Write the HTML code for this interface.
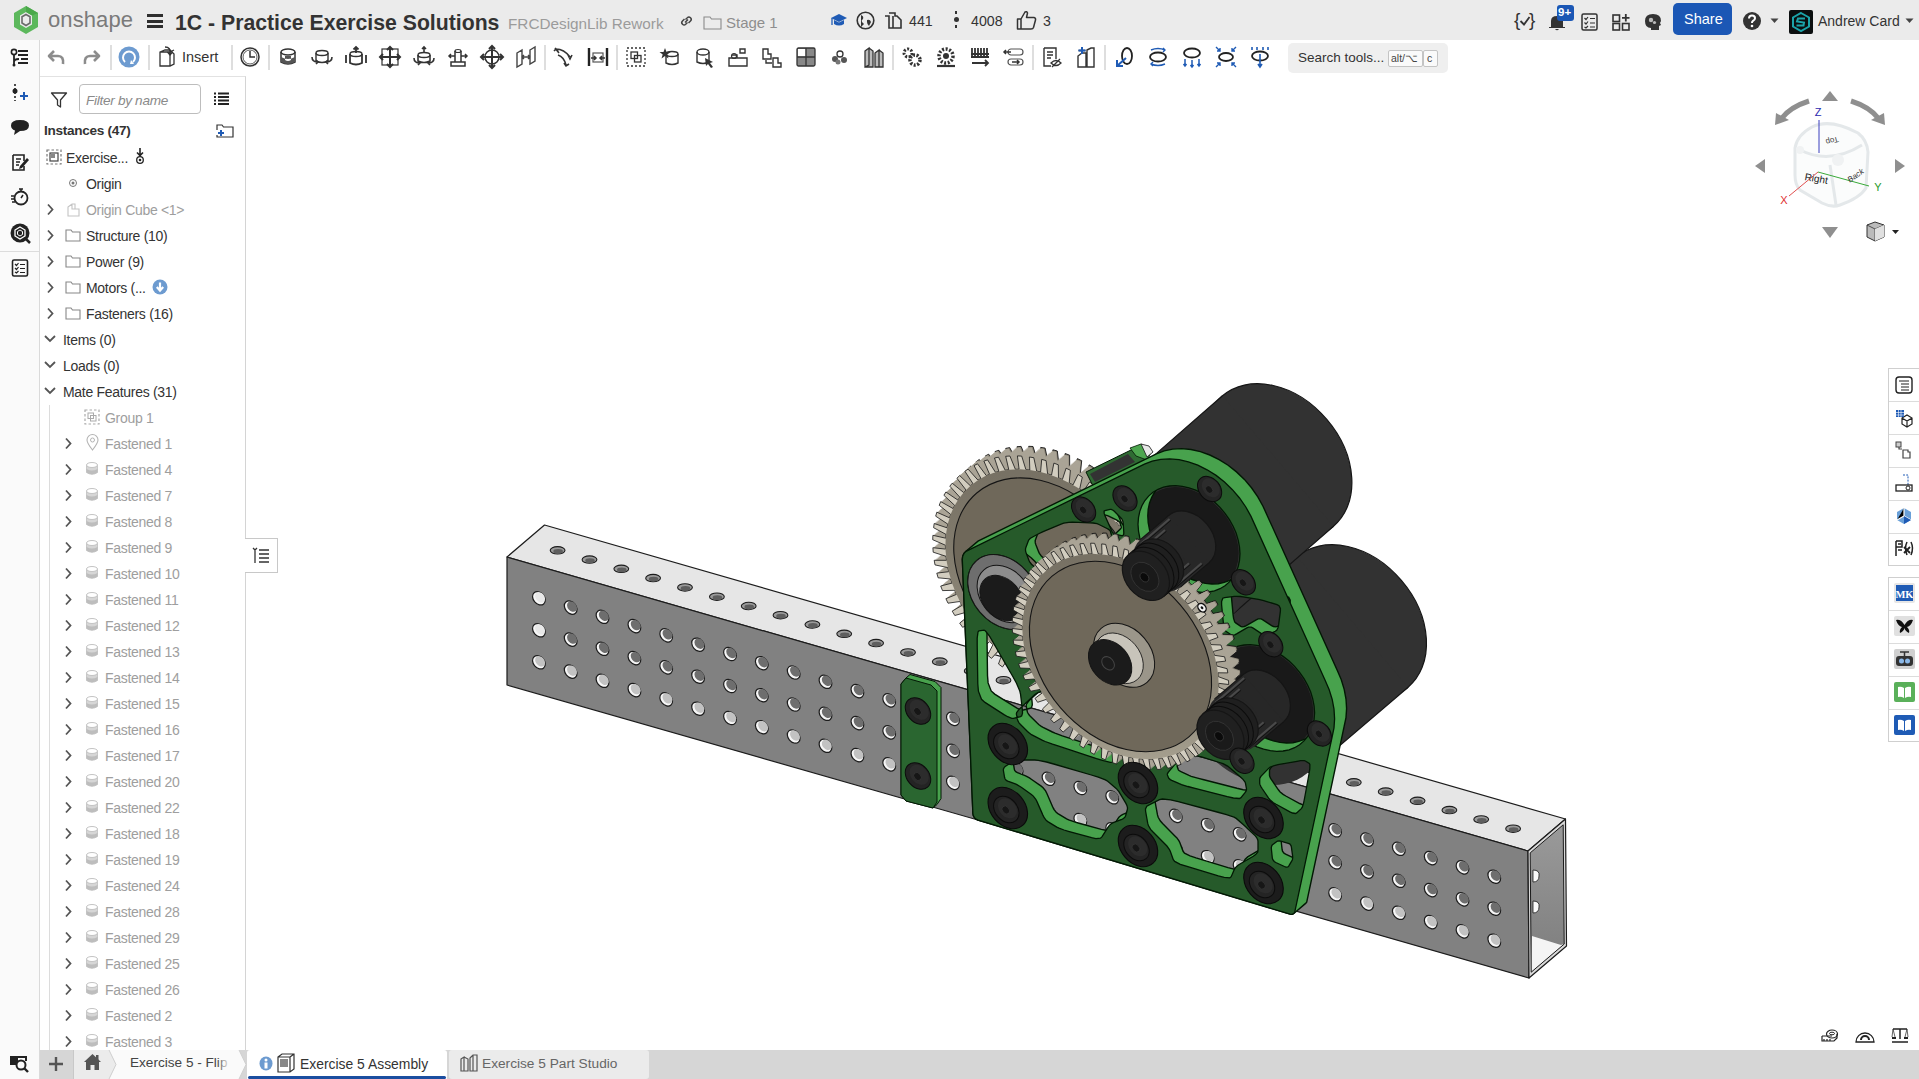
<!DOCTYPE html>
<html><head><meta charset="utf-8">
<style>
*{box-sizing:border-box;margin:0;padding:0}
html,body{width:1919px;height:1079px;overflow:hidden;background:#fff;font-family:"Liberation Sans",sans-serif;color:#333}
.a{position:absolute}
#top{left:0;top:0;width:1919px;height:40px;background:#ebebeb}
#tb{left:0;top:40px;width:1919px;height:37px;background:#fff}
#lc{left:0;top:40px;width:40px;height:1039px;background:#fafafa;border-right:1px solid #dadada}
#panel{left:40px;top:76px;width:206px;height:974px;background:#fff;border-right:1px solid #d4d4d4;border-top:1px solid #e2e2e2}
.t{position:absolute;white-space:nowrap;font-size:13.5px;line-height:16px}
.g{color:#9a9a9a}
.sep{position:absolute;top:45px;width:2px;height:25px;background:#dedede}
#bot{left:40px;top:1050px;width:1879px;height:29px;background:#d6d6d6}
svg{position:absolute;overflow:visible}
</style></head><body>
<div id="top" class="a"></div>
<div id="tb" class="a"></div>
<div id="lc" class="a"></div>
<div id="panel" class="a"></div>
<div id="bot" class="a"></div>

<!-- TOP BAR -->
<svg class="a" style="left:13px;top:5px" width="26" height="30" viewBox="0 0 26 30">
<path d="M13 1 L25 8 L25 22 L13 29 L1 22 L1 8 Z" fill="#5cb85c"/>
<path d="M13 7 L19 10.5 L19 19.5 L13 23 L7 19.5 L7 10.5 Z" fill="#ebebeb"/>
<path d="M13 9.5 L17 11.8 L17 18 L13 20.5 L9 18 L9 11.8 Z" fill="none" stroke="#6b6b6b" stroke-width="1.6"/>
<path d="M13 1 L25 8 L19 10.5 L13 7Z" fill="#4aa84a"/>
</svg>
<div class="t" style="left:48px;top:7px;font-size:22px;line-height:26px;color:#7a7a7a;letter-spacing:0.1px">onshape</div>
<div class="a" style="left:147px;top:14px;width:16px;height:3px;background:#2e2e2e"></div>
<div class="a" style="left:147px;top:19.5px;width:16px;height:3px;background:#2e2e2e"></div>
<div class="a" style="left:147px;top:25px;width:16px;height:3px;background:#2e2e2e"></div>
<div class="t" style="left:175px;top:10.5px;font-size:22.4px;line-height:24px;font-weight:bold;color:#333;transform:scaleX(0.948);transform-origin:0 0">1C - Practice Exercise Solutions</div>
<div class="t" style="left:508px;top:14.5px;font-size:15.3px;line-height:18px;color:#9b9b9b">FRCDesignLib Rework</div>
<svg class="a" style="left:679px;top:14px" width="15" height="14" viewBox="0 0 15 14"><path d="M6 8.5 L9 5.5 M5.5 5 L3.5 7 a2.2 2.2 0 0 0 3.2 3.2 L8.5 8.5 M9.5 9 L11.5 7 a2.2 2.2 0 0 0 -3.2 -3.2 L6.5 5.5" fill="none" stroke="#444" stroke-width="1.5"/></svg>
<svg class="a" style="left:703px;top:15px" width="19" height="15" viewBox="0 0 19 15"><path d="M1 2 H7 L8.5 4 H18 V14 H1 Z" fill="none" stroke="#8a8a8a" stroke-width="1.1"/></svg>
<div class="t" style="left:726px;top:14px;font-size:15px;line-height:18px;color:#8e8e8e">Stage 1</div>
<svg class="a" style="left:830px;top:12px" width="18" height="17" viewBox="0 0 18 17"><path d="M9 2 L17 6 L9 10 L1 6Z" fill="#1f5bb5"/><path d="M4 8 V12 Q9 15 14 12 V8 L9 10.5Z" fill="#1f5bb5"/><path d="M2 6 V13" stroke="#1f5bb5" stroke-width="1.3"/></svg>
<svg class="a" style="left:856px;top:11px" width="19" height="19" viewBox="0 0 19 19"><circle cx="9.5" cy="9.5" r="8.3" fill="none" stroke="#333" stroke-width="1.6"/><path d="M5 4 Q8 5 7 8 Q5 9 6 11 L8 13 Q6 15 5 16 M11 9 Q14 8 15 11 L13 15 Q11 13 11 11Z" fill="#333"/></svg>
<svg class="a" style="left:884px;top:12px" width="19" height="17" viewBox="0 0 19 17"><path d="M1 4 H5 V16 H12 M5 1 H11 V4 H13 L17 8 V16 H9 V4" fill="none" stroke="#333" stroke-width="1.6"/></svg>
<div class="t" style="left:909px;top:12px;font-size:14.2px;line-height:18px;color:#333">441</div>
<div class="a" style="left:955px;top:11px;width:2px;height:3px;background:#333"></div>
<div class="a" style="left:953.5px;top:17px;width:5px;height:5px;border-radius:3px;background:#333"></div>
<div class="a" style="left:955px;top:25px;width:2px;height:3px;background:#333"></div>
<div class="t" style="left:971px;top:12px;font-size:14.2px;line-height:18px;color:#333">4008</div>
<svg class="a" style="left:1016px;top:10px" width="21" height="20" viewBox="0 0 21 20"><path d="M1.5 9 H5 V19 H1.5Z M5 9 L9 2 Q11 1 11.5 3 L10.5 7.5 H18 Q20 8 19.5 10 L17.5 17.5 Q17 19 15 19 H5" fill="none" stroke="#333" stroke-width="1.5" stroke-linejoin="round"/></svg>
<div class="t" style="left:1043px;top:12px;font-size:14.2px;line-height:18px;color:#333">3</div>

<div class="t" style="left:1514px;top:9px;font-size:19px;line-height:22px;color:#333">{</div>
<svg class="a" style="left:1519px;top:15px" width="12" height="12" viewBox="0 0 12 12"><path d="M1.5 6 L5 9.5 L10.5 2" fill="none" stroke="#333" stroke-width="1.8"/></svg>
<div class="t" style="left:1529px;top:9px;font-size:19px;line-height:22px;color:#333">}</div>
<svg class="a" style="left:1548px;top:12px" width="18" height="19" viewBox="0 0 18 19"><path d="M3 15 V9 Q3 4 9 4 Q15 4 15 9 V15 H17 V16 H1 V15Z M7 17 Q9 19.5 11 17Z" fill="#333"/></svg>
<div class="a" style="left:1557px;top:5px;width:17px;height:16px;background:#1b57b5;border-radius:3px"></div>
<div class="t" style="left:1558px;top:5px;font-size:11.5px;line-height:14px;color:#fff;font-weight:bold">9+</div>
<svg class="a" style="left:1581px;top:13px" width="17" height="18" viewBox="0 0 17 18"><rect x="1" y="1" width="15" height="16" rx="1.5" fill="none" stroke="#333" stroke-width="1.5"/><path d="M3.5 5 L5 6.5 L7 4 M3.5 9.5 L5 11 L7 8.5 M3.5 14 L5 15 L7 13 M9 5.5H14 M9 10H14 M9 14H14" fill="none" stroke="#333" stroke-width="1.2"/></svg>
<svg class="a" style="left:1612px;top:13px" width="19" height="18" viewBox="0 0 19 18"><rect x="1" y="2" width="6.5" height="6.5" fill="none" stroke="#333" stroke-width="1.6"/><rect x="1" y="10.5" width="6.5" height="6.5" fill="none" stroke="#333" stroke-width="1.6"/><rect x="10.5" y="10.5" width="6.5" height="6.5" fill="none" stroke="#333" stroke-width="1.6"/><path d="M13.8 1 V8.5 M10 4.8 H17.5" stroke="#333" stroke-width="1.8"/></svg>
<svg class="a" style="left:1644px;top:13px" width="18" height="18" viewBox="0 0 18 18"><path d="M9 1 Q17 1 17 8 L16 10 L17 12 L15 13 V17 H7 V15 Q1 15 1 8 Q1 1 9 1Z" fill="#333"/><circle cx="7" cy="7" r="2.2" fill="#bbb"/><circle cx="10.5" cy="9.5" r="1.6" fill="#bbb"/></svg>
<div class="a" style="left:1673px;top:3px;width:59px;height:32px;background:#1b57b5;border-radius:5px"></div>
<div class="t" style="left:1684px;top:11px;font-size:14.5px;line-height:17px;color:#fff">Share</div>
<svg class="a" style="left:1742px;top:11px" width="20" height="20" viewBox="0 0 20 20"><circle cx="10" cy="10" r="9" fill="#333"/><path d="M7 7.5 Q7 4.5 10 4.5 Q13 4.5 13 7.2 Q13 9 10.8 10 Q10 10.5 10 12" fill="none" stroke="#fff" stroke-width="2"/><circle cx="10" cy="15" r="1.3" fill="#fff"/></svg>
<svg class="a" style="left:1770px;top:18px" width="9" height="6" viewBox="0 0 9 6"><path d="M0.5 0.5 H8.5 L4.5 5Z" fill="#444"/></svg>
<svg class="a" style="left:1789px;top:10px" width="24" height="24" viewBox="0 0 24 24"><rect width="24" height="24" rx="2" fill="#0b0e0f"/><path d="M12 3 L20 7.5 V16.5 L12 21 L4 16.5 V7.5Z" fill="none" stroke="#1ba3a9" stroke-width="2"/><path d="M16 8.5 L9 8.5 L8 11.5 L15 12.5 L14.5 15.5 L7.5 15.5" fill="none" stroke="#1ba3a9" stroke-width="2"/></svg>
<div class="t" style="left:1818px;top:12px;font-size:14px;line-height:18px;color:#333">Andrew Card</div>
<svg class="a" style="left:1905px;top:18px" width="9" height="6" viewBox="0 0 9 6"><path d="M0.5 0.5 H8.5 L4.5 5Z" fill="#444"/></svg>

<!-- MODEL -->
<svg class="a" style="left:0;top:0" width="1919" height="1079" viewBox="0 0 1919 1079">
<polygon points="507.0,557.0 544.5,525.0 1565.5,819.0 1528.0,851.0" fill="#e6e6e6" stroke="#1c1c1c" stroke-width="1.2" stroke-linejoin="round"/>
<polygon points="507.0,557.0 1528.0,851.0 1529.0,978.0 507.0,685.0" fill="#818181" stroke="#1c1c1c" stroke-width="1.2" stroke-linejoin="round"/>
<polygon points="1528.0,851.0 1565.5,819.0 1566.5,946.0 1529.0,978.0" fill="#d9d9d9" stroke="#1c1c1c" stroke-width="1.2" stroke-linejoin="round"/>
<defs><linearGradient id="tin" x1="0" y1="0" x2="0" y2="1"><stop offset="0" stop-color="#9a9a9a"/><stop offset="1" stop-color="#7c7c7c"/></linearGradient></defs>
<polygon points="1530.2,852.9 1563.2,824.8 1564.2,944.1 1531.2,972.2" fill="url(#tin)"/>
<polygon points="1532.0,936.0 1561.0,945.0 1564.2,944.1 1531.2,972.2" fill="#f4f4f4"/>
<polygon points="1530.2,852.9 1563.2,824.8 1564.2,944.1 1531.2,972.2" fill="none" stroke="#1c1c1c" stroke-width="1"/>
<path d="M1533,870 Q1540,870 1539,876 Q1539,882 1533,882Z" fill="#fafafa" stroke="#1c1c1c" stroke-width="0.8"/>
<path d="M1533,901 Q1540,901 1539,907 Q1539,913 1533,913Z" fill="#fafafa" stroke="#1c1c1c" stroke-width="0.8"/>
<ellipse cx="557.6" cy="550.3" rx="7.39" ry="3.70" transform="rotate(179.75 557.6 550.3)" fill="#9a9a9a" stroke="#1c1c1c" stroke-width="1.1"/>
<ellipse cx="558.1" cy="551.3" rx="4.80" ry="2.40" transform="rotate(179.75 558.1 551.3)" fill="#5e5e5e"/>
<ellipse cx="589.5" cy="559.6" rx="7.39" ry="3.70" transform="rotate(179.75 589.5 559.6)" fill="#9a9a9a" stroke="#1c1c1c" stroke-width="1.1"/>
<ellipse cx="590.0" cy="560.6" rx="4.80" ry="2.40" transform="rotate(179.75 590.0 560.6)" fill="#5e5e5e"/>
<ellipse cx="621.3" cy="568.8" rx="7.39" ry="3.70" transform="rotate(179.75 621.3 568.8)" fill="#9a9a9a" stroke="#1c1c1c" stroke-width="1.1"/>
<ellipse cx="621.8" cy="569.8" rx="4.80" ry="2.40" transform="rotate(179.75 621.8 569.8)" fill="#5e5e5e"/>
<ellipse cx="653.1" cy="578.1" rx="7.39" ry="3.70" transform="rotate(179.75 653.1 578.1)" fill="#9a9a9a" stroke="#1c1c1c" stroke-width="1.1"/>
<ellipse cx="653.6" cy="579.1" rx="4.80" ry="2.40" transform="rotate(179.75 653.6 579.1)" fill="#5e5e5e"/>
<ellipse cx="685.0" cy="587.4" rx="7.39" ry="3.70" transform="rotate(179.75 685.0 587.4)" fill="#9a9a9a" stroke="#1c1c1c" stroke-width="1.1"/>
<ellipse cx="685.5" cy="588.4" rx="4.80" ry="2.40" transform="rotate(179.75 685.5 588.4)" fill="#5e5e5e"/>
<ellipse cx="716.9" cy="596.7" rx="7.39" ry="3.70" transform="rotate(179.75 716.9 596.7)" fill="#9a9a9a" stroke="#1c1c1c" stroke-width="1.1"/>
<ellipse cx="717.4" cy="597.7" rx="4.80" ry="2.40" transform="rotate(179.75 717.4 597.7)" fill="#5e5e5e"/>
<ellipse cx="748.7" cy="606.0" rx="7.39" ry="3.70" transform="rotate(179.75 748.7 606.0)" fill="#9a9a9a" stroke="#1c1c1c" stroke-width="1.1"/>
<ellipse cx="749.2" cy="607.0" rx="4.80" ry="2.40" transform="rotate(179.75 749.2 607.0)" fill="#5e5e5e"/>
<ellipse cx="780.5" cy="615.2" rx="7.39" ry="3.70" transform="rotate(179.75 780.5 615.2)" fill="#9a9a9a" stroke="#1c1c1c" stroke-width="1.1"/>
<ellipse cx="781.0" cy="616.2" rx="4.80" ry="2.40" transform="rotate(179.75 781.0 616.2)" fill="#5e5e5e"/>
<ellipse cx="812.4" cy="624.5" rx="7.39" ry="3.70" transform="rotate(179.75 812.4 624.5)" fill="#9a9a9a" stroke="#1c1c1c" stroke-width="1.1"/>
<ellipse cx="812.9" cy="625.5" rx="4.80" ry="2.40" transform="rotate(179.75 812.9 625.5)" fill="#5e5e5e"/>
<ellipse cx="844.2" cy="633.8" rx="7.39" ry="3.70" transform="rotate(179.75 844.2 633.8)" fill="#9a9a9a" stroke="#1c1c1c" stroke-width="1.1"/>
<ellipse cx="844.8" cy="634.8" rx="4.80" ry="2.40" transform="rotate(179.75 844.8 634.8)" fill="#5e5e5e"/>
<ellipse cx="876.1" cy="643.1" rx="7.39" ry="3.70" transform="rotate(179.75 876.1 643.1)" fill="#9a9a9a" stroke="#1c1c1c" stroke-width="1.1"/>
<ellipse cx="876.6" cy="644.1" rx="4.80" ry="2.40" transform="rotate(179.75 876.6 644.1)" fill="#5e5e5e"/>
<ellipse cx="908.0" cy="652.4" rx="7.39" ry="3.70" transform="rotate(179.75 908.0 652.4)" fill="#9a9a9a" stroke="#1c1c1c" stroke-width="1.1"/>
<ellipse cx="908.5" cy="653.4" rx="4.80" ry="2.40" transform="rotate(179.75 908.5 653.4)" fill="#5e5e5e"/>
<ellipse cx="939.8" cy="661.6" rx="7.39" ry="3.70" transform="rotate(179.75 939.8 661.6)" fill="#9a9a9a" stroke="#1c1c1c" stroke-width="1.1"/>
<ellipse cx="940.3" cy="662.6" rx="4.80" ry="2.40" transform="rotate(179.75 940.3 662.6)" fill="#5e5e5e"/>
<ellipse cx="971.7" cy="670.9" rx="7.39" ry="3.70" transform="rotate(179.75 971.7 670.9)" fill="#9a9a9a" stroke="#1c1c1c" stroke-width="1.1"/>
<ellipse cx="972.2" cy="671.9" rx="4.80" ry="2.40" transform="rotate(179.75 972.2 671.9)" fill="#5e5e5e"/>
<ellipse cx="1003.5" cy="680.2" rx="7.39" ry="3.70" transform="rotate(179.75 1003.5 680.2)" fill="#9a9a9a" stroke="#1c1c1c" stroke-width="1.1"/>
<ellipse cx="1004.0" cy="681.2" rx="4.80" ry="2.40" transform="rotate(179.75 1004.0 681.2)" fill="#5e5e5e"/>
<ellipse cx="1035.3" cy="689.5" rx="7.39" ry="3.70" transform="rotate(179.75 1035.3 689.5)" fill="#9a9a9a" stroke="#1c1c1c" stroke-width="1.1"/>
<ellipse cx="1035.8" cy="690.5" rx="4.80" ry="2.40" transform="rotate(179.75 1035.8 690.5)" fill="#5e5e5e"/>
<ellipse cx="1067.2" cy="698.8" rx="7.39" ry="3.70" transform="rotate(179.75 1067.2 698.8)" fill="#9a9a9a" stroke="#1c1c1c" stroke-width="1.1"/>
<ellipse cx="1067.7" cy="699.8" rx="4.80" ry="2.40" transform="rotate(179.75 1067.7 699.8)" fill="#5e5e5e"/>
<ellipse cx="1099.1" cy="708.0" rx="7.39" ry="3.70" transform="rotate(179.75 1099.1 708.0)" fill="#9a9a9a" stroke="#1c1c1c" stroke-width="1.1"/>
<ellipse cx="1099.6" cy="709.0" rx="4.80" ry="2.40" transform="rotate(179.75 1099.6 709.0)" fill="#5e5e5e"/>
<ellipse cx="1130.9" cy="717.3" rx="7.39" ry="3.70" transform="rotate(179.75 1130.9 717.3)" fill="#9a9a9a" stroke="#1c1c1c" stroke-width="1.1"/>
<ellipse cx="1131.4" cy="718.3" rx="4.80" ry="2.40" transform="rotate(179.75 1131.4 718.3)" fill="#5e5e5e"/>
<ellipse cx="1162.8" cy="726.6" rx="7.39" ry="3.70" transform="rotate(179.75 1162.8 726.6)" fill="#9a9a9a" stroke="#1c1c1c" stroke-width="1.1"/>
<ellipse cx="1163.2" cy="727.6" rx="4.80" ry="2.40" transform="rotate(179.75 1163.2 727.6)" fill="#5e5e5e"/>
<ellipse cx="1194.6" cy="735.9" rx="7.39" ry="3.70" transform="rotate(179.75 1194.6 735.9)" fill="#9a9a9a" stroke="#1c1c1c" stroke-width="1.1"/>
<ellipse cx="1195.1" cy="736.9" rx="4.80" ry="2.40" transform="rotate(179.75 1195.1 736.9)" fill="#5e5e5e"/>
<ellipse cx="1226.5" cy="745.2" rx="7.39" ry="3.70" transform="rotate(179.75 1226.5 745.2)" fill="#9a9a9a" stroke="#1c1c1c" stroke-width="1.1"/>
<ellipse cx="1227.0" cy="746.2" rx="4.80" ry="2.40" transform="rotate(179.75 1227.0 746.2)" fill="#5e5e5e"/>
<ellipse cx="1258.3" cy="754.4" rx="7.39" ry="3.70" transform="rotate(179.75 1258.3 754.4)" fill="#9a9a9a" stroke="#1c1c1c" stroke-width="1.1"/>
<ellipse cx="1258.8" cy="755.4" rx="4.80" ry="2.40" transform="rotate(179.75 1258.8 755.4)" fill="#5e5e5e"/>
<ellipse cx="1290.2" cy="763.7" rx="7.39" ry="3.70" transform="rotate(179.75 1290.2 763.7)" fill="#9a9a9a" stroke="#1c1c1c" stroke-width="1.1"/>
<ellipse cx="1290.7" cy="764.7" rx="4.80" ry="2.40" transform="rotate(179.75 1290.7 764.7)" fill="#5e5e5e"/>
<ellipse cx="1322.0" cy="773.0" rx="7.39" ry="3.70" transform="rotate(179.75 1322.0 773.0)" fill="#9a9a9a" stroke="#1c1c1c" stroke-width="1.1"/>
<ellipse cx="1322.5" cy="774.0" rx="4.80" ry="2.40" transform="rotate(179.75 1322.5 774.0)" fill="#5e5e5e"/>
<ellipse cx="1353.8" cy="782.3" rx="7.39" ry="3.70" transform="rotate(179.75 1353.8 782.3)" fill="#9a9a9a" stroke="#1c1c1c" stroke-width="1.1"/>
<ellipse cx="1354.3" cy="783.3" rx="4.80" ry="2.40" transform="rotate(179.75 1354.3 783.3)" fill="#5e5e5e"/>
<ellipse cx="1385.7" cy="791.6" rx="7.39" ry="3.70" transform="rotate(179.75 1385.7 791.6)" fill="#9a9a9a" stroke="#1c1c1c" stroke-width="1.1"/>
<ellipse cx="1386.2" cy="792.6" rx="4.80" ry="2.40" transform="rotate(179.75 1386.2 792.6)" fill="#5e5e5e"/>
<ellipse cx="1417.6" cy="800.8" rx="7.39" ry="3.70" transform="rotate(179.75 1417.6 800.8)" fill="#9a9a9a" stroke="#1c1c1c" stroke-width="1.1"/>
<ellipse cx="1418.1" cy="801.8" rx="4.80" ry="2.40" transform="rotate(179.75 1418.1 801.8)" fill="#5e5e5e"/>
<ellipse cx="1449.4" cy="810.1" rx="7.39" ry="3.70" transform="rotate(179.75 1449.4 810.1)" fill="#9a9a9a" stroke="#1c1c1c" stroke-width="1.1"/>
<ellipse cx="1449.9" cy="811.1" rx="4.80" ry="2.40" transform="rotate(179.75 1449.9 811.1)" fill="#5e5e5e"/>
<ellipse cx="1481.2" cy="819.4" rx="7.39" ry="3.70" transform="rotate(179.75 1481.2 819.4)" fill="#9a9a9a" stroke="#1c1c1c" stroke-width="1.1"/>
<ellipse cx="1481.8" cy="820.4" rx="4.80" ry="2.40" transform="rotate(179.75 1481.8 820.4)" fill="#5e5e5e"/>
<ellipse cx="1513.1" cy="828.7" rx="7.39" ry="3.70" transform="rotate(179.75 1513.1 828.7)" fill="#9a9a9a" stroke="#1c1c1c" stroke-width="1.1"/>
<ellipse cx="1513.6" cy="829.7" rx="4.80" ry="2.40" transform="rotate(179.75 1513.6 829.7)" fill="#5e5e5e"/>
<ellipse cx="538.9" cy="598.3" rx="7.38" ry="5.52" transform="rotate(-130.40 538.9 598.3)" fill="#f6f6f6" stroke="#1c1c1c" stroke-width="1.2"/>
<ellipse cx="540.1" cy="597.3" rx="5.76" ry="4.31" transform="rotate(-130.40 540.1 597.3)" fill="#e8e8e8"/>
<ellipse cx="538.9" cy="630.3" rx="7.38" ry="5.52" transform="rotate(-130.40 538.9 630.3)" fill="#f6f6f6" stroke="#1c1c1c" stroke-width="1.2"/>
<ellipse cx="540.1" cy="629.3" rx="5.76" ry="4.31" transform="rotate(-130.40 540.1 629.3)" fill="#e8e8e8"/>
<ellipse cx="538.9" cy="662.3" rx="7.38" ry="5.52" transform="rotate(-130.40 538.9 662.3)" fill="#f6f6f6" stroke="#1c1c1c" stroke-width="1.2"/>
<ellipse cx="540.1" cy="661.3" rx="5.76" ry="4.31" transform="rotate(-130.40 540.1 661.3)" fill="#c2c2c2"/>
<ellipse cx="570.7" cy="607.6" rx="7.38" ry="5.52" transform="rotate(-130.40 570.7 607.6)" fill="#f6f6f6" stroke="#1c1c1c" stroke-width="1.2"/>
<ellipse cx="572.0" cy="606.6" rx="5.76" ry="4.31" transform="rotate(-130.40 572.0 606.6)" fill="#6e6e6e"/>
<ellipse cx="570.7" cy="639.6" rx="7.38" ry="5.52" transform="rotate(-130.40 570.7 639.6)" fill="#f6f6f6" stroke="#1c1c1c" stroke-width="1.2"/>
<ellipse cx="572.0" cy="638.6" rx="5.76" ry="4.31" transform="rotate(-130.40 572.0 638.6)" fill="#6e6e6e"/>
<ellipse cx="570.7" cy="671.6" rx="7.38" ry="5.52" transform="rotate(-130.40 570.7 671.6)" fill="#f6f6f6" stroke="#1c1c1c" stroke-width="1.2"/>
<ellipse cx="572.0" cy="670.6" rx="5.76" ry="4.31" transform="rotate(-130.40 572.0 670.6)" fill="#c2c2c2"/>
<ellipse cx="602.5" cy="616.8" rx="7.38" ry="5.52" transform="rotate(-130.40 602.5 616.8)" fill="#f6f6f6" stroke="#1c1c1c" stroke-width="1.2"/>
<ellipse cx="603.8" cy="615.8" rx="5.76" ry="4.31" transform="rotate(-130.40 603.8 615.8)" fill="#6e6e6e"/>
<ellipse cx="602.5" cy="648.8" rx="7.38" ry="5.52" transform="rotate(-130.40 602.5 648.8)" fill="#f6f6f6" stroke="#1c1c1c" stroke-width="1.2"/>
<ellipse cx="603.8" cy="647.8" rx="5.76" ry="4.31" transform="rotate(-130.40 603.8 647.8)" fill="#6e6e6e"/>
<ellipse cx="602.5" cy="680.8" rx="7.38" ry="5.52" transform="rotate(-130.40 602.5 680.8)" fill="#f6f6f6" stroke="#1c1c1c" stroke-width="1.2"/>
<ellipse cx="603.8" cy="679.8" rx="5.76" ry="4.31" transform="rotate(-130.40 603.8 679.8)" fill="#c2c2c2"/>
<ellipse cx="634.4" cy="626.1" rx="7.38" ry="5.52" transform="rotate(-130.40 634.4 626.1)" fill="#f6f6f6" stroke="#1c1c1c" stroke-width="1.2"/>
<ellipse cx="635.7" cy="625.1" rx="5.76" ry="4.31" transform="rotate(-130.40 635.7 625.1)" fill="#6e6e6e"/>
<ellipse cx="634.4" cy="658.1" rx="7.38" ry="5.52" transform="rotate(-130.40 634.4 658.1)" fill="#f6f6f6" stroke="#1c1c1c" stroke-width="1.2"/>
<ellipse cx="635.7" cy="657.1" rx="5.76" ry="4.31" transform="rotate(-130.40 635.7 657.1)" fill="#6e6e6e"/>
<ellipse cx="634.4" cy="690.1" rx="7.38" ry="5.52" transform="rotate(-130.40 634.4 690.1)" fill="#f6f6f6" stroke="#1c1c1c" stroke-width="1.2"/>
<ellipse cx="635.7" cy="689.1" rx="5.76" ry="4.31" transform="rotate(-130.40 635.7 689.1)" fill="#c2c2c2"/>
<ellipse cx="666.2" cy="635.4" rx="7.38" ry="5.52" transform="rotate(-130.40 666.2 635.4)" fill="#f6f6f6" stroke="#1c1c1c" stroke-width="1.2"/>
<ellipse cx="667.5" cy="634.4" rx="5.76" ry="4.31" transform="rotate(-130.40 667.5 634.4)" fill="#6e6e6e"/>
<ellipse cx="666.2" cy="667.4" rx="7.38" ry="5.52" transform="rotate(-130.40 666.2 667.4)" fill="#f6f6f6" stroke="#1c1c1c" stroke-width="1.2"/>
<ellipse cx="667.5" cy="666.4" rx="5.76" ry="4.31" transform="rotate(-130.40 667.5 666.4)" fill="#6e6e6e"/>
<ellipse cx="666.2" cy="699.4" rx="7.38" ry="5.52" transform="rotate(-130.40 666.2 699.4)" fill="#f6f6f6" stroke="#1c1c1c" stroke-width="1.2"/>
<ellipse cx="667.5" cy="698.4" rx="5.76" ry="4.31" transform="rotate(-130.40 667.5 698.4)" fill="#c2c2c2"/>
<ellipse cx="698.1" cy="644.7" rx="7.38" ry="5.52" transform="rotate(-130.40 698.1 644.7)" fill="#f6f6f6" stroke="#1c1c1c" stroke-width="1.2"/>
<ellipse cx="699.4" cy="643.7" rx="5.76" ry="4.31" transform="rotate(-130.40 699.4 643.7)" fill="#6e6e6e"/>
<ellipse cx="698.1" cy="676.7" rx="7.38" ry="5.52" transform="rotate(-130.40 698.1 676.7)" fill="#f6f6f6" stroke="#1c1c1c" stroke-width="1.2"/>
<ellipse cx="699.4" cy="675.7" rx="5.76" ry="4.31" transform="rotate(-130.40 699.4 675.7)" fill="#6e6e6e"/>
<ellipse cx="698.1" cy="708.7" rx="7.38" ry="5.52" transform="rotate(-130.40 698.1 708.7)" fill="#f6f6f6" stroke="#1c1c1c" stroke-width="1.2"/>
<ellipse cx="699.4" cy="707.7" rx="5.76" ry="4.31" transform="rotate(-130.40 699.4 707.7)" fill="#c2c2c2"/>
<ellipse cx="730.0" cy="654.0" rx="7.38" ry="5.52" transform="rotate(-130.40 730.0 654.0)" fill="#f6f6f6" stroke="#1c1c1c" stroke-width="1.2"/>
<ellipse cx="731.2" cy="653.0" rx="5.76" ry="4.31" transform="rotate(-130.40 731.2 653.0)" fill="#6e6e6e"/>
<ellipse cx="730.0" cy="686.0" rx="7.38" ry="5.52" transform="rotate(-130.40 730.0 686.0)" fill="#f6f6f6" stroke="#1c1c1c" stroke-width="1.2"/>
<ellipse cx="731.2" cy="685.0" rx="5.76" ry="4.31" transform="rotate(-130.40 731.2 685.0)" fill="#6e6e6e"/>
<ellipse cx="730.0" cy="718.0" rx="7.38" ry="5.52" transform="rotate(-130.40 730.0 718.0)" fill="#f6f6f6" stroke="#1c1c1c" stroke-width="1.2"/>
<ellipse cx="731.2" cy="717.0" rx="5.76" ry="4.31" transform="rotate(-130.40 731.2 717.0)" fill="#c2c2c2"/>
<ellipse cx="761.8" cy="663.2" rx="7.38" ry="5.52" transform="rotate(-130.40 761.8 663.2)" fill="#f6f6f6" stroke="#1c1c1c" stroke-width="1.2"/>
<ellipse cx="763.1" cy="662.2" rx="5.76" ry="4.31" transform="rotate(-130.40 763.1 662.2)" fill="#6e6e6e"/>
<ellipse cx="761.8" cy="695.2" rx="7.38" ry="5.52" transform="rotate(-130.40 761.8 695.2)" fill="#f6f6f6" stroke="#1c1c1c" stroke-width="1.2"/>
<ellipse cx="763.1" cy="694.2" rx="5.76" ry="4.31" transform="rotate(-130.40 763.1 694.2)" fill="#6e6e6e"/>
<ellipse cx="761.8" cy="727.2" rx="7.38" ry="5.52" transform="rotate(-130.40 761.8 727.2)" fill="#f6f6f6" stroke="#1c1c1c" stroke-width="1.2"/>
<ellipse cx="763.1" cy="726.2" rx="5.76" ry="4.31" transform="rotate(-130.40 763.1 726.2)" fill="#c2c2c2"/>
<ellipse cx="793.7" cy="672.5" rx="7.38" ry="5.52" transform="rotate(-130.40 793.7 672.5)" fill="#f6f6f6" stroke="#1c1c1c" stroke-width="1.2"/>
<ellipse cx="795.0" cy="671.5" rx="5.76" ry="4.31" transform="rotate(-130.40 795.0 671.5)" fill="#6e6e6e"/>
<ellipse cx="793.7" cy="704.5" rx="7.38" ry="5.52" transform="rotate(-130.40 793.7 704.5)" fill="#f6f6f6" stroke="#1c1c1c" stroke-width="1.2"/>
<ellipse cx="795.0" cy="703.5" rx="5.76" ry="4.31" transform="rotate(-130.40 795.0 703.5)" fill="#6e6e6e"/>
<ellipse cx="793.7" cy="736.5" rx="7.38" ry="5.52" transform="rotate(-130.40 793.7 736.5)" fill="#f6f6f6" stroke="#1c1c1c" stroke-width="1.2"/>
<ellipse cx="795.0" cy="735.5" rx="5.76" ry="4.31" transform="rotate(-130.40 795.0 735.5)" fill="#c2c2c2"/>
<ellipse cx="825.5" cy="681.8" rx="7.38" ry="5.52" transform="rotate(-130.40 825.5 681.8)" fill="#f6f6f6" stroke="#1c1c1c" stroke-width="1.2"/>
<ellipse cx="826.8" cy="680.8" rx="5.76" ry="4.31" transform="rotate(-130.40 826.8 680.8)" fill="#6e6e6e"/>
<ellipse cx="825.5" cy="713.8" rx="7.38" ry="5.52" transform="rotate(-130.40 825.5 713.8)" fill="#f6f6f6" stroke="#1c1c1c" stroke-width="1.2"/>
<ellipse cx="826.8" cy="712.8" rx="5.76" ry="4.31" transform="rotate(-130.40 826.8 712.8)" fill="#6e6e6e"/>
<ellipse cx="825.5" cy="745.8" rx="7.38" ry="5.52" transform="rotate(-130.40 825.5 745.8)" fill="#f6f6f6" stroke="#1c1c1c" stroke-width="1.2"/>
<ellipse cx="826.8" cy="744.8" rx="5.76" ry="4.31" transform="rotate(-130.40 826.8 744.8)" fill="#c2c2c2"/>
<ellipse cx="857.4" cy="691.1" rx="7.38" ry="5.52" transform="rotate(-130.40 857.4 691.1)" fill="#f6f6f6" stroke="#1c1c1c" stroke-width="1.2"/>
<ellipse cx="858.6" cy="690.1" rx="5.76" ry="4.31" transform="rotate(-130.40 858.6 690.1)" fill="#6e6e6e"/>
<ellipse cx="857.4" cy="723.1" rx="7.38" ry="5.52" transform="rotate(-130.40 857.4 723.1)" fill="#f6f6f6" stroke="#1c1c1c" stroke-width="1.2"/>
<ellipse cx="858.6" cy="722.1" rx="5.76" ry="4.31" transform="rotate(-130.40 858.6 722.1)" fill="#6e6e6e"/>
<ellipse cx="857.4" cy="755.1" rx="7.38" ry="5.52" transform="rotate(-130.40 857.4 755.1)" fill="#f6f6f6" stroke="#1c1c1c" stroke-width="1.2"/>
<ellipse cx="858.6" cy="754.1" rx="5.76" ry="4.31" transform="rotate(-130.40 858.6 754.1)" fill="#c2c2c2"/>
<ellipse cx="889.2" cy="700.4" rx="7.38" ry="5.52" transform="rotate(-130.40 889.2 700.4)" fill="#f6f6f6" stroke="#1c1c1c" stroke-width="1.2"/>
<ellipse cx="890.5" cy="699.4" rx="5.76" ry="4.31" transform="rotate(-130.40 890.5 699.4)" fill="#6e6e6e"/>
<ellipse cx="889.2" cy="732.4" rx="7.38" ry="5.52" transform="rotate(-130.40 889.2 732.4)" fill="#f6f6f6" stroke="#1c1c1c" stroke-width="1.2"/>
<ellipse cx="890.5" cy="731.4" rx="5.76" ry="4.31" transform="rotate(-130.40 890.5 731.4)" fill="#6e6e6e"/>
<ellipse cx="889.2" cy="764.4" rx="7.38" ry="5.52" transform="rotate(-130.40 889.2 764.4)" fill="#f6f6f6" stroke="#1c1c1c" stroke-width="1.2"/>
<ellipse cx="890.5" cy="763.4" rx="5.76" ry="4.31" transform="rotate(-130.40 890.5 763.4)" fill="#c2c2c2"/>
<ellipse cx="921.0" cy="709.6" rx="7.38" ry="5.52" transform="rotate(-130.40 921.0 709.6)" fill="#f6f6f6" stroke="#1c1c1c" stroke-width="1.2"/>
<ellipse cx="922.3" cy="708.6" rx="5.76" ry="4.31" transform="rotate(-130.40 922.3 708.6)" fill="#6e6e6e"/>
<ellipse cx="921.0" cy="741.6" rx="7.38" ry="5.52" transform="rotate(-130.40 921.0 741.6)" fill="#f6f6f6" stroke="#1c1c1c" stroke-width="1.2"/>
<ellipse cx="922.3" cy="740.6" rx="5.76" ry="4.31" transform="rotate(-130.40 922.3 740.6)" fill="#6e6e6e"/>
<ellipse cx="921.0" cy="773.6" rx="7.38" ry="5.52" transform="rotate(-130.40 921.0 773.6)" fill="#f6f6f6" stroke="#1c1c1c" stroke-width="1.2"/>
<ellipse cx="922.3" cy="772.6" rx="5.76" ry="4.31" transform="rotate(-130.40 922.3 772.6)" fill="#c2c2c2"/>
<ellipse cx="952.9" cy="718.9" rx="7.38" ry="5.52" transform="rotate(-130.40 952.9 718.9)" fill="#f6f6f6" stroke="#1c1c1c" stroke-width="1.2"/>
<ellipse cx="954.2" cy="717.9" rx="5.76" ry="4.31" transform="rotate(-130.40 954.2 717.9)" fill="#6e6e6e"/>
<ellipse cx="952.9" cy="750.9" rx="7.38" ry="5.52" transform="rotate(-130.40 952.9 750.9)" fill="#f6f6f6" stroke="#1c1c1c" stroke-width="1.2"/>
<ellipse cx="954.2" cy="749.9" rx="5.76" ry="4.31" transform="rotate(-130.40 954.2 749.9)" fill="#6e6e6e"/>
<ellipse cx="952.9" cy="782.9" rx="7.38" ry="5.52" transform="rotate(-130.40 952.9 782.9)" fill="#f6f6f6" stroke="#1c1c1c" stroke-width="1.2"/>
<ellipse cx="954.2" cy="781.9" rx="5.76" ry="4.31" transform="rotate(-130.40 954.2 781.9)" fill="#c2c2c2"/>
<ellipse cx="984.8" cy="728.2" rx="7.38" ry="5.52" transform="rotate(-130.40 984.8 728.2)" fill="#f6f6f6" stroke="#1c1c1c" stroke-width="1.2"/>
<ellipse cx="986.0" cy="727.2" rx="5.76" ry="4.31" transform="rotate(-130.40 986.0 727.2)" fill="#6e6e6e"/>
<ellipse cx="984.8" cy="760.2" rx="7.38" ry="5.52" transform="rotate(-130.40 984.8 760.2)" fill="#f6f6f6" stroke="#1c1c1c" stroke-width="1.2"/>
<ellipse cx="986.0" cy="759.2" rx="5.76" ry="4.31" transform="rotate(-130.40 986.0 759.2)" fill="#6e6e6e"/>
<ellipse cx="984.8" cy="792.2" rx="7.38" ry="5.52" transform="rotate(-130.40 984.8 792.2)" fill="#f6f6f6" stroke="#1c1c1c" stroke-width="1.2"/>
<ellipse cx="986.0" cy="791.2" rx="5.76" ry="4.31" transform="rotate(-130.40 986.0 791.2)" fill="#c2c2c2"/>
<ellipse cx="1016.6" cy="737.5" rx="7.38" ry="5.52" transform="rotate(-130.40 1016.6 737.5)" fill="#f6f6f6" stroke="#1c1c1c" stroke-width="1.2"/>
<ellipse cx="1017.9" cy="736.5" rx="5.76" ry="4.31" transform="rotate(-130.40 1017.9 736.5)" fill="#6e6e6e"/>
<ellipse cx="1016.6" cy="769.5" rx="7.38" ry="5.52" transform="rotate(-130.40 1016.6 769.5)" fill="#f6f6f6" stroke="#1c1c1c" stroke-width="1.2"/>
<ellipse cx="1017.9" cy="768.5" rx="5.76" ry="4.31" transform="rotate(-130.40 1017.9 768.5)" fill="#6e6e6e"/>
<ellipse cx="1016.6" cy="801.5" rx="7.38" ry="5.52" transform="rotate(-130.40 1016.6 801.5)" fill="#f6f6f6" stroke="#1c1c1c" stroke-width="1.2"/>
<ellipse cx="1017.9" cy="800.5" rx="5.76" ry="4.31" transform="rotate(-130.40 1017.9 800.5)" fill="#c2c2c2"/>
<ellipse cx="1048.5" cy="746.8" rx="7.38" ry="5.52" transform="rotate(-130.40 1048.5 746.8)" fill="#f6f6f6" stroke="#1c1c1c" stroke-width="1.2"/>
<ellipse cx="1049.8" cy="745.8" rx="5.76" ry="4.31" transform="rotate(-130.40 1049.8 745.8)" fill="#6e6e6e"/>
<ellipse cx="1048.5" cy="778.8" rx="7.38" ry="5.52" transform="rotate(-130.40 1048.5 778.8)" fill="#f6f6f6" stroke="#1c1c1c" stroke-width="1.2"/>
<ellipse cx="1049.8" cy="777.8" rx="5.76" ry="4.31" transform="rotate(-130.40 1049.8 777.8)" fill="#6e6e6e"/>
<ellipse cx="1048.5" cy="810.8" rx="7.38" ry="5.52" transform="rotate(-130.40 1048.5 810.8)" fill="#f6f6f6" stroke="#1c1c1c" stroke-width="1.2"/>
<ellipse cx="1049.8" cy="809.8" rx="5.76" ry="4.31" transform="rotate(-130.40 1049.8 809.8)" fill="#c2c2c2"/>
<ellipse cx="1080.3" cy="756.0" rx="7.38" ry="5.52" transform="rotate(-130.40 1080.3 756.0)" fill="#f6f6f6" stroke="#1c1c1c" stroke-width="1.2"/>
<ellipse cx="1081.6" cy="755.0" rx="5.76" ry="4.31" transform="rotate(-130.40 1081.6 755.0)" fill="#6e6e6e"/>
<ellipse cx="1080.3" cy="788.0" rx="7.38" ry="5.52" transform="rotate(-130.40 1080.3 788.0)" fill="#f6f6f6" stroke="#1c1c1c" stroke-width="1.2"/>
<ellipse cx="1081.6" cy="787.0" rx="5.76" ry="4.31" transform="rotate(-130.40 1081.6 787.0)" fill="#6e6e6e"/>
<ellipse cx="1080.3" cy="820.0" rx="7.38" ry="5.52" transform="rotate(-130.40 1080.3 820.0)" fill="#f6f6f6" stroke="#1c1c1c" stroke-width="1.2"/>
<ellipse cx="1081.6" cy="819.0" rx="5.76" ry="4.31" transform="rotate(-130.40 1081.6 819.0)" fill="#c2c2c2"/>
<ellipse cx="1112.2" cy="765.3" rx="7.38" ry="5.52" transform="rotate(-130.40 1112.2 765.3)" fill="#f6f6f6" stroke="#1c1c1c" stroke-width="1.2"/>
<ellipse cx="1113.5" cy="764.3" rx="5.76" ry="4.31" transform="rotate(-130.40 1113.5 764.3)" fill="#6e6e6e"/>
<ellipse cx="1112.2" cy="797.3" rx="7.38" ry="5.52" transform="rotate(-130.40 1112.2 797.3)" fill="#f6f6f6" stroke="#1c1c1c" stroke-width="1.2"/>
<ellipse cx="1113.5" cy="796.3" rx="5.76" ry="4.31" transform="rotate(-130.40 1113.5 796.3)" fill="#6e6e6e"/>
<ellipse cx="1112.2" cy="829.3" rx="7.38" ry="5.52" transform="rotate(-130.40 1112.2 829.3)" fill="#f6f6f6" stroke="#1c1c1c" stroke-width="1.2"/>
<ellipse cx="1113.5" cy="828.3" rx="5.76" ry="4.31" transform="rotate(-130.40 1113.5 828.3)" fill="#c2c2c2"/>
<ellipse cx="1144.0" cy="774.6" rx="7.38" ry="5.52" transform="rotate(-130.40 1144.0 774.6)" fill="#f6f6f6" stroke="#1c1c1c" stroke-width="1.2"/>
<ellipse cx="1145.3" cy="773.6" rx="5.76" ry="4.31" transform="rotate(-130.40 1145.3 773.6)" fill="#6e6e6e"/>
<ellipse cx="1144.0" cy="806.6" rx="7.38" ry="5.52" transform="rotate(-130.40 1144.0 806.6)" fill="#f6f6f6" stroke="#1c1c1c" stroke-width="1.2"/>
<ellipse cx="1145.3" cy="805.6" rx="5.76" ry="4.31" transform="rotate(-130.40 1145.3 805.6)" fill="#6e6e6e"/>
<ellipse cx="1144.0" cy="838.6" rx="7.38" ry="5.52" transform="rotate(-130.40 1144.0 838.6)" fill="#f6f6f6" stroke="#1c1c1c" stroke-width="1.2"/>
<ellipse cx="1145.3" cy="837.6" rx="5.76" ry="4.31" transform="rotate(-130.40 1145.3 837.6)" fill="#c2c2c2"/>
<ellipse cx="1175.8" cy="783.9" rx="7.38" ry="5.52" transform="rotate(-130.40 1175.8 783.9)" fill="#f6f6f6" stroke="#1c1c1c" stroke-width="1.2"/>
<ellipse cx="1177.1" cy="782.9" rx="5.76" ry="4.31" transform="rotate(-130.40 1177.1 782.9)" fill="#6e6e6e"/>
<ellipse cx="1175.8" cy="815.9" rx="7.38" ry="5.52" transform="rotate(-130.40 1175.8 815.9)" fill="#f6f6f6" stroke="#1c1c1c" stroke-width="1.2"/>
<ellipse cx="1177.1" cy="814.9" rx="5.76" ry="4.31" transform="rotate(-130.40 1177.1 814.9)" fill="#6e6e6e"/>
<ellipse cx="1175.8" cy="847.9" rx="7.38" ry="5.52" transform="rotate(-130.40 1175.8 847.9)" fill="#f6f6f6" stroke="#1c1c1c" stroke-width="1.2"/>
<ellipse cx="1177.1" cy="846.9" rx="5.76" ry="4.31" transform="rotate(-130.40 1177.1 846.9)" fill="#c2c2c2"/>
<ellipse cx="1207.7" cy="793.2" rx="7.38" ry="5.52" transform="rotate(-130.40 1207.7 793.2)" fill="#f6f6f6" stroke="#1c1c1c" stroke-width="1.2"/>
<ellipse cx="1209.0" cy="792.2" rx="5.76" ry="4.31" transform="rotate(-130.40 1209.0 792.2)" fill="#6e6e6e"/>
<ellipse cx="1207.7" cy="825.2" rx="7.38" ry="5.52" transform="rotate(-130.40 1207.7 825.2)" fill="#f6f6f6" stroke="#1c1c1c" stroke-width="1.2"/>
<ellipse cx="1209.0" cy="824.2" rx="5.76" ry="4.31" transform="rotate(-130.40 1209.0 824.2)" fill="#6e6e6e"/>
<ellipse cx="1207.7" cy="857.2" rx="7.38" ry="5.52" transform="rotate(-130.40 1207.7 857.2)" fill="#f6f6f6" stroke="#1c1c1c" stroke-width="1.2"/>
<ellipse cx="1209.0" cy="856.2" rx="5.76" ry="4.31" transform="rotate(-130.40 1209.0 856.2)" fill="#c2c2c2"/>
<ellipse cx="1239.6" cy="802.4" rx="7.38" ry="5.52" transform="rotate(-130.40 1239.6 802.4)" fill="#f6f6f6" stroke="#1c1c1c" stroke-width="1.2"/>
<ellipse cx="1240.9" cy="801.4" rx="5.76" ry="4.31" transform="rotate(-130.40 1240.9 801.4)" fill="#6e6e6e"/>
<ellipse cx="1239.6" cy="834.4" rx="7.38" ry="5.52" transform="rotate(-130.40 1239.6 834.4)" fill="#f6f6f6" stroke="#1c1c1c" stroke-width="1.2"/>
<ellipse cx="1240.9" cy="833.4" rx="5.76" ry="4.31" transform="rotate(-130.40 1240.9 833.4)" fill="#6e6e6e"/>
<ellipse cx="1239.6" cy="866.4" rx="7.38" ry="5.52" transform="rotate(-130.40 1239.6 866.4)" fill="#f6f6f6" stroke="#1c1c1c" stroke-width="1.2"/>
<ellipse cx="1240.9" cy="865.4" rx="5.76" ry="4.31" transform="rotate(-130.40 1240.9 865.4)" fill="#c2c2c2"/>
<ellipse cx="1271.4" cy="811.7" rx="7.38" ry="5.52" transform="rotate(-130.40 1271.4 811.7)" fill="#f6f6f6" stroke="#1c1c1c" stroke-width="1.2"/>
<ellipse cx="1272.7" cy="810.7" rx="5.76" ry="4.31" transform="rotate(-130.40 1272.7 810.7)" fill="#6e6e6e"/>
<ellipse cx="1271.4" cy="843.7" rx="7.38" ry="5.52" transform="rotate(-130.40 1271.4 843.7)" fill="#f6f6f6" stroke="#1c1c1c" stroke-width="1.2"/>
<ellipse cx="1272.7" cy="842.7" rx="5.76" ry="4.31" transform="rotate(-130.40 1272.7 842.7)" fill="#6e6e6e"/>
<ellipse cx="1271.4" cy="875.7" rx="7.38" ry="5.52" transform="rotate(-130.40 1271.4 875.7)" fill="#f6f6f6" stroke="#1c1c1c" stroke-width="1.2"/>
<ellipse cx="1272.7" cy="874.7" rx="5.76" ry="4.31" transform="rotate(-130.40 1272.7 874.7)" fill="#c2c2c2"/>
<ellipse cx="1303.2" cy="821.0" rx="7.38" ry="5.52" transform="rotate(-130.40 1303.2 821.0)" fill="#f6f6f6" stroke="#1c1c1c" stroke-width="1.2"/>
<ellipse cx="1304.5" cy="820.0" rx="5.76" ry="4.31" transform="rotate(-130.40 1304.5 820.0)" fill="#6e6e6e"/>
<ellipse cx="1303.2" cy="853.0" rx="7.38" ry="5.52" transform="rotate(-130.40 1303.2 853.0)" fill="#f6f6f6" stroke="#1c1c1c" stroke-width="1.2"/>
<ellipse cx="1304.5" cy="852.0" rx="5.76" ry="4.31" transform="rotate(-130.40 1304.5 852.0)" fill="#6e6e6e"/>
<ellipse cx="1303.2" cy="885.0" rx="7.38" ry="5.52" transform="rotate(-130.40 1303.2 885.0)" fill="#f6f6f6" stroke="#1c1c1c" stroke-width="1.2"/>
<ellipse cx="1304.5" cy="884.0" rx="5.76" ry="4.31" transform="rotate(-130.40 1304.5 884.0)" fill="#c2c2c2"/>
<ellipse cx="1335.1" cy="830.3" rx="7.38" ry="5.52" transform="rotate(-130.40 1335.1 830.3)" fill="#f6f6f6" stroke="#1c1c1c" stroke-width="1.2"/>
<ellipse cx="1336.4" cy="829.3" rx="5.76" ry="4.31" transform="rotate(-130.40 1336.4 829.3)" fill="#6e6e6e"/>
<ellipse cx="1335.1" cy="862.3" rx="7.38" ry="5.52" transform="rotate(-130.40 1335.1 862.3)" fill="#f6f6f6" stroke="#1c1c1c" stroke-width="1.2"/>
<ellipse cx="1336.4" cy="861.3" rx="5.76" ry="4.31" transform="rotate(-130.40 1336.4 861.3)" fill="#6e6e6e"/>
<ellipse cx="1335.1" cy="894.3" rx="7.38" ry="5.52" transform="rotate(-130.40 1335.1 894.3)" fill="#f6f6f6" stroke="#1c1c1c" stroke-width="1.2"/>
<ellipse cx="1336.4" cy="893.3" rx="5.76" ry="4.31" transform="rotate(-130.40 1336.4 893.3)" fill="#c2c2c2"/>
<ellipse cx="1367.0" cy="839.6" rx="7.38" ry="5.52" transform="rotate(-130.40 1367.0 839.6)" fill="#f6f6f6" stroke="#1c1c1c" stroke-width="1.2"/>
<ellipse cx="1368.2" cy="838.6" rx="5.76" ry="4.31" transform="rotate(-130.40 1368.2 838.6)" fill="#6e6e6e"/>
<ellipse cx="1367.0" cy="871.6" rx="7.38" ry="5.52" transform="rotate(-130.40 1367.0 871.6)" fill="#f6f6f6" stroke="#1c1c1c" stroke-width="1.2"/>
<ellipse cx="1368.2" cy="870.6" rx="5.76" ry="4.31" transform="rotate(-130.40 1368.2 870.6)" fill="#6e6e6e"/>
<ellipse cx="1367.0" cy="903.6" rx="7.38" ry="5.52" transform="rotate(-130.40 1367.0 903.6)" fill="#f6f6f6" stroke="#1c1c1c" stroke-width="1.2"/>
<ellipse cx="1368.2" cy="902.6" rx="5.76" ry="4.31" transform="rotate(-130.40 1368.2 902.6)" fill="#c2c2c2"/>
<ellipse cx="1398.8" cy="848.8" rx="7.38" ry="5.52" transform="rotate(-130.40 1398.8 848.8)" fill="#f6f6f6" stroke="#1c1c1c" stroke-width="1.2"/>
<ellipse cx="1400.1" cy="847.8" rx="5.76" ry="4.31" transform="rotate(-130.40 1400.1 847.8)" fill="#6e6e6e"/>
<ellipse cx="1398.8" cy="880.8" rx="7.38" ry="5.52" transform="rotate(-130.40 1398.8 880.8)" fill="#f6f6f6" stroke="#1c1c1c" stroke-width="1.2"/>
<ellipse cx="1400.1" cy="879.8" rx="5.76" ry="4.31" transform="rotate(-130.40 1400.1 879.8)" fill="#6e6e6e"/>
<ellipse cx="1398.8" cy="912.8" rx="7.38" ry="5.52" transform="rotate(-130.40 1398.8 912.8)" fill="#f6f6f6" stroke="#1c1c1c" stroke-width="1.2"/>
<ellipse cx="1400.1" cy="911.8" rx="5.76" ry="4.31" transform="rotate(-130.40 1400.1 911.8)" fill="#c2c2c2"/>
<ellipse cx="1430.7" cy="858.1" rx="7.38" ry="5.52" transform="rotate(-130.40 1430.7 858.1)" fill="#f6f6f6" stroke="#1c1c1c" stroke-width="1.2"/>
<ellipse cx="1432.0" cy="857.1" rx="5.76" ry="4.31" transform="rotate(-130.40 1432.0 857.1)" fill="#6e6e6e"/>
<ellipse cx="1430.7" cy="890.1" rx="7.38" ry="5.52" transform="rotate(-130.40 1430.7 890.1)" fill="#f6f6f6" stroke="#1c1c1c" stroke-width="1.2"/>
<ellipse cx="1432.0" cy="889.1" rx="5.76" ry="4.31" transform="rotate(-130.40 1432.0 889.1)" fill="#6e6e6e"/>
<ellipse cx="1430.7" cy="922.1" rx="7.38" ry="5.52" transform="rotate(-130.40 1430.7 922.1)" fill="#f6f6f6" stroke="#1c1c1c" stroke-width="1.2"/>
<ellipse cx="1432.0" cy="921.1" rx="5.76" ry="4.31" transform="rotate(-130.40 1432.0 921.1)" fill="#c2c2c2"/>
<ellipse cx="1462.5" cy="867.4" rx="7.38" ry="5.52" transform="rotate(-130.40 1462.5 867.4)" fill="#f6f6f6" stroke="#1c1c1c" stroke-width="1.2"/>
<ellipse cx="1463.8" cy="866.4" rx="5.76" ry="4.31" transform="rotate(-130.40 1463.8 866.4)" fill="#6e6e6e"/>
<ellipse cx="1462.5" cy="899.4" rx="7.38" ry="5.52" transform="rotate(-130.40 1462.5 899.4)" fill="#f6f6f6" stroke="#1c1c1c" stroke-width="1.2"/>
<ellipse cx="1463.8" cy="898.4" rx="5.76" ry="4.31" transform="rotate(-130.40 1463.8 898.4)" fill="#6e6e6e"/>
<ellipse cx="1462.5" cy="931.4" rx="7.38" ry="5.52" transform="rotate(-130.40 1462.5 931.4)" fill="#f6f6f6" stroke="#1c1c1c" stroke-width="1.2"/>
<ellipse cx="1463.8" cy="930.4" rx="5.76" ry="4.31" transform="rotate(-130.40 1463.8 930.4)" fill="#c2c2c2"/>
<ellipse cx="1494.3" cy="876.7" rx="7.38" ry="5.52" transform="rotate(-130.40 1494.3 876.7)" fill="#f6f6f6" stroke="#1c1c1c" stroke-width="1.2"/>
<ellipse cx="1495.6" cy="875.7" rx="5.76" ry="4.31" transform="rotate(-130.40 1495.6 875.7)" fill="#6e6e6e"/>
<ellipse cx="1494.3" cy="908.7" rx="7.38" ry="5.52" transform="rotate(-130.40 1494.3 908.7)" fill="#f6f6f6" stroke="#1c1c1c" stroke-width="1.2"/>
<ellipse cx="1495.6" cy="907.7" rx="5.76" ry="4.31" transform="rotate(-130.40 1495.6 907.7)" fill="#6e6e6e"/>
<ellipse cx="1494.3" cy="940.7" rx="7.38" ry="5.52" transform="rotate(-130.40 1494.3 940.7)" fill="#f6f6f6" stroke="#1c1c1c" stroke-width="1.2"/>
<ellipse cx="1495.6" cy="939.7" rx="5.76" ry="4.31" transform="rotate(-130.40 1495.6 939.7)" fill="#c2c2c2"/>
<defs><linearGradient id="gring" x1="0" y1="0" x2="1" y2="0.6"><stop offset="0" stop-color="#b3ad9c"/><stop offset="0.45" stop-color="#8a8475"/><stop offset="1" stop-color="#777164"/></linearGradient></defs>
<ellipse cx="1352.6" cy="622.0" rx="85.61" ry="64.08" transform="rotate(-130.40 1352.6 622.0)" fill="#323232" stroke="#151515" stroke-width="1.2"/>
<polygon points="1307.9,772.8 1408.1,687.2 1297.1,556.8 1196.8,642.4" fill="#323232"/>
<path d="M1307.9,772.8 L1408.1,687.2 M1196.8,642.4 L1297.1,556.8" stroke="#151515" stroke-width="1.2"/>
<ellipse cx="1252.3" cy="707.6" rx="85.61" ry="64.08" transform="rotate(-130.40 1252.3 707.6)" fill="#323232"/>
<ellipse cx="1278.0" cy="461.0" rx="85.61" ry="64.08" transform="rotate(-130.40 1278.0 461.0)" fill="#323232" stroke="#151515" stroke-width="1.2"/>
<polygon points="1233.3,613.8 1333.5,526.2 1222.5,395.8 1122.2,483.4" fill="#323232"/>
<path d="M1233.3,613.8 L1333.5,526.2 M1122.2,483.4 L1222.5,395.8" stroke="#151515" stroke-width="1.2"/>
<ellipse cx="1177.8" cy="548.6" rx="85.61" ry="64.08" transform="rotate(-130.40 1177.8 548.6)" fill="#323232"/>
<path d="M1158.0,594.2 L1170.7,599.7 L1170.5,604.1 L1157.7,601.2 L1157.4,605.0 L1169.8,611.7 L1169.2,615.9 L1156.4,611.6 L1155.6,615.3 L1167.7,623.2 L1166.6,627.2 L1153.9,621.6 L1152.7,625.0 L1164.2,634.1 L1162.7,637.8 L1150.2,630.8 L1148.7,634.0 L1159.5,644.1 L1157.5,647.4 L1145.5,639.3 L1143.6,642.2 L1153.6,653.2 L1151.2,656.2 L1139.8,646.9 L1137.4,649.4 L1146.5,661.2 L1143.7,663.8 L1133.0,653.6 L1130.4,655.7 L1138.5,668.1 L1135.3,670.3 L1125.4,659.2 L1122.5,661.0 L1129.4,673.8 L1125.9,675.6 L1117.0,663.7 L1113.8,665.1 L1119.5,678.3 L1115.8,679.5 L1107.9,667.1 L1104.5,668.0 L1108.9,681.4 L1104.9,682.2 L1098.2,669.2 L1094.6,669.7 L1097.7,683.1 L1093.5,683.4 L1088.0,670.1 L1084.3,670.2 L1086.0,683.5 L1081.7,683.3 L1077.5,669.8 L1073.6,669.4 L1074.0,682.4 L1069.6,681.7 L1066.7,668.3 L1062.8,667.5 L1061.7,680.0 L1057.3,678.8 L1055.8,665.6 L1051.9,664.3 L1049.5,676.3 L1045.1,674.6 L1044.9,661.6 L1041.0,659.9 L1037.3,671.2 L1033.0,669.1 L1034.2,656.6 L1030.4,654.5 L1025.3,664.9 L1021.1,662.3 L1023.7,650.4 L1020.1,648.0 L1013.8,657.4 L1009.7,654.4 L1013.7,643.3 L1010.2,640.5 L1002.7,648.8 L998.9,645.5 L1004.1,635.2 L1000.8,632.1 L992.3,639.3 L988.7,635.6 L995.2,626.4 L992.2,623.0 L982.6,628.8 L979.3,624.9 L987.0,616.8 L984.3,613.2 L973.8,617.7 L970.9,613.5 L979.6,606.6 L977.2,602.7 L966.0,605.9 L963.5,601.5 L973.2,595.9 L971.1,591.9 L959.3,593.6 L957.1,589.1 L967.7,584.8 L966.0,580.7 L953.7,581.0 L952.0,576.4 L963.3,573.5 L961.9,569.4 L949.3,568.2 L948.1,563.5 L960.0,562.1 L959.0,558.0 L946.2,555.3 L945.4,550.7 L957.8,550.7 L957.3,546.7 L944.4,542.6 L944.1,538.1 L956.8,539.5 L956.7,535.6 L944.0,530.1 L944.1,525.7 L956.9,528.6 L957.3,524.8 L944.8,518.1 L945.4,513.9 L958.3,518.2 L959.0,514.5 L947.0,506.6 L948.1,502.6 L960.8,508.2 L961.9,504.8 L950.4,495.7 L952.0,492.0 L964.4,499.0 L966.0,495.8 L955.2,485.7 L957.1,482.4 L969.1,490.5 L971.1,487.6 L961.1,476.6 L963.5,473.6 L974.9,482.9 L977.2,480.4 L968.1,468.6 L970.9,466.0 L981.6,476.2 L984.3,474.1 L976.2,461.7 L979.3,459.5 L989.2,470.6 L992.2,468.8 L985.2,456.0 L988.7,454.2 L997.6,466.1 L1000.8,464.7 L995.1,451.5 L998.9,450.3 L1006.8,462.7 L1010.2,461.8 L1005.7,448.4 L1009.7,447.6 L1016.5,460.6 L1020.1,460.1 L1017.0,446.7 L1021.1,446.4 L1026.6,459.7 L1030.4,459.6 L1028.7,446.3 L1033.0,446.5 L1037.2,460.0 L1041.0,460.4 L1040.7,447.4 L1045.1,448.1 L1048.0,461.5 L1051.9,462.3 L1052.9,449.8 L1057.3,451.0 L1058.9,464.2 L1062.8,465.5 L1065.2,453.5 L1069.6,455.2 L1069.7,468.2 L1073.6,469.9 L1077.4,458.6 L1081.7,460.7 L1080.4,473.2 L1084.3,475.3 L1089.3,464.9 L1093.5,467.5 L1090.9,479.4 L1094.6,481.8 L1100.9,472.4 L1104.9,475.4 L1101.0,486.5 L1104.5,489.3 L1111.9,481.0 L1115.8,484.3 L1110.5,494.6 L1113.8,497.7 L1122.4,490.5 L1125.9,494.2 L1119.4,503.4 L1122.5,506.8 L1132.0,501.0 L1135.3,504.9 L1127.6,513.0 L1130.4,516.6 L1140.8,512.1 L1143.7,516.3 L1135.0,523.2 L1137.4,527.1 L1148.6,523.9 L1151.2,528.3 L1141.5,533.9 L1143.6,537.9 L1155.4,536.2 L1157.5,540.7 L1147.0,545.0 L1148.7,549.1 L1160.9,548.8 L1162.7,553.4 L1151.4,556.3 L1152.7,560.4 L1165.3,561.6 L1166.6,566.3 L1154.7,567.7 L1155.6,571.8 L1168.4,574.5 L1169.2,579.1 L1156.9,579.1 L1157.4,583.1 L1170.2,587.2 L1170.5,591.7 L1157.9,590.3Z" fill="#8a8476" stroke="#151515" stroke-width="0.9"/>
<path d="M1156.8,595.2 L1169.6,600.6 L1169.4,605.0 L1156.6,602.1 L1156.3,605.9 L1168.7,612.7 L1168.1,616.9 L1155.3,612.6 L1154.5,616.2 L1166.6,624.2 L1165.5,628.2 L1152.8,622.5 L1151.6,625.9 L1163.1,635.0 L1161.5,638.7 L1149.1,631.8 L1147.5,634.9 L1158.4,645.0 L1156.4,648.4 L1144.4,640.3 L1142.4,643.1 L1152.5,654.1 L1150.0,657.1 L1138.6,647.9 L1136.3,650.4 L1145.4,662.2 L1142.6,664.8 L1131.9,654.5 L1129.3,656.7 L1137.3,669.1 L1134.2,671.3 L1124.3,660.2 L1121.4,661.9 L1128.3,674.8 L1124.8,676.5 L1115.9,664.7 L1112.7,666.0 L1118.4,679.2 L1114.7,680.5 L1106.8,668.0 L1103.3,668.9 L1107.8,682.3 L1103.8,683.1 L1097.1,670.2 L1093.5,670.7 L1096.6,684.1 L1092.4,684.4 L1086.9,671.1 L1083.1,671.1 L1084.9,684.4 L1080.6,684.2 L1076.3,670.8 L1072.5,670.4 L1072.8,683.4 L1068.5,682.7 L1065.6,669.3 L1061.6,668.4 L1060.6,681.0 L1056.2,679.8 L1054.7,666.5 L1050.8,665.2 L1048.3,677.2 L1043.9,675.5 L1043.8,662.6 L1039.9,660.9 L1036.2,672.1 L1031.8,670.0 L1033.1,657.5 L1029.3,655.4 L1024.2,665.8 L1020.0,663.3 L1022.6,651.4 L1018.9,648.9 L1012.6,658.3 L1008.6,655.4 L1012.6,644.3 L1009.1,641.5 L1001.6,649.8 L997.7,646.4 L1003.0,636.2 L999.7,633.1 L991.2,640.2 L987.6,636.6 L994.1,627.3 L991.0,623.9 L981.5,629.8 L978.2,625.8 L985.9,617.7 L983.1,614.1 L972.7,618.6 L969.8,614.4 L978.5,607.5 L976.1,603.7 L964.9,606.8 L962.4,602.4 L972.0,596.8 L970.0,592.9 L958.2,594.5 L956.0,590.0 L966.6,585.8 L964.9,581.7 L952.6,581.9 L950.9,577.3 L962.1,574.5 L960.8,570.4 L948.2,569.1 L946.9,564.5 L958.8,563.1 L957.9,559.0 L945.1,556.3 L944.3,551.7 L956.6,551.7 L956.1,547.6 L943.3,543.6 L943.0,539.0 L955.6,540.5 L955.6,536.5 L942.8,531.1 L943.0,526.7 L955.8,529.6 L956.1,525.8 L943.7,519.0 L944.3,514.8 L957.1,519.1 L957.9,515.5 L945.8,507.5 L946.9,503.6 L959.6,509.2 L960.8,505.8 L949.3,496.7 L950.9,493.0 L963.3,499.9 L964.9,496.8 L954.0,486.7 L956.0,483.3 L968.0,491.4 L970.0,488.6 L959.9,477.6 L962.4,474.6 L973.8,483.8 L976.1,481.3 L967.0,469.6 L969.8,466.9 L980.5,477.2 L983.1,475.0 L975.1,462.6 L978.2,460.4 L988.1,471.6 L991.0,469.8 L984.1,456.9 L987.6,455.2 L996.5,467.0 L999.7,465.7 L994.0,452.5 L997.7,451.2 L1005.6,463.7 L1009.1,462.8 L1004.6,449.4 L1008.6,448.6 L1015.3,461.5 L1018.9,461.1 L1015.8,447.6 L1020.0,447.4 L1025.5,460.6 L1029.3,460.6 L1027.5,447.3 L1031.8,447.5 L1036.1,460.9 L1039.9,461.3 L1039.6,448.3 L1043.9,449.0 L1046.8,462.5 L1050.8,463.3 L1051.8,450.7 L1056.2,451.9 L1057.7,465.2 L1061.6,466.5 L1064.1,454.5 L1068.5,456.2 L1068.6,469.1 L1072.5,470.8 L1076.2,459.6 L1080.6,461.7 L1079.3,474.2 L1083.1,476.3 L1088.2,465.9 L1092.4,468.5 L1089.8,480.3 L1093.5,482.8 L1099.8,473.4 L1103.8,476.3 L1099.8,487.5 L1103.3,490.3 L1110.8,481.9 L1114.7,485.3 L1109.4,495.5 L1112.7,498.6 L1121.2,491.5 L1124.8,495.2 L1118.3,504.4 L1121.4,507.8 L1130.9,501.9 L1134.2,505.9 L1126.5,514.0 L1129.3,517.6 L1139.7,513.1 L1142.6,517.3 L1133.9,524.2 L1136.3,528.0 L1147.5,524.9 L1150.0,529.3 L1140.4,534.9 L1142.4,538.9 L1154.2,537.2 L1156.4,541.7 L1145.8,546.0 L1147.5,550.0 L1159.8,549.8 L1161.5,554.4 L1150.3,557.3 L1151.6,561.4 L1164.2,562.6 L1165.5,567.2 L1153.6,568.7 L1154.5,572.8 L1167.3,575.4 L1168.1,580.0 L1155.8,580.0 L1156.3,584.1 L1169.1,588.2 L1169.4,592.7 L1156.8,591.2Z" fill="#aaa496"/>
<path d="M1155.7,596.1 L1168.4,601.6 L1168.3,606.0 L1155.5,603.1 L1155.1,606.9 L1167.6,613.6 L1167.0,617.9 L1154.1,613.6 L1153.4,617.2 L1165.4,625.1 L1164.3,629.1 L1151.6,623.5 L1150.5,626.9 L1162.0,636.0 L1160.4,639.7 L1148.0,632.7 L1146.4,635.9 L1157.2,646.0 L1155.3,649.4 L1143.3,641.2 L1141.3,644.1 L1151.3,655.1 L1148.9,658.1 L1137.5,648.8 L1135.2,651.4 L1144.3,663.1 L1141.5,665.7 L1130.8,655.5 L1128.1,657.6 L1136.2,670.0 L1133.1,672.2 L1123.2,661.1 L1120.2,662.9 L1127.2,675.8 L1123.7,677.5 L1114.8,665.6 L1111.6,667.0 L1117.3,680.2 L1113.5,681.5 L1105.6,669.0 L1102.2,669.9 L1106.7,683.3 L1102.7,684.1 L1095.9,671.1 L1092.3,671.6 L1095.4,685.0 L1091.3,685.3 L1085.8,672.1 L1082.0,672.1 L1083.7,685.4 L1079.4,685.2 L1075.2,671.8 L1071.4,671.4 L1071.7,684.4 L1067.3,683.6 L1064.4,670.2 L1060.5,669.4 L1059.5,681.9 L1055.1,680.7 L1053.5,667.5 L1049.6,666.2 L1047.2,678.2 L1042.8,676.5 L1042.7,663.6 L1038.8,661.9 L1035.0,673.1 L1030.7,671.0 L1032.0,658.5 L1028.1,656.4 L1023.1,666.8 L1018.9,664.2 L1021.5,652.4 L1017.8,649.9 L1011.5,659.3 L1007.5,656.3 L1011.4,645.2 L1007.9,642.4 L1000.5,650.7 L996.6,647.4 L1001.9,637.2 L998.6,634.1 L990.0,641.2 L986.5,637.5 L993.0,628.3 L989.9,624.9 L980.4,630.8 L977.1,626.8 L984.8,618.7 L982.0,615.1 L971.6,619.6 L968.7,615.4 L977.4,608.5 L975.0,604.7 L963.8,607.8 L961.2,603.4 L970.9,597.8 L968.8,593.8 L957.0,595.5 L954.9,591.0 L965.4,586.7 L963.7,582.7 L951.5,582.9 L949.7,578.3 L961.0,575.4 L959.7,571.3 L947.1,570.1 L945.8,565.5 L957.7,564.0 L956.8,559.9 L944.0,557.3 L943.2,552.6 L955.5,552.7 L955.0,548.6 L942.2,544.5 L941.9,540.0 L954.5,541.5 L954.4,537.5 L941.7,532.1 L941.9,527.7 L954.7,530.6 L955.0,526.7 L942.6,520.0 L943.2,515.8 L956.0,520.1 L956.8,516.4 L944.7,508.5 L945.8,504.5 L958.5,510.2 L959.7,506.7 L948.2,497.7 L949.7,494.0 L962.2,500.9 L963.7,497.7 L952.9,487.7 L954.9,484.3 L966.9,492.4 L968.8,489.6 L958.8,478.6 L961.2,475.5 L972.6,484.8 L975.0,482.3 L965.9,470.5 L968.7,467.9 L979.4,478.1 L982.0,476.0 L973.9,463.6 L977.1,461.4 L987.0,472.5 L989.9,470.8 L983.0,457.9 L986.5,456.1 L995.4,468.0 L998.6,466.7 L992.9,453.4 L996.6,452.2 L1004.5,464.7 L1007.9,463.7 L1003.5,450.3 L1007.5,449.6 L1014.2,462.5 L1017.8,462.0 L1014.7,448.6 L1018.9,448.3 L1024.4,461.6 L1028.1,461.5 L1026.4,448.2 L1030.7,448.5 L1034.9,461.9 L1038.8,462.3 L1038.4,449.3 L1042.8,450.0 L1045.7,463.4 L1049.6,464.3 L1050.7,451.7 L1055.1,452.9 L1056.6,466.2 L1060.5,467.4 L1062.9,455.5 L1067.3,457.1 L1067.5,470.1 L1071.4,471.8 L1075.1,460.5 L1079.4,462.7 L1078.2,475.1 L1082.0,477.2 L1087.1,466.8 L1091.3,469.4 L1088.7,481.3 L1092.3,483.7 L1098.6,474.3 L1102.7,477.3 L1098.7,488.4 L1102.2,491.2 L1109.7,482.9 L1113.5,486.2 L1108.3,496.5 L1111.6,499.6 L1120.1,492.5 L1123.7,496.1 L1117.2,505.4 L1120.2,508.7 L1129.8,502.9 L1133.1,506.8 L1125.4,515.0 L1128.1,518.6 L1138.6,514.1 L1141.5,518.2 L1132.8,525.2 L1135.2,529.0 L1146.4,525.9 L1148.9,530.2 L1139.2,535.9 L1141.3,539.8 L1153.1,538.1 L1155.3,542.6 L1144.7,546.9 L1146.4,551.0 L1158.7,550.8 L1160.4,555.3 L1149.1,558.2 L1150.5,562.3 L1163.1,563.6 L1164.3,568.2 L1152.4,569.6 L1153.4,573.7 L1166.2,576.4 L1167.0,581.0 L1154.6,581.0 L1155.1,585.0 L1168.0,589.1 L1168.3,593.6 L1155.6,592.2Z" fill="#aaa496"/>
<path d="M1154.6,597.1 L1167.3,602.5 L1167.2,606.9 L1154.4,604.0 L1154.0,607.9 L1166.5,614.6 L1165.8,618.8 L1153.0,614.5 L1152.2,618.2 L1164.3,626.1 L1163.2,630.1 L1150.5,624.4 L1149.3,627.9 L1160.8,636.9 L1159.3,640.6 L1146.9,633.7 L1145.3,636.9 L1156.1,646.9 L1154.1,650.3 L1142.1,642.2 L1140.2,645.0 L1150.2,656.0 L1147.8,659.1 L1136.4,649.8 L1134.1,652.3 L1143.2,664.1 L1140.4,666.7 L1129.7,656.5 L1127.0,658.6 L1135.1,671.0 L1131.9,673.2 L1122.0,662.1 L1119.1,663.8 L1126.0,676.7 L1122.6,678.5 L1113.6,666.6 L1110.4,667.9 L1116.2,681.2 L1112.4,682.4 L1104.5,669.9 L1101.1,670.9 L1105.5,684.3 L1101.6,685.0 L1094.8,672.1 L1091.2,672.6 L1094.3,686.0 L1090.2,686.3 L1084.6,673.0 L1080.9,673.1 L1082.6,686.4 L1078.3,686.1 L1074.1,672.7 L1070.2,672.3 L1070.6,685.3 L1066.2,684.6 L1063.3,671.2 L1059.4,670.3 L1058.4,682.9 L1054.0,681.7 L1052.4,668.4 L1048.5,667.2 L1046.1,679.1 L1041.7,677.5 L1041.6,664.5 L1037.7,662.8 L1033.9,674.1 L1029.6,671.9 L1030.8,659.5 L1027.0,657.4 L1022.0,667.8 L1017.7,665.2 L1020.4,653.3 L1016.7,650.9 L1010.4,660.3 L1006.3,657.3 L1010.3,646.2 L1006.8,643.4 L999.3,651.7 L995.5,648.4 L1000.8,638.1 L997.5,635.0 L988.9,642.1 L985.3,638.5 L991.8,629.2 L988.8,625.9 L979.2,631.7 L976.0,627.8 L983.6,619.6 L980.9,616.0 L970.5,620.5 L967.5,616.4 L976.3,609.4 L973.8,605.6 L962.7,608.7 L960.1,604.4 L969.8,598.7 L967.7,594.8 L955.9,596.5 L953.8,592.0 L964.3,587.7 L962.6,583.6 L950.3,583.8 L948.6,579.3 L959.9,576.4 L958.6,572.3 L946.0,571.0 L944.7,566.4 L956.6,565.0 L955.7,560.9 L942.9,558.2 L942.1,553.6 L954.4,553.6 L953.9,549.6 L941.1,545.5 L940.7,541.0 L953.4,542.4 L953.3,538.5 L940.6,533.0 L940.7,528.6 L953.5,531.5 L953.9,527.7 L941.4,521.0 L942.1,516.7 L954.9,521.0 L955.7,517.4 L943.6,509.5 L944.7,505.5 L957.4,511.1 L958.6,507.7 L947.1,498.6 L948.6,494.9 L961.0,501.9 L962.6,498.7 L951.8,488.6 L953.8,485.2 L965.8,493.4 L967.7,490.5 L957.7,479.5 L960.1,476.5 L971.5,485.8 L973.8,483.2 L964.7,471.5 L967.5,468.9 L978.2,479.1 L980.9,477.0 L972.8,464.6 L976.0,462.4 L985.9,473.5 L988.8,471.7 L981.9,458.8 L985.3,457.1 L994.3,469.0 L997.5,467.6 L991.7,454.4 L995.5,453.1 L1003.4,465.6 L1006.8,464.7 L1002.4,451.3 L1006.3,450.5 L1013.1,463.5 L1016.7,463.0 L1013.6,449.6 L1017.7,449.3 L1023.3,462.5 L1027.0,462.5 L1025.3,449.2 L1029.6,449.4 L1033.8,462.8 L1037.7,463.2 L1037.3,450.2 L1041.7,451.0 L1044.6,464.4 L1048.5,465.2 L1049.5,452.7 L1054.0,453.9 L1055.5,467.1 L1059.4,468.4 L1061.8,456.4 L1066.2,458.1 L1066.3,471.0 L1070.2,472.7 L1074.0,461.5 L1078.3,463.6 L1077.1,476.1 L1080.9,478.2 L1085.9,467.8 L1090.2,470.4 L1087.5,482.2 L1091.2,484.7 L1097.5,475.3 L1101.6,478.3 L1097.6,489.4 L1101.1,492.2 L1108.6,483.9 L1112.4,487.2 L1107.1,497.4 L1110.4,500.5 L1119.0,493.4 L1122.6,497.1 L1116.1,506.3 L1119.1,509.7 L1128.7,503.8 L1131.9,507.8 L1124.3,515.9 L1127.0,519.5 L1137.4,515.0 L1140.4,519.2 L1131.6,526.1 L1134.1,529.9 L1145.2,526.8 L1147.8,531.2 L1138.1,536.8 L1140.2,540.8 L1152.0,539.1 L1154.1,543.6 L1143.6,547.9 L1145.3,551.9 L1157.6,551.7 L1159.3,556.3 L1148.0,559.2 L1149.3,563.3 L1161.9,564.5 L1163.2,569.1 L1151.3,570.6 L1152.2,574.7 L1165.0,577.3 L1165.8,582.0 L1153.5,581.9 L1154.0,586.0 L1166.8,590.1 L1167.2,594.6 L1154.5,593.1Z" fill="#aaa496"/>
<path d="M1153.5,598.1 L1166.2,603.5 L1166.0,607.9 L1153.2,605.0 L1152.9,608.8 L1165.3,615.6 L1164.7,619.8 L1151.9,615.5 L1151.1,619.1 L1163.2,627.1 L1162.1,631.0 L1149.4,625.4 L1148.2,628.8 L1159.7,637.9 L1158.2,641.6 L1145.7,634.7 L1144.2,637.8 L1155.0,647.9 L1153.0,651.3 L1141.0,643.2 L1139.1,646.0 L1149.1,657.0 L1146.7,660.0 L1135.3,650.8 L1132.9,653.3 L1142.0,665.0 L1139.2,667.7 L1128.5,657.4 L1125.9,659.6 L1134.0,672.0 L1130.8,674.2 L1120.9,663.0 L1118.0,664.8 L1124.9,677.7 L1121.4,679.4 L1112.5,667.6 L1109.3,668.9 L1115.0,682.1 L1111.3,683.4 L1103.4,670.9 L1100.0,671.8 L1104.4,685.2 L1100.4,686.0 L1093.7,673.1 L1090.1,673.5 L1093.2,687.0 L1089.0,687.2 L1083.5,674.0 L1079.8,674.0 L1081.5,687.3 L1077.2,687.1 L1073.0,673.7 L1069.1,673.3 L1069.5,686.3 L1065.1,685.6 L1062.2,672.1 L1058.3,671.3 L1057.2,683.9 L1052.8,682.7 L1051.3,669.4 L1047.4,668.1 L1045.0,680.1 L1040.6,678.4 L1040.4,665.5 L1036.5,663.8 L1032.8,675.0 L1028.5,672.9 L1029.7,660.4 L1025.9,658.3 L1020.8,668.7 L1016.6,666.1 L1019.2,654.3 L1015.6,651.8 L1009.3,661.2 L1005.2,658.3 L1009.2,647.1 L1005.7,644.3 L998.2,652.7 L994.4,649.3 L999.6,639.1 L996.3,636.0 L987.8,643.1 L984.2,639.4 L990.7,630.2 L987.7,626.8 L978.1,632.7 L974.8,628.7 L982.5,620.6 L979.8,617.0 L969.3,621.5 L966.4,617.3 L975.1,610.4 L972.7,606.6 L961.5,609.7 L959.0,605.3 L968.7,599.7 L966.6,595.7 L954.8,597.4 L952.6,592.9 L963.2,588.6 L961.5,584.6 L949.2,584.8 L947.5,580.2 L958.8,577.3 L957.4,573.2 L944.8,572.0 L943.6,567.4 L955.5,565.9 L954.5,561.8 L941.7,559.2 L940.9,554.6 L953.3,554.6 L952.8,550.5 L939.9,546.4 L939.6,541.9 L952.3,543.4 L952.2,539.4 L939.5,534.0 L939.6,529.6 L952.4,532.5 L952.8,528.7 L940.3,521.9 L940.9,517.7 L953.8,522.0 L954.5,518.4 L942.5,510.4 L943.6,506.4 L956.3,512.1 L957.4,508.7 L945.9,499.6 L947.5,495.9 L959.9,502.8 L961.5,499.7 L950.7,489.6 L952.6,486.2 L964.6,494.3 L966.6,491.5 L956.6,480.5 L959.0,477.5 L970.4,486.7 L972.7,484.2 L963.6,472.4 L966.4,469.8 L977.1,480.1 L979.8,477.9 L971.7,465.5 L974.8,463.3 L984.7,474.4 L987.7,472.7 L980.7,459.8 L984.2,458.1 L993.1,469.9 L996.3,468.6 L990.6,455.4 L994.4,454.1 L1002.3,466.6 L1005.7,465.7 L1001.2,452.3 L1005.2,451.5 L1012.0,464.4 L1015.6,463.9 L1012.5,450.5 L1016.6,450.2 L1022.1,463.5 L1025.9,463.5 L1024.2,450.2 L1028.5,450.4 L1032.7,463.8 L1036.5,464.2 L1036.2,451.2 L1040.6,451.9 L1043.5,465.3 L1047.4,466.2 L1048.4,453.6 L1052.8,454.8 L1054.4,468.1 L1058.3,469.4 L1060.7,457.4 L1065.1,459.1 L1065.2,472.0 L1069.1,473.7 L1072.9,462.5 L1077.2,464.6 L1075.9,477.1 L1079.8,479.2 L1084.8,468.8 L1089.0,471.3 L1086.4,483.2 L1090.1,485.7 L1096.4,476.3 L1100.4,479.2 L1096.5,490.3 L1100.0,493.1 L1107.4,484.8 L1111.3,488.2 L1106.0,498.4 L1109.3,501.5 L1117.9,494.4 L1121.4,498.0 L1114.9,507.3 L1118.0,510.7 L1127.5,504.8 L1130.8,508.8 L1123.1,516.9 L1125.9,520.5 L1136.3,516.0 L1139.2,520.2 L1130.5,527.1 L1132.9,530.9 L1144.1,527.8 L1146.7,532.2 L1137.0,537.8 L1139.1,541.7 L1150.9,540.1 L1153.0,544.6 L1142.5,548.8 L1144.2,552.9 L1156.4,552.7 L1158.2,557.3 L1146.9,560.1 L1148.2,564.2 L1160.8,565.5 L1162.1,570.1 L1150.2,571.5 L1151.1,575.6 L1163.9,578.3 L1164.7,582.9 L1152.4,582.9 L1152.9,587.0 L1165.7,591.0 L1166.0,595.6 L1153.4,594.1Z" fill="#aaa496"/>
<path d="M1152.3,599.0 L1165.1,604.5 L1164.9,608.9 L1152.1,606.0 L1151.8,609.8 L1164.2,616.5 L1163.6,620.7 L1150.8,616.4 L1150.0,620.1 L1162.1,628.0 L1161.0,632.0 L1148.3,626.4 L1147.1,629.8 L1158.6,638.9 L1157.0,642.6 L1144.6,635.6 L1143.0,638.8 L1153.9,648.9 L1151.9,652.2 L1139.9,644.1 L1137.9,647.0 L1148.0,658.0 L1145.5,661.0 L1134.1,651.7 L1131.8,654.2 L1140.9,666.0 L1138.1,668.6 L1127.4,658.4 L1124.8,660.5 L1132.8,672.9 L1129.7,675.1 L1119.8,664.0 L1116.9,665.8 L1123.8,678.6 L1120.3,680.4 L1111.4,668.5 L1108.2,669.9 L1113.9,683.1 L1110.2,684.3 L1102.3,671.9 L1098.8,672.8 L1103.3,686.2 L1099.3,687.0 L1092.6,674.0 L1089.0,674.5 L1092.1,687.9 L1087.9,688.2 L1082.4,674.9 L1078.6,675.0 L1080.4,688.3 L1076.1,688.1 L1071.8,674.6 L1068.0,674.2 L1068.3,687.2 L1064.0,686.5 L1061.1,673.1 L1057.1,672.3 L1056.1,684.8 L1051.7,683.6 L1050.2,670.4 L1046.3,669.1 L1043.8,681.1 L1039.4,679.4 L1039.3,666.4 L1035.4,664.7 L1031.7,676.0 L1027.3,673.9 L1028.6,661.4 L1024.8,659.3 L1019.7,669.7 L1015.5,667.1 L1018.1,655.2 L1014.4,652.8 L1008.1,662.2 L1004.1,659.2 L1008.1,648.1 L1004.6,645.3 L997.1,653.6 L993.2,650.3 L998.5,640.0 L995.2,636.9 L986.7,644.1 L983.1,640.4 L989.6,631.2 L986.5,627.8 L977.0,633.6 L973.7,629.7 L981.4,621.6 L978.6,618.0 L968.2,622.5 L965.3,618.3 L974.0,611.4 L971.6,607.5 L960.4,610.7 L957.9,606.3 L967.5,600.7 L965.5,596.7 L953.7,598.4 L951.5,593.9 L962.1,589.6 L960.4,585.5 L948.1,585.8 L946.4,581.2 L957.6,578.3 L956.3,574.2 L943.7,573.0 L942.4,568.3 L954.3,566.9 L953.4,562.8 L940.6,560.1 L939.8,555.5 L952.1,555.5 L951.6,551.5 L938.8,547.4 L938.5,542.9 L951.1,544.3 L951.1,540.4 L938.3,534.9 L938.5,530.5 L951.3,533.4 L951.6,529.6 L939.2,522.9 L939.8,518.7 L952.6,523.0 L953.4,519.3 L941.3,511.4 L942.4,507.4 L955.1,513.0 L956.3,509.6 L944.8,500.5 L946.4,496.8 L958.8,503.8 L960.4,500.6 L949.5,490.5 L951.5,487.2 L963.5,495.3 L965.5,492.4 L955.4,481.4 L957.9,478.4 L969.3,487.7 L971.6,485.2 L962.5,473.4 L965.3,470.8 L976.0,481.0 L978.6,478.9 L970.6,466.5 L973.7,464.3 L983.6,475.4 L986.5,473.6 L979.6,460.8 L983.1,459.0 L992.0,470.9 L995.2,469.5 L989.5,456.3 L993.2,455.1 L1001.1,467.5 L1004.6,466.6 L1000.1,453.2 L1004.1,452.4 L1010.8,465.4 L1014.4,464.9 L1011.3,451.5 L1015.5,451.2 L1021.0,464.5 L1024.8,464.4 L1023.0,451.1 L1027.3,451.3 L1031.6,464.8 L1035.4,465.2 L1035.1,452.2 L1039.4,452.9 L1042.3,466.3 L1046.3,467.1 L1047.3,454.6 L1051.7,455.8 L1053.2,469.0 L1057.1,470.3 L1059.6,458.3 L1064.0,460.0 L1064.1,473.0 L1068.0,474.7 L1071.7,463.4 L1076.1,465.5 L1074.8,478.0 L1078.6,480.1 L1083.7,469.7 L1087.9,472.3 L1085.3,484.2 L1089.0,486.6 L1095.3,477.2 L1099.3,480.2 L1095.3,491.3 L1098.8,494.1 L1106.3,485.8 L1110.2,489.1 L1104.9,499.4 L1108.2,502.5 L1116.7,495.3 L1120.3,499.0 L1113.8,508.2 L1116.9,511.6 L1126.4,505.8 L1129.7,509.7 L1122.0,517.8 L1124.8,521.4 L1135.2,516.9 L1138.1,521.1 L1129.4,528.0 L1131.8,531.9 L1143.0,528.7 L1145.5,533.1 L1135.9,538.7 L1137.9,542.7 L1149.7,541.0 L1151.9,545.5 L1141.3,549.8 L1143.0,553.9 L1155.3,553.6 L1157.0,558.2 L1145.8,561.1 L1147.1,565.2 L1159.7,566.4 L1161.0,571.1 L1149.1,572.5 L1150.0,576.6 L1162.8,579.3 L1163.6,583.9 L1151.3,583.9 L1151.8,587.9 L1164.6,592.0 L1164.9,596.5 L1152.3,595.1Z" fill="#aaa496"/>
<path d="M1151.2,600.0 L1163.9,605.4 L1163.8,609.8 L1151.0,606.9 L1150.6,610.7 L1163.1,617.5 L1162.5,621.7 L1149.6,617.4 L1148.9,621.0 L1160.9,629.0 L1159.8,633.0 L1147.1,627.3 L1146.0,630.7 L1157.5,639.8 L1155.9,643.5 L1143.5,636.6 L1141.9,639.7 L1152.7,649.8 L1150.8,653.2 L1138.8,645.1 L1136.8,647.9 L1146.8,658.9 L1144.4,661.9 L1133.0,652.7 L1130.7,655.2 L1139.8,667.0 L1137.0,669.6 L1126.3,659.3 L1123.6,661.5 L1131.7,673.9 L1128.6,676.1 L1118.7,665.0 L1115.7,666.7 L1122.7,679.6 L1119.2,681.3 L1110.3,669.5 L1107.1,670.8 L1112.8,684.0 L1109.0,685.3 L1101.1,672.8 L1097.7,673.7 L1102.2,687.1 L1098.2,687.9 L1091.4,675.0 L1087.8,675.5 L1090.9,688.9 L1086.8,689.2 L1081.3,675.9 L1077.5,675.9 L1079.2,689.2 L1074.9,689.0 L1070.7,675.6 L1066.9,675.2 L1067.2,688.2 L1062.8,687.5 L1059.9,674.1 L1056.0,673.2 L1055.0,685.8 L1050.6,684.6 L1049.0,671.3 L1045.1,670.0 L1042.7,682.0 L1038.3,680.3 L1038.2,667.4 L1034.3,665.7 L1030.5,676.9 L1026.2,674.8 L1027.5,662.3 L1023.6,660.2 L1018.6,670.6 L1014.4,668.1 L1017.0,656.2 L1013.3,653.7 L1007.0,663.1 L1003.0,660.2 L1006.9,649.1 L1003.4,646.3 L996.0,654.6 L992.1,651.2 L997.4,641.0 L994.1,637.9 L985.5,645.0 L982.0,641.4 L988.5,632.1 L985.4,628.7 L975.9,634.6 L972.6,630.6 L980.3,622.5 L977.5,618.9 L967.1,623.4 L964.2,619.2 L972.9,612.3 L970.5,608.5 L959.3,611.6 L956.7,607.2 L966.4,601.6 L964.3,597.7 L952.5,599.3 L950.4,594.8 L960.9,590.6 L959.2,586.5 L947.0,586.7 L945.2,582.1 L956.5,579.3 L955.2,575.2 L942.6,573.9 L941.3,569.3 L953.2,567.9 L952.3,563.8 L939.5,561.1 L938.7,556.5 L951.0,556.5 L950.5,552.4 L937.7,548.4 L937.4,543.8 L950.0,545.3 L949.9,541.3 L937.2,535.9 L937.4,531.5 L950.2,534.4 L950.5,530.6 L938.1,523.8 L938.7,519.6 L951.5,523.9 L952.3,520.3 L940.2,512.3 L941.3,508.4 L954.0,514.0 L955.2,510.6 L943.7,501.5 L945.2,497.8 L957.7,504.7 L959.2,501.6 L948.4,491.5 L950.4,488.1 L962.4,496.2 L964.3,493.4 L954.3,482.4 L956.7,479.4 L968.1,488.6 L970.5,486.1 L961.4,474.4 L964.2,471.7 L974.9,482.0 L977.5,479.8 L969.4,467.4 L972.6,465.2 L982.5,476.4 L985.4,474.6 L978.5,461.7 L982.0,460.0 L990.9,471.8 L994.1,470.5 L988.4,457.3 L992.1,456.0 L1000.0,468.5 L1003.4,467.6 L999.0,454.2 L1003.0,453.4 L1009.7,466.3 L1013.3,465.9 L1010.2,452.4 L1014.4,452.2 L1019.9,465.4 L1023.6,465.4 L1021.9,452.1 L1026.2,452.3 L1030.4,465.7 L1034.3,466.1 L1033.9,453.1 L1038.3,453.8 L1041.2,467.3 L1045.1,468.1 L1046.2,455.5 L1050.6,456.7 L1052.1,470.0 L1056.0,471.3 L1058.4,459.3 L1062.8,461.0 L1063.0,473.9 L1066.9,475.6 L1070.6,464.4 L1074.9,466.5 L1073.7,479.0 L1077.5,481.1 L1082.6,470.7 L1086.8,473.3 L1084.2,485.1 L1087.8,487.6 L1094.1,478.2 L1098.2,481.1 L1094.2,492.3 L1097.7,495.1 L1105.2,486.7 L1109.0,490.1 L1103.8,500.3 L1107.1,503.4 L1115.6,496.3 L1119.2,500.0 L1112.7,509.2 L1115.7,512.6 L1125.3,506.7 L1128.6,510.7 L1120.9,518.8 L1123.6,522.4 L1134.1,517.9 L1137.0,522.1 L1128.3,529.0 L1130.7,532.8 L1141.9,529.7 L1144.4,534.1 L1134.7,539.7 L1136.8,543.7 L1148.6,542.0 L1150.8,546.5 L1140.2,550.8 L1141.9,554.8 L1154.2,554.6 L1155.9,559.2 L1144.6,562.1 L1146.0,566.2 L1158.6,567.4 L1159.8,572.0 L1147.9,573.5 L1148.9,577.6 L1161.7,580.2 L1162.5,584.8 L1150.1,584.8 L1150.6,588.9 L1163.5,593.0 L1163.8,597.5 L1151.1,596.0Z" fill="#aaa496"/>
<path d="M1150.1,600.9 L1162.8,606.4 L1162.7,610.8 L1149.9,607.9 L1149.5,611.7 L1162.0,618.4 L1161.3,622.7 L1148.5,618.4 L1147.7,622.0 L1159.8,629.9 L1158.7,633.9 L1146.0,628.3 L1144.8,631.7 L1156.3,640.8 L1154.8,644.5 L1142.4,637.5 L1140.8,640.7 L1151.6,650.8 L1149.6,654.2 L1137.6,646.0 L1135.7,648.9 L1145.7,659.9 L1143.3,662.9 L1131.9,653.6 L1129.6,656.2 L1138.7,667.9 L1135.9,670.5 L1125.2,660.3 L1122.5,662.4 L1130.6,674.8 L1127.4,677.0 L1117.5,665.9 L1114.6,667.7 L1121.5,680.6 L1118.1,682.3 L1109.1,670.4 L1105.9,671.8 L1111.7,685.0 L1107.9,686.3 L1100.0,673.8 L1096.6,674.7 L1101.0,688.1 L1097.1,688.9 L1090.3,675.9 L1086.7,676.4 L1089.8,689.8 L1085.7,690.1 L1080.1,676.9 L1076.4,676.9 L1078.1,690.2 L1073.8,690.0 L1069.6,676.6 L1065.7,676.2 L1066.1,689.2 L1061.7,688.4 L1058.8,675.0 L1054.9,674.2 L1053.9,686.7 L1049.5,685.5 L1047.9,672.3 L1044.0,671.0 L1041.6,683.0 L1037.2,681.3 L1037.1,668.4 L1033.2,666.7 L1029.4,677.9 L1025.1,675.8 L1026.3,663.3 L1022.5,661.2 L1017.5,671.6 L1013.2,669.0 L1015.9,657.2 L1012.2,654.7 L1005.9,664.1 L1001.8,661.1 L1005.8,650.0 L1002.3,647.2 L994.8,655.5 L991.0,652.2 L996.3,642.0 L993.0,638.9 L984.4,646.0 L980.8,642.3 L987.3,633.1 L984.3,629.7 L974.7,635.6 L971.5,631.6 L979.1,623.5 L976.4,619.9 L966.0,624.4 L963.0,620.2 L971.8,613.3 L969.3,609.5 L958.2,612.6 L955.6,608.2 L965.3,602.6 L963.2,598.6 L951.4,600.3 L949.3,595.8 L959.8,591.5 L958.1,587.5 L945.8,587.7 L944.1,583.1 L955.4,580.2 L954.1,576.1 L941.5,574.9 L940.2,570.3 L952.1,568.8 L951.2,564.7 L938.4,562.1 L937.6,557.4 L949.9,557.5 L949.4,553.4 L936.6,549.3 L936.2,544.8 L948.9,546.3 L948.8,542.3 L936.1,536.9 L936.2,532.5 L949.0,535.4 L949.4,531.5 L936.9,524.8 L937.6,520.6 L950.4,524.9 L951.2,521.2 L939.1,513.3 L940.2,509.3 L952.9,515.0 L954.1,511.5 L942.6,502.5 L944.1,498.8 L956.5,505.7 L958.1,502.5 L947.3,492.5 L949.3,489.1 L961.3,497.2 L963.2,494.4 L953.2,483.4 L955.6,480.3 L967.0,489.6 L969.3,487.1 L960.2,475.3 L963.0,472.7 L973.7,482.9 L976.4,480.8 L968.3,468.4 L971.5,466.2 L981.4,477.3 L984.3,475.6 L977.4,462.7 L980.8,460.9 L989.8,472.8 L993.0,471.5 L987.2,458.2 L991.0,457.0 L998.9,469.5 L1002.3,468.5 L997.9,455.1 L1001.8,454.4 L1008.6,467.3 L1012.2,466.8 L1009.1,453.4 L1013.2,453.1 L1018.8,466.4 L1022.5,466.3 L1020.8,453.0 L1025.1,453.3 L1029.3,466.7 L1033.2,467.1 L1032.8,454.1 L1037.2,454.8 L1040.1,468.2 L1044.0,469.1 L1045.0,456.5 L1049.5,457.7 L1051.0,471.0 L1054.9,472.2 L1057.3,460.3 L1061.7,461.9 L1061.8,474.9 L1065.7,476.6 L1069.5,465.3 L1073.8,467.5 L1072.6,479.9 L1076.4,482.0 L1081.4,471.6 L1085.7,474.2 L1083.0,486.1 L1086.7,488.5 L1093.0,479.1 L1097.1,482.1 L1093.1,493.2 L1096.6,496.0 L1104.1,487.7 L1107.9,491.0 L1102.6,501.3 L1105.9,504.4 L1114.5,497.3 L1118.1,500.9 L1111.6,510.2 L1114.6,513.5 L1124.2,507.7 L1127.4,511.6 L1119.8,519.8 L1122.5,523.4 L1132.9,518.9 L1135.9,523.0 L1127.1,530.0 L1129.6,533.8 L1140.7,530.7 L1143.3,535.0 L1133.6,540.7 L1135.7,544.6 L1147.5,542.9 L1149.6,547.4 L1139.1,551.7 L1140.8,555.8 L1153.1,555.6 L1154.8,560.1 L1143.5,563.0 L1144.8,567.1 L1157.4,568.4 L1158.7,573.0 L1146.8,574.4 L1147.7,578.5 L1160.5,581.2 L1161.3,585.8 L1149.0,585.8 L1149.5,589.8 L1162.3,593.9 L1162.7,598.4 L1150.0,597.0Z" fill="#aaa496"/>
<path d="M1149.0,601.9 L1161.7,607.3 L1161.5,611.7 L1148.7,608.8 L1148.4,612.7 L1160.8,619.4 L1160.2,623.6 L1147.4,619.3 L1146.6,623.0 L1158.7,630.9 L1157.6,634.9 L1144.9,629.2 L1143.7,632.7 L1155.2,641.7 L1153.7,645.4 L1141.2,638.5 L1139.7,641.7 L1150.5,651.7 L1148.5,655.1 L1136.5,647.0 L1134.6,649.8 L1144.6,660.8 L1142.2,663.9 L1130.8,654.6 L1128.4,657.1 L1137.5,668.9 L1134.7,671.5 L1124.0,661.3 L1121.4,663.4 L1129.5,675.8 L1126.3,678.0 L1116.4,666.9 L1113.5,668.6 L1120.4,681.5 L1116.9,683.3 L1108.0,671.4 L1104.8,672.7 L1110.5,686.0 L1106.8,687.2 L1098.9,674.7 L1095.5,675.7 L1099.9,689.1 L1095.9,689.8 L1089.2,676.9 L1085.6,677.4 L1088.7,690.8 L1084.5,691.1 L1079.0,677.8 L1075.3,677.9 L1077.0,691.2 L1072.7,690.9 L1068.5,677.5 L1064.6,677.1 L1065.0,690.1 L1060.6,689.4 L1057.7,676.0 L1053.8,675.1 L1052.7,687.7 L1048.3,686.5 L1046.8,673.2 L1042.9,672.0 L1040.5,683.9 L1036.1,682.3 L1035.9,669.3 L1032.0,667.6 L1028.3,678.9 L1024.0,676.7 L1025.2,664.3 L1021.4,662.2 L1016.3,672.6 L1012.1,670.0 L1014.7,658.1 L1011.1,655.7 L1004.8,665.1 L1000.7,662.1 L1004.7,651.0 L1001.2,648.2 L993.7,656.5 L989.9,653.2 L995.1,642.9 L991.8,639.8 L983.3,646.9 L979.7,643.3 L986.2,634.0 L983.2,630.7 L973.6,636.5 L970.3,632.6 L978.0,624.4 L975.3,620.8 L964.8,625.3 L961.9,621.2 L970.6,614.2 L968.2,610.4 L957.0,613.5 L954.5,609.2 L964.2,603.5 L962.1,599.6 L950.3,601.3 L948.1,596.8 L958.7,592.5 L957.0,588.4 L944.7,588.6 L943.0,584.1 L954.3,581.2 L952.9,577.1 L940.3,575.8 L939.1,571.2 L951.0,569.8 L950.0,565.7 L937.2,563.0 L936.4,558.4 L948.8,558.4 L948.3,554.4 L935.4,550.3 L935.1,545.8 L947.8,547.2 L947.7,543.3 L935.0,537.8 L935.1,533.4 L947.9,536.3 L948.3,532.5 L935.8,525.8 L936.4,521.5 L949.3,525.8 L950.0,522.2 L938.0,514.3 L939.1,510.3 L951.8,515.9 L952.9,512.5 L941.4,503.4 L943.0,499.7 L955.4,506.7 L957.0,503.5 L946.2,493.4 L948.1,490.0 L960.1,498.2 L962.1,495.3 L952.1,484.3 L954.5,481.3 L965.9,490.6 L968.2,488.0 L959.1,476.3 L961.9,473.7 L972.6,483.9 L975.3,481.8 L967.2,469.4 L970.3,467.2 L980.2,478.3 L983.2,476.5 L976.2,463.6 L979.7,461.9 L988.6,473.8 L991.8,472.4 L986.1,459.2 L989.9,457.9 L997.8,470.4 L1001.2,469.5 L996.7,456.1 L1000.7,455.3 L1007.5,468.3 L1011.1,467.8 L1008.0,454.4 L1012.1,454.1 L1017.6,467.3 L1021.4,467.3 L1019.7,454.0 L1024.0,454.2 L1028.2,467.6 L1032.0,468.0 L1031.7,455.0 L1036.1,455.8 L1039.0,469.2 L1042.9,470.0 L1043.9,457.5 L1048.3,458.7 L1049.9,471.9 L1053.8,473.2 L1056.2,461.2 L1060.6,462.9 L1060.7,475.8 L1064.6,477.5 L1068.4,466.3 L1072.7,468.4 L1071.4,480.9 L1075.3,483.0 L1080.3,472.6 L1084.5,475.2 L1081.9,487.0 L1085.6,489.5 L1091.9,480.1 L1095.9,483.1 L1092.0,494.2 L1095.5,497.0 L1102.9,488.7 L1106.8,492.0 L1101.5,502.2 L1104.8,505.3 L1113.4,498.2 L1116.9,501.9 L1110.4,511.1 L1113.5,514.5 L1123.0,508.6 L1126.3,512.6 L1118.6,520.7 L1121.4,524.3 L1131.8,519.8 L1134.7,524.0 L1126.0,530.9 L1128.4,534.7 L1139.6,531.6 L1142.2,536.0 L1132.5,541.6 L1134.6,545.6 L1146.4,543.9 L1148.5,548.4 L1138.0,552.7 L1139.7,556.7 L1151.9,556.5 L1153.7,561.1 L1142.4,564.0 L1143.7,568.1 L1156.3,569.3 L1157.6,573.9 L1145.7,575.4 L1146.6,579.5 L1159.4,582.1 L1160.2,586.8 L1147.9,586.7 L1148.4,590.8 L1161.2,594.9 L1161.5,599.4 L1148.9,597.9Z" fill="#aaa496"/>
<path d="M1147.8,602.9 L1160.6,608.3 L1160.4,612.7 L1147.6,609.8 L1147.3,613.6 L1159.7,620.4 L1159.1,624.6 L1146.3,620.3 L1145.5,623.9 L1157.6,631.9 L1156.5,635.8 L1143.8,630.2 L1142.6,633.6 L1154.1,642.7 L1152.5,646.4 L1140.1,639.5 L1138.5,642.6 L1149.4,652.7 L1147.4,656.1 L1135.4,648.0 L1133.4,650.8 L1143.5,661.8 L1141.0,664.8 L1129.6,655.6 L1127.3,658.1 L1136.4,669.8 L1133.6,672.5 L1122.9,662.2 L1120.3,664.4 L1128.3,676.8 L1125.2,679.0 L1115.3,667.8 L1112.4,669.6 L1119.3,682.5 L1115.8,684.2 L1106.9,672.4 L1103.7,673.7 L1109.4,686.9 L1105.7,688.2 L1097.8,675.7 L1094.3,676.6 L1098.8,690.0 L1094.8,690.8 L1088.1,677.9 L1084.5,678.3 L1087.6,691.8 L1083.4,692.0 L1077.9,678.8 L1074.1,678.8 L1075.9,692.1 L1071.6,691.9 L1067.3,678.5 L1063.5,678.1 L1063.8,691.1 L1059.5,690.4 L1056.6,676.9 L1052.6,676.1 L1051.6,688.7 L1047.2,687.5 L1045.7,674.2 L1041.8,672.9 L1039.3,684.9 L1034.9,683.2 L1034.8,670.3 L1030.9,668.6 L1027.2,679.8 L1022.8,677.7 L1024.1,665.2 L1020.3,663.1 L1015.2,673.5 L1011.0,670.9 L1013.6,659.1 L1009.9,656.6 L1003.6,666.0 L999.6,663.1 L1003.6,651.9 L1000.1,649.1 L992.6,657.5 L988.7,654.1 L994.0,643.9 L990.7,640.8 L982.2,647.9 L978.6,644.2 L985.1,635.0 L982.0,631.6 L972.5,637.5 L969.2,633.5 L976.9,625.4 L974.1,621.8 L963.7,626.3 L960.8,622.1 L969.5,615.2 L967.1,611.4 L955.9,614.5 L953.4,610.1 L963.0,604.5 L961.0,600.5 L949.2,602.2 L947.0,597.7 L957.6,593.4 L955.9,589.4 L943.6,589.6 L941.9,585.0 L953.1,582.1 L951.8,578.0 L939.2,576.8 L937.9,572.2 L949.8,570.7 L948.9,566.6 L936.1,564.0 L935.3,559.4 L947.6,559.4 L947.1,555.3 L934.3,551.2 L934.0,546.7 L946.6,548.2 L946.6,544.2 L933.8,538.8 L934.0,534.4 L946.8,537.3 L947.1,533.5 L934.7,526.7 L935.3,522.5 L948.1,526.8 L948.9,523.2 L936.8,515.2 L937.9,511.2 L950.6,516.9 L951.8,513.5 L940.3,504.4 L941.9,500.7 L954.3,507.6 L955.9,504.5 L945.0,494.4 L947.0,491.0 L959.0,499.1 L961.0,496.3 L950.9,485.3 L953.4,482.3 L964.8,491.5 L967.1,489.0 L958.0,477.2 L960.8,474.6 L971.5,484.9 L974.1,482.7 L966.1,470.3 L969.2,468.1 L979.1,479.2 L982.0,477.5 L975.1,464.6 L978.6,462.9 L987.5,474.7 L990.7,473.4 L985.0,460.2 L988.7,458.9 L996.6,471.4 L1000.1,470.5 L995.6,457.1 L999.6,456.3 L1006.3,469.2 L1009.9,468.7 L1006.8,455.3 L1011.0,455.0 L1016.5,468.3 L1020.3,468.3 L1018.5,455.0 L1022.8,455.2 L1027.1,468.6 L1030.9,469.0 L1030.6,456.0 L1034.9,456.7 L1037.8,470.1 L1041.8,471.0 L1042.8,458.4 L1047.2,459.6 L1048.7,472.9 L1052.6,474.2 L1055.1,462.2 L1059.5,463.9 L1059.6,476.8 L1063.5,478.5 L1067.2,467.3 L1071.6,469.4 L1070.3,481.9 L1074.1,484.0 L1079.2,473.6 L1083.4,476.1 L1080.8,488.0 L1084.5,490.5 L1090.8,481.1 L1094.8,484.0 L1090.8,495.1 L1094.3,497.9 L1101.8,489.6 L1105.7,493.0 L1100.4,503.2 L1103.7,506.3 L1112.2,499.2 L1115.8,502.8 L1109.3,512.1 L1112.4,515.5 L1121.9,509.6 L1125.2,513.6 L1117.5,521.7 L1120.3,525.3 L1130.7,520.8 L1133.6,525.0 L1124.9,531.9 L1127.3,535.7 L1138.5,532.6 L1141.0,537.0 L1131.4,542.6 L1133.4,546.5 L1145.2,544.9 L1147.4,549.4 L1136.8,553.6 L1138.5,557.7 L1150.8,557.5 L1152.5,562.1 L1141.3,564.9 L1142.6,569.0 L1155.2,570.3 L1156.5,574.9 L1144.6,576.3 L1145.5,580.4 L1158.3,583.1 L1159.1,587.7 L1146.8,587.7 L1147.3,591.8 L1160.1,595.8 L1160.4,600.4 L1147.8,598.9Z" fill="#aaa496"/>
<path d="M1146.7,603.8 L1159.4,609.3 L1159.3,613.7 L1146.5,610.8 L1146.1,614.6 L1158.6,621.3 L1158.0,625.5 L1145.1,621.2 L1144.4,624.9 L1156.4,632.8 L1155.3,636.8 L1142.6,631.2 L1141.5,634.6 L1153.0,643.7 L1151.4,647.4 L1139.0,640.4 L1137.4,643.6 L1148.2,653.7 L1146.3,657.0 L1134.3,648.9 L1132.3,651.8 L1142.3,662.8 L1139.9,665.8 L1128.5,656.5 L1126.2,659.0 L1135.3,670.8 L1132.5,673.4 L1121.8,663.2 L1119.1,665.3 L1127.2,677.7 L1124.1,679.9 L1114.2,668.8 L1111.2,670.6 L1118.2,683.4 L1114.7,685.2 L1105.8,673.3 L1102.6,674.7 L1108.3,687.9 L1104.5,689.1 L1096.6,676.7 L1093.2,677.6 L1097.7,691.0 L1093.7,691.8 L1086.9,678.8 L1083.3,679.3 L1086.4,692.7 L1082.3,693.0 L1076.8,679.7 L1073.0,679.8 L1074.7,693.1 L1070.4,692.9 L1066.2,679.4 L1062.4,679.0 L1062.7,692.0 L1058.3,691.3 L1055.4,677.9 L1051.5,677.1 L1050.5,689.6 L1046.1,688.4 L1044.5,675.2 L1040.6,673.9 L1038.2,685.9 L1033.8,684.2 L1033.7,671.2 L1029.8,669.5 L1026.0,680.8 L1021.7,678.7 L1023.0,666.2 L1019.1,664.1 L1014.1,674.5 L1009.9,671.9 L1012.5,660.0 L1008.8,657.6 L1002.5,667.0 L998.5,664.0 L1002.4,652.9 L998.9,650.1 L991.5,658.4 L987.6,655.1 L992.9,644.8 L989.6,641.7 L981.0,648.9 L977.5,645.2 L984.0,636.0 L980.9,632.6 L971.4,638.4 L968.1,634.5 L975.8,626.4 L973.0,622.8 L962.6,627.3 L959.7,623.1 L968.4,616.2 L966.0,612.3 L954.8,615.5 L952.2,611.1 L961.9,605.5 L959.8,601.5 L948.0,603.2 L945.9,598.7 L956.4,594.4 L954.7,590.3 L942.5,590.6 L940.7,586.0 L952.0,583.1 L950.7,579.0 L938.1,577.8 L936.8,573.1 L948.7,571.7 L947.8,567.6 L935.0,564.9 L934.2,560.3 L946.5,560.3 L946.0,556.3 L933.2,552.2 L932.9,547.7 L945.5,549.1 L945.4,545.2 L932.7,539.7 L932.9,535.3 L945.7,538.2 L946.0,534.4 L933.6,527.7 L934.2,523.5 L947.0,527.8 L947.8,524.1 L935.7,516.2 L936.8,512.2 L949.5,517.8 L950.7,514.4 L939.2,505.3 L940.7,501.6 L953.2,508.6 L954.7,505.4 L943.9,495.3 L945.9,492.0 L957.9,500.1 L959.8,497.2 L949.8,486.2 L952.2,483.2 L963.6,492.5 L966.0,490.0 L956.9,478.2 L959.7,475.6 L970.4,485.8 L973.0,483.7 L964.9,471.3 L968.1,469.1 L978.0,480.2 L980.9,478.4 L974.0,465.6 L977.5,463.8 L986.4,475.7 L989.6,474.3 L983.9,461.1 L987.6,459.9 L995.5,472.3 L998.9,471.4 L994.5,458.0 L998.5,457.2 L1005.2,470.2 L1008.8,469.7 L1005.7,456.3 L1009.9,456.0 L1015.4,469.3 L1019.1,469.2 L1017.4,455.9 L1021.7,456.1 L1025.9,469.6 L1029.8,470.0 L1029.4,457.0 L1033.8,457.7 L1036.7,471.1 L1040.6,471.9 L1041.7,459.4 L1046.1,460.6 L1047.6,473.8 L1051.5,475.1 L1053.9,463.1 L1058.3,464.8 L1058.5,477.8 L1062.4,479.5 L1066.1,468.2 L1070.4,470.3 L1069.2,482.8 L1073.0,484.9 L1078.1,474.5 L1082.3,477.1 L1079.7,489.0 L1083.3,491.4 L1089.6,482.0 L1093.7,485.0 L1089.7,496.1 L1093.2,498.9 L1100.7,490.6 L1104.5,493.9 L1099.3,504.2 L1102.6,507.3 L1111.1,500.1 L1114.7,503.8 L1108.2,513.0 L1111.2,516.4 L1120.8,510.6 L1124.1,514.5 L1116.4,522.6 L1119.1,526.2 L1129.6,521.7 L1132.5,525.9 L1123.8,532.8 L1126.2,536.7 L1137.4,533.5 L1139.9,537.9 L1130.2,543.5 L1132.3,547.5 L1144.1,545.8 L1146.3,550.3 L1135.7,554.6 L1137.4,558.7 L1149.7,558.4 L1151.4,563.0 L1140.1,565.9 L1141.5,570.0 L1154.1,571.2 L1155.3,575.9 L1143.4,577.3 L1144.4,581.4 L1157.2,584.1 L1158.0,588.7 L1145.6,588.7 L1146.1,592.7 L1159.0,596.8 L1159.3,601.3 L1146.6,599.9Z" fill="#d2cdbf" stroke="#151515" stroke-width="0.8" stroke-linejoin="round"/>
<ellipse cx="1046.1" cy="574.5" rx="116.61" ry="87.28" transform="rotate(-130.40 1046.1 574.5)" fill="url(#gring)"/>
<ellipse cx="1046.1" cy="574.5" rx="107.01" ry="80.10" transform="rotate(-130.40 1046.1 574.5)" fill="#6f685a" stroke="#151515" stroke-width="1.1"/>
<path d="M1086.0,472.0 L1131.0,450.0 L1141.0,447.0 L1150.0,452.0 L1143.0,463.0 L1093.0,486.0Z" fill="#2f6b33" stroke="#021804" stroke-width="1"/>
<path d="M1095,482 L1135,462 L1128,454 L1090,474Z" fill="#333"/>
<path d="M1130,448 L1141,444 L1152,451 L1147,460 L1136,456Z" fill="#4da64f" stroke="#021804" stroke-width="0.8"/>
<path d="M1141,444 L1149,446 L1153,452 L1147,457Z" fill="#e8e8e8" stroke="#151515" stroke-width="0.8"/>
<ellipse cx="1189.0" cy="539.0" rx="57.57" ry="43.09" transform="rotate(-130.40 1189.0 539.0)" fill="#191919"/>
<ellipse cx="1263.6" cy="698.0" rx="57.57" ry="43.09" transform="rotate(-130.40 1263.6 698.0)" fill="#191919"/>
<path d="M962.3,559.3 L962.7,556.1 L964.0,553.4 L966.0,551.3 L978.0,541.1 L1156.4,453.8 L1164.2,450.8 L1172.7,449.1 L1181.7,448.6 L1191.0,449.5 L1200.4,451.6 L1209.8,455.0 L1219.1,459.6 L1228.1,465.2 L1236.5,471.9 L1244.4,479.4 L1251.5,487.8 L1257.8,496.8 L1263.0,506.2 L1337.1,670.0 L1341.2,679.6 L1344.2,689.3 L1346.0,699.0 L1346.6,708.5 L1346.0,717.6 L1344.2,726.2 L1306.7,902.1 L1305.6,903.4 L1293.6,913.7 L1292.0,914.3 L1290.0,914.1 L978.0,820.1 L976.0,819.2 L974.4,817.6 L973.3,815.6 L972.9,813.5ZM988.7,622.5 L993.8,621.9 L995.3,622.6 L999.2,627.9 L1002.9,634.1 L1022.6,668.2 L1026.2,674.8 L1029.6,682.7 L1030.4,686.4 L1032.1,702.0 L1032.3,704.9 L1031.4,707.6 L1030.2,708.3 L1023.3,710.0 L1021.5,710.1 L1017.4,708.4 L1013.8,706.2 L994.7,694.1 L991.2,690.9 L988.1,682.9 L987.5,675.5 L987.0,636.8 L987.0,629.7 L987.7,623.5ZM1026.2,705.8 L1027.3,711.6 L1027.7,712.8 L1029.0,714.8 L1030.3,716.2 L1037.2,723.1 L1038.7,724.5 L1041.3,726.4 L1043.1,727.4 L1052.4,732.0 L1055.0,733.1 L1062.3,735.8 L1069.3,738.1 L1106.2,750.2 L1113.2,752.4 L1120.1,754.0 L1122.3,753.8 L1129.2,751.5 L1130.7,750.7 L1133.0,747.7 L1134.5,744.6 L1142.0,727.8 L1142.9,724.2 L1140.9,717.9 L1137.4,713.2 L1117.1,690.1 L1112.6,685.9 L1103.9,682.3 L1097.1,681.7 L1062.4,681.7 L1055.7,682.0 L1048.1,684.0 L1044.7,686.3 L1030.8,699.0 L1028.3,701.5 L1026.3,704.4ZM1015.3,758.0 L1022.2,753.4 L1023.8,752.5 L1027.2,751.8 L1030.0,751.7 L1044.5,751.7 L1048.0,752.0 L1056.3,753.7 L1063.5,755.7 L1101.0,766.7 L1108.1,768.8 L1115.2,771.6 L1117.5,773.0 L1125.0,779.4 L1126.5,780.8 L1128.6,783.3 L1129.9,785.3 L1135.6,795.1 L1136.7,797.0 L1137.3,799.6 L1137.1,801.0 L1135.4,807.4 L1134.9,808.6 L1133.2,810.2 L1131.6,810.9 L1122.9,814.4 L1121.2,815.3 L1118.9,817.3 L1117.6,819.1 L1111.9,828.3 L1110.2,829.8 L1105.7,830.3 L1101.3,829.4 L1078.2,823.0 L1073.8,821.7 L1068.7,819.9 L1066.6,818.8 L1057.9,813.6 L1056.2,812.3 L1053.9,809.4 L1052.6,806.8 L1046.9,793.5 L1045.6,790.9 L1043.1,787.7 L1041.2,786.1 L1031.3,779.2 L1029.4,777.9 L1026.6,776.3 L1025.0,775.6 L1017.5,772.7 L1016.1,772.0 L1014.7,770.5 L1014.3,769.1 L1013.2,762.2 L1013.1,760.8 L1014.0,759.0ZM1158.5,796.7 L1169.2,791.4 L1172.2,790.7 L1180.3,791.6 L1188.0,793.4 L1228.7,804.2 L1236.3,806.3 L1243.7,808.8 L1245.9,810.1 L1252.4,815.7 L1253.8,816.8 L1256.0,818.9 L1257.5,820.3 L1265.0,827.6 L1266.4,829.2 L1267.6,831.7 L1267.8,833.4 L1267.8,842.0 L1267.4,843.8 L1265.4,846.3 L1263.0,847.9 L1250.2,855.4 L1247.7,856.9 L1245.2,859.3 L1244.2,860.8 L1241.0,868.3 L1239.6,869.5 L1234.0,869.1 L1228.0,867.6 L1196.0,857.9 L1190.0,855.9 L1184.5,853.1 L1183.1,851.3 L1179.9,842.8 L1179.0,840.9 L1176.7,837.7 L1174.4,835.4 L1162.6,823.5 L1160.4,821.0 L1158.2,817.3 L1157.5,814.9 L1155.3,803.0 L1155.2,800.7 L1156.6,798.0ZM1178.7,763.1 L1184.1,756.6 L1185.3,755.4 L1187.9,753.6 L1190.0,752.7 L1200.8,748.3 L1203.2,747.6 L1207.8,747.8 L1211.3,748.7 L1229.2,754.2 L1232.8,755.4 L1237.3,757.8 L1239.8,759.7 L1250.7,769.2 L1252.8,771.1 L1254.7,773.4 L1255.1,774.7 L1256.2,780.1 L1256.3,781.2 L1255.7,782.9 L1255.0,784.0 L1250.7,789.4 L1249.1,790.2 L1243.2,789.7 L1237.0,788.3 L1203.9,779.8 L1197.6,778.1 L1191.2,776.3 L1189.0,775.4 L1181.5,771.9 L1180.1,771.2 L1178.7,770.2 L1178.3,769.6 L1177.2,766.6 L1177.1,765.9 L1177.8,764.4ZM1271.8,766.8 L1278.4,760.1 L1280.0,758.8 L1284.1,757.2 L1287.7,756.4 L1306.8,752.9 L1310.4,752.4 L1314.0,752.2 L1315.2,752.6 L1319.0,755.2 L1319.6,756.3 L1319.5,760.6 L1318.8,765.2 L1314.4,789.7 L1313.4,794.3 L1312.0,798.9 L1311.1,800.3 L1306.4,804.6 L1305.2,805.2 L1302.3,804.7 L1299.7,803.5 L1285.8,796.0 L1283.1,794.4 L1279.9,791.7 L1278.4,789.8 L1271.8,780.2 L1270.6,778.3 L1269.6,776.1 L1269.5,775.1 L1269.5,770.8 L1269.6,769.8 L1270.6,768.1ZM1282.2,836.5 L1286.3,833.3 L1287.2,832.8 L1289.0,832.6 L1290.5,832.9 L1298.0,834.9 L1299.4,835.5 L1300.8,837.2 L1301.2,838.8 L1302.3,847.5 L1302.5,849.2 L1302.1,851.4 L1301.6,852.6 L1298.4,857.8 L1297.6,858.6 L1295.8,858.8 L1294.1,858.2 L1285.6,854.2 L1284.0,853.2 L1282.5,851.2 L1282.1,849.5 L1281.1,840.8 L1281.0,839.2 L1281.5,837.3ZM1234.3,589.3 L1244.2,588.1 L1246.3,587.9 L1250.0,588.1 L1252.8,588.5 L1266.7,590.8 L1269.5,591.3 L1273.4,592.3 L1275.8,592.9 L1286.7,596.4 L1288.7,597.4 L1290.2,600.1 L1290.1,602.7 L1288.4,616.6 L1287.9,619.2 L1286.4,622.0 L1285.0,622.9 L1277.5,626.4 L1275.9,626.9 L1273.4,626.5 L1271.6,625.6 L1262.9,619.8 L1261.1,618.9 L1258.2,618.9 L1256.2,619.8 L1246.3,625.6 L1244.4,626.5 L1242.0,626.9 L1240.8,626.4 L1235.7,622.9 L1234.7,621.9 L1233.6,618.4 L1233.1,614.9 L1231.4,596.4 L1231.3,593.0 L1232.6,589.9ZM1035.6,539.4 L1037.9,533.0 L1038.5,531.8 L1039.9,530.2 L1041.1,529.4 L1047.4,525.9 L1049.0,525.2 L1052.3,523.6 L1055.2,522.4 L1070.3,516.0 L1073.4,514.9 L1078.5,513.9 L1082.1,513.9 L1099.4,514.5 L1102.8,514.7 L1106.8,515.4 L1108.7,516.2 L1116.8,520.2 L1118.3,521.0 L1119.8,522.3 L1120.2,523.2 L1121.3,527.2 L1120.8,528.6 L1116.2,533.1 L1110.8,537.8 L1080.7,562.6 L1075.0,567.1 L1068.9,570.6 L1066.6,570.8 L1057.9,568.5 L1056.1,567.9 L1053.4,566.4 L1051.6,564.9 L1042.9,557.4 L1041.3,555.9 L1039.4,553.5 L1038.7,551.9 L1035.8,544.4 L1035.3,542.9 L1035.2,540.7ZM1114.7,502.3 L1119.8,501.1 L1121.0,501.0 L1122.8,501.9 L1124.1,503.0 L1130.4,509.4 L1131.6,510.7 L1132.7,513.2 L1133.0,515.1 L1133.5,524.3 L1133.5,526.0 L1132.6,527.2 L1131.4,527.3 L1125.1,526.1 L1123.8,525.6 L1121.9,523.3 L1120.6,520.8 L1114.9,507.5 L1113.9,505.1 L1113.8,502.8ZM1249.7,545.5 L1249.3,552.1 L1248.0,558.3 L1245.8,564.0 L1242.9,569.1 L1239.2,573.6 L1234.8,577.4 L1229.8,580.3 L1224.2,582.4 L1218.3,583.7 L1211.9,584.0 L1205.4,583.4 L1198.8,581.9 L1192.1,579.5 L1185.6,576.3 L1179.2,572.3 L1173.3,567.6 L1167.7,562.3 L1162.7,556.4 L1158.3,550.1 L1154.6,543.4 L1151.7,536.6 L1149.5,529.6 L1148.2,522.6 L1147.8,515.8 L1148.2,509.3 L1149.5,503.1 L1151.7,497.4 L1154.6,492.2 L1158.3,487.7 L1162.7,484.0 L1167.7,481.0 L1173.3,478.9 L1179.2,477.7 L1185.6,477.4 L1192.1,478.0 L1198.8,479.5 L1205.4,481.9 L1211.9,485.1 L1218.3,489.1 L1224.2,493.8 L1229.8,499.1 L1234.8,505.0 L1239.2,511.3 L1242.9,517.9 L1245.8,524.8 L1248.0,531.8 L1249.3,538.7 L1249.7,545.5ZM1324.3,704.5 L1323.9,711.1 L1322.6,717.3 L1320.4,723.0 L1317.5,728.1 L1313.8,732.6 L1309.4,736.4 L1304.4,739.3 L1298.8,741.4 L1292.9,742.7 L1286.5,743.0 L1280.0,742.4 L1273.3,740.9 L1266.7,738.5 L1260.2,735.3 L1253.8,731.3 L1247.9,726.6 L1242.3,721.3 L1237.3,715.4 L1232.9,709.1 L1229.2,702.4 L1226.3,695.6 L1224.1,688.6 L1222.8,681.6 L1222.4,674.8 L1222.8,668.3 L1224.1,662.1 L1226.3,656.4 L1229.2,651.2 L1232.9,646.7 L1237.3,643.0 L1242.3,640.0 L1247.9,637.9 L1253.8,636.7 L1260.2,636.4 L1266.7,637.0 L1273.3,638.5 L1280.0,640.9 L1286.5,644.1 L1292.9,648.1 L1298.8,652.8 L1304.4,658.1 L1309.4,664.0 L1313.8,670.3 L1317.5,676.9 L1320.4,683.8 L1322.6,690.8 L1323.9,697.7 L1324.3,704.5ZM1048.9,594.1 L1048.6,598.7 L1047.7,603.0 L1046.2,607.0 L1044.1,610.6 L1041.6,613.7 L1038.5,616.4 L1035.0,618.4 L1031.1,619.9 L1026.9,620.8 L1022.5,621.0 L1017.9,620.6 L1013.2,619.5 L1008.6,617.9 L1004.0,615.6 L999.6,612.8 L995.4,609.5 L991.5,605.8 L988.0,601.7 L984.9,597.3 L982.4,592.6 L980.3,587.8 L978.8,582.9 L977.9,578.1 L977.6,573.3 L977.9,568.7 L978.8,564.4 L980.3,560.4 L982.4,556.8 L984.9,553.6 L988.0,551.0 L991.5,548.9 L995.4,547.4 L999.6,546.6 L1004.0,546.4 L1008.6,546.8 L1013.2,547.8 L1017.9,549.5 L1022.5,551.8 L1026.9,554.5 L1031.1,557.8 L1035.0,561.6 L1038.5,565.7 L1041.6,570.1 L1044.1,574.8 L1046.2,579.6 L1047.7,584.4 L1048.6,589.3 L1048.9,594.1Z" fill="#48a24d" fill-rule="evenodd" stroke="#021804" stroke-width="1.4"/>
<path d="M962.3,559.3 L962.7,556.1 L964.0,553.4 L966.0,551.3 L1144.4,464.1 L1152.2,461.1 L1160.7,459.3 L1169.7,458.9 L1179.0,459.7 L1188.4,461.9 L1197.8,465.2 L1207.1,469.8 L1216.1,475.4 L1224.5,482.1 L1232.4,489.7 L1239.5,498.0 L1245.8,507.0 L1251.0,516.4 L1325.1,680.2 L1329.2,689.8 L1332.2,699.5 L1334.0,709.2 L1334.6,718.7 L1334.0,727.8 L1332.2,736.5 L1294.7,912.3 L1293.6,913.7 L1292.0,914.3 L1290.0,914.1 L978.0,820.1 L976.0,819.2 L974.4,817.6 L973.3,815.6 L972.9,813.5ZM978.9,630.8 L984.1,630.2 L985.5,631.0 L989.5,636.2 L993.2,642.5 L1012.8,676.5 L1016.5,683.2 L1019.8,691.0 L1020.6,694.7 L1022.4,710.3 L1022.5,713.2 L1021.7,715.9 L1020.5,716.6 L1013.5,718.4 L1011.8,718.4 L1007.7,716.7 L1004.0,714.6 L985.0,702.4 L981.5,699.3 L978.4,691.2 L977.8,683.8 L977.2,645.2 L977.2,638.1 L978.0,631.9ZM1016.4,714.1 L1017.6,719.9 L1018.0,721.1 L1019.2,723.1 L1020.5,724.5 L1027.5,731.5 L1029.0,732.8 L1031.5,734.7 L1033.4,735.7 L1042.6,740.3 L1045.2,741.5 L1052.5,744.1 L1059.5,746.4 L1096.5,758.6 L1103.4,760.7 L1110.3,762.3 L1112.5,762.2 L1119.5,759.8 L1120.9,759.0 L1123.2,756.0 L1124.7,752.9 L1132.3,736.1 L1133.1,732.5 L1131.1,726.2 L1127.6,721.6 L1107.4,698.4 L1102.8,694.2 L1094.2,690.6 L1087.3,690.0 L1052.7,690.0 L1046.0,690.3 L1038.3,692.3 L1034.9,694.6 L1021.1,707.4 L1018.6,709.8 L1016.6,712.7ZM1005.5,766.3 L1012.5,761.7 L1014.1,760.8 L1017.5,760.1 L1020.3,760.0 L1034.7,760.0 L1038.3,760.3 L1046.5,762.0 L1053.7,764.0 L1091.3,775.0 L1098.3,777.2 L1105.4,779.9 L1107.7,781.3 L1115.3,787.7 L1116.8,789.1 L1118.9,791.6 L1120.1,793.6 L1125.9,803.4 L1126.9,805.4 L1127.5,807.9 L1127.4,809.3 L1125.6,815.7 L1125.1,816.9 L1123.5,818.5 L1121.8,819.3 L1113.2,822.7 L1111.4,823.6 L1109.2,825.6 L1107.9,827.4 L1102.1,836.6 L1100.5,838.2 L1095.9,838.6 L1091.6,837.7 L1068.4,831.3 L1064.0,830.0 L1059.0,828.2 L1056.8,827.1 L1048.2,821.9 L1046.4,820.6 L1044.2,817.7 L1042.9,815.1 L1037.1,801.9 L1035.8,799.3 L1033.3,796.1 L1031.4,794.5 L1021.6,787.5 L1019.6,786.2 L1016.9,784.6 L1015.3,783.9 L1007.7,781.1 L1006.3,780.4 L1005.0,778.8 L1004.6,777.5 L1003.4,770.5 L1003.4,769.2 L1004.3,767.3ZM1148.7,805.1 L1159.5,799.7 L1162.4,799.0 L1170.6,799.9 L1178.3,801.7 L1218.9,812.5 L1226.5,814.6 L1234.0,817.1 L1236.2,818.4 L1242.6,824.0 L1244.0,825.2 L1246.2,827.2 L1247.7,828.7 L1255.3,835.9 L1256.6,837.5 L1257.8,840.0 L1258.0,841.7 L1258.0,850.4 L1257.7,852.1 L1255.6,854.6 L1253.3,856.2 L1240.4,863.7 L1238.0,865.2 L1235.4,867.6 L1234.5,869.1 L1231.2,876.7 L1229.8,877.8 L1224.2,877.4 L1218.3,875.9 L1186.2,866.2 L1180.3,864.3 L1174.7,861.4 L1173.3,859.6 L1170.2,851.1 L1169.3,849.3 L1166.9,846.0 L1164.7,843.7 L1152.8,831.8 L1150.6,829.4 L1148.4,825.6 L1147.7,823.2 L1145.6,811.3 L1145.5,809.0 L1146.8,806.3ZM1169.0,771.4 L1174.3,765.0 L1175.6,763.7 L1178.1,762.0 L1180.2,761.0 L1191.1,756.6 L1193.5,755.9 L1198.0,756.1 L1201.5,757.0 L1219.5,762.5 L1223.0,763.7 L1227.6,766.1 L1230.0,768.0 L1241.0,777.5 L1243.0,779.4 L1244.9,781.8 L1245.4,783.0 L1246.4,788.4 L1246.5,789.5 L1246.0,791.2 L1245.2,792.4 L1241.0,797.7 L1239.4,798.5 L1233.4,798.0 L1227.3,796.6 L1194.1,788.1 L1187.9,786.5 L1181.5,784.6 L1179.3,783.7 L1171.7,780.3 L1170.3,779.6 L1169.0,778.5 L1168.6,777.9 L1167.4,774.9 L1167.3,774.2 L1168.0,772.7ZM1262.1,775.1 L1268.6,768.4 L1270.3,767.1 L1274.3,765.5 L1278.0,764.7 L1297.0,761.3 L1300.6,760.7 L1304.2,760.6 L1305.4,761.0 L1309.3,763.5 L1309.9,764.6 L1309.8,768.9 L1309.1,773.5 L1304.6,798.0 L1303.7,802.6 L1302.3,807.2 L1301.3,808.6 L1296.7,812.9 L1295.5,813.5 L1292.6,813.0 L1289.9,811.8 L1276.1,804.3 L1273.4,802.7 L1270.2,800.0 L1268.6,798.1 L1262.1,788.5 L1260.9,786.6 L1259.9,784.4 L1259.7,783.4 L1259.7,779.1 L1259.9,778.1 L1260.9,776.4ZM1272.5,844.8 L1276.5,841.7 L1277.4,841.1 L1279.3,840.9 L1280.7,841.2 L1288.3,843.3 L1289.7,843.8 L1291.0,845.5 L1291.4,847.2 L1292.6,855.8 L1292.7,857.5 L1292.4,859.7 L1291.8,860.9 L1288.7,866.1 L1287.9,866.9 L1286.0,867.1 L1284.4,866.5 L1275.8,862.5 L1274.2,861.5 L1272.7,859.5 L1272.3,857.8 L1271.4,849.2 L1271.3,847.5 L1271.8,845.6ZM1224.6,597.6 L1234.4,596.4 L1236.6,596.3 L1240.3,596.5 L1243.1,596.8 L1256.9,599.2 L1259.7,599.7 L1263.7,600.6 L1266.0,601.3 L1277.0,604.7 L1279.0,605.7 L1280.4,608.4 L1280.4,611.1 L1278.6,624.9 L1278.1,627.6 L1276.7,630.3 L1275.3,631.3 L1267.7,634.7 L1266.2,635.2 L1263.6,634.9 L1261.8,633.9 L1253.2,628.1 L1251.3,627.2 L1248.4,627.2 L1246.4,628.1 L1236.6,633.9 L1234.7,634.9 L1232.3,635.2 L1231.1,634.7 L1225.9,631.3 L1224.9,630.2 L1223.8,626.7 L1223.4,623.2 L1221.6,604.8 L1221.6,601.4 L1222.8,598.2ZM1025.8,547.7 L1028.2,541.3 L1028.7,540.1 L1030.1,538.5 L1031.3,537.7 L1037.7,534.3 L1039.2,533.5 L1042.6,531.9 L1045.5,530.7 L1060.5,524.3 L1063.7,523.2 L1068.8,522.3 L1072.3,522.2 L1089.7,522.8 L1093.0,523.0 L1097.0,523.7 L1099.0,524.5 L1107.0,528.5 L1108.6,529.4 L1110.0,530.6 L1110.4,531.5 L1111.6,535.5 L1111.0,536.9 L1106.5,541.4 L1101.0,546.1 L1071.0,570.9 L1065.3,575.4 L1059.2,579.0 L1056.8,579.2 L1048.2,576.8 L1046.4,576.2 L1043.6,574.7 L1041.8,573.3 L1033.2,565.7 L1031.5,564.2 L1029.7,561.8 L1028.9,560.3 L1026.1,552.7 L1025.6,551.2 L1025.5,549.0ZM1104.9,510.6 L1110.1,509.4 L1111.2,509.4 L1113.0,510.2 L1114.3,511.3 L1120.7,517.7 L1121.9,519.1 L1122.9,521.5 L1123.2,523.4 L1123.8,532.6 L1123.7,534.3 L1122.8,535.6 L1121.7,535.6 L1115.3,534.4 L1114.0,533.9 L1112.1,531.6 L1110.9,529.1 L1105.1,515.9 L1104.2,513.4 L1104.1,511.1ZM1240.0,553.8 L1239.5,560.4 L1238.2,566.6 L1236.1,572.3 L1233.1,577.5 L1229.4,581.9 L1225.0,585.7 L1220.0,588.7 L1214.5,590.8 L1208.5,592.0 L1202.2,592.3 L1195.7,591.7 L1189.0,590.2 L1182.3,587.8 L1175.8,584.6 L1169.5,580.6 L1163.5,575.9 L1158.0,570.6 L1153.0,564.7 L1148.6,558.4 L1144.9,551.7 L1141.9,544.9 L1139.8,537.9 L1138.5,531.0 L1138.0,524.2 L1138.5,517.6 L1139.8,511.4 L1141.9,505.7 L1144.9,500.5 L1148.6,496.1 L1153.0,492.3 L1158.0,489.3 L1163.5,487.2 L1169.5,486.0 L1175.8,485.7 L1182.3,486.3 L1189.0,487.8 L1195.7,490.2 L1202.2,493.4 L1208.5,497.4 L1214.5,502.1 L1220.0,507.4 L1225.0,513.3 L1229.4,519.6 L1233.1,526.3 L1236.1,533.1 L1238.2,540.1 L1239.5,547.0 L1240.0,553.8ZM1314.6,712.8 L1314.1,719.4 L1312.8,725.6 L1310.7,731.3 L1307.7,736.5 L1304.0,740.9 L1299.6,744.7 L1294.6,747.7 L1289.1,749.8 L1283.1,751.0 L1276.8,751.3 L1270.3,750.7 L1263.6,749.2 L1256.9,746.8 L1250.4,743.6 L1244.1,739.6 L1238.1,734.9 L1232.6,729.6 L1227.6,723.7 L1223.2,717.4 L1219.5,710.7 L1216.5,703.9 L1214.4,696.9 L1213.1,690.0 L1212.6,683.2 L1213.1,676.6 L1214.4,670.4 L1216.5,664.7 L1219.5,659.5 L1223.2,655.1 L1227.6,651.3 L1232.6,648.3 L1238.1,646.2 L1244.1,645.0 L1250.4,644.7 L1256.9,645.3 L1263.6,646.8 L1270.3,649.2 L1276.8,652.4 L1283.1,656.4 L1289.1,661.1 L1294.6,666.4 L1299.6,672.3 L1304.0,678.6 L1307.7,685.3 L1310.7,692.1 L1312.8,699.1 L1314.1,706.0 L1314.6,712.8ZM1039.2,602.4 L1038.9,607.0 L1038.0,611.3 L1036.5,615.3 L1034.4,618.9 L1031.8,622.1 L1028.7,624.7 L1025.2,626.8 L1021.3,628.2 L1017.2,629.1 L1012.7,629.3 L1008.2,628.9 L1003.5,627.8 L998.8,626.2 L994.3,623.9 L989.8,621.1 L985.7,617.8 L981.8,614.1 L978.3,610.0 L975.2,605.6 L972.6,600.9 L970.5,596.1 L969.0,591.2 L968.1,586.4 L967.8,581.6 L968.1,577.0 L969.0,572.7 L970.5,568.7 L972.6,565.1 L975.2,561.9 L978.3,559.3 L981.8,557.2 L985.7,555.8 L989.8,554.9 L994.3,554.7 L998.8,555.1 L1003.5,556.2 L1008.2,557.8 L1012.7,560.1 L1017.2,562.9 L1021.3,566.2 L1025.2,569.9 L1028.7,574.0 L1031.8,578.4 L1034.4,583.1 L1036.5,587.9 L1038.0,592.8 L1038.9,597.6 L1039.2,602.4Z" fill="#265a2a" fill-rule="evenodd" stroke="#021804" stroke-width="1.3"/>
<ellipse cx="1003.5" cy="592.0" rx="41.33" ry="30.93" transform="rotate(-130.40 1003.5 592.0)" fill="#6e6e6e" stroke="#151515" stroke-width="1"/>
<ellipse cx="1004.5" cy="594.0" rx="31.73" ry="23.75" transform="rotate(-130.40 1004.5 594.0)" fill="#8d8d8d" stroke="#151515" stroke-width="1"/>
<ellipse cx="1001.5" cy="598.0" rx="25.09" ry="18.78" transform="rotate(-130.40 1001.5 598.0)" fill="#1b1b1b" stroke="#151515" stroke-width="1"/>
<path d="M1230.6,676.8 L1240.7,681.6 L1240.5,685.6 L1230.2,683.3 L1229.8,686.9 L1239.7,692.6 L1239.1,696.5 L1228.8,693.1 L1228.0,696.5 L1237.6,703.2 L1236.5,706.8 L1226.3,702.4 L1225.2,705.6 L1234.3,713.1 L1232.8,716.5 L1222.8,711.1 L1221.3,714.0 L1229.8,722.3 L1228.0,725.4 L1218.3,719.0 L1216.5,721.7 L1224.3,730.7 L1222.1,733.4 L1212.9,726.2 L1210.7,728.6 L1217.9,738.1 L1215.3,740.5 L1206.6,732.5 L1204.1,734.5 L1210.4,744.5 L1207.5,746.6 L1199.4,737.8 L1196.7,739.5 L1202.1,749.9 L1199.0,751.5 L1191.6,742.2 L1188.6,743.5 L1193.1,754.1 L1189.7,755.3 L1183.0,745.5 L1179.8,746.4 L1183.4,757.1 L1179.7,757.9 L1174.0,747.7 L1170.6,748.2 L1173.1,759.0 L1169.3,759.3 L1164.5,748.8 L1160.9,748.9 L1162.4,759.5 L1158.4,759.4 L1154.6,748.7 L1151.0,748.4 L1151.3,758.9 L1147.3,758.4 L1144.5,747.6 L1140.8,746.9 L1140.1,757.0 L1136.0,756.0 L1134.2,745.3 L1130.5,744.2 L1128.7,753.9 L1124.7,752.5 L1124.0,742.0 L1120.3,740.5 L1117.5,749.6 L1113.4,747.8 L1113.8,737.6 L1110.2,735.7 L1106.3,744.2 L1102.4,742.0 L1103.8,732.2 L1100.3,730.0 L1095.5,737.7 L1091.7,735.1 L1094.2,725.8 L1090.8,723.3 L1085.1,730.2 L1081.4,727.3 L1085.0,718.6 L1081.8,715.8 L1075.1,721.8 L1071.7,718.6 L1076.3,710.6 L1073.3,707.6 L1065.9,712.6 L1062.7,709.1 L1068.2,701.9 L1065.4,698.6 L1057.3,702.6 L1054.4,698.9 L1060.8,692.6 L1058.3,689.1 L1049.6,692.1 L1047.0,688.1 L1054.2,682.8 L1052.0,679.1 L1042.7,681.0 L1040.5,676.9 L1048.4,672.5 L1046.6,668.8 L1036.9,669.5 L1035.0,665.3 L1043.6,662.0 L1042.1,658.2 L1032.1,657.8 L1030.6,653.5 L1039.8,651.3 L1038.6,647.5 L1028.4,645.9 L1027.4,641.7 L1036.9,640.6 L1036.2,636.7 L1025.9,634.1 L1025.2,629.9 L1035.1,629.9 L1034.8,626.1 L1024.5,622.4 L1024.3,618.2 L1034.4,619.4 L1034.4,615.7 L1024.3,611.0 L1024.5,606.9 L1034.8,609.2 L1035.2,605.6 L1025.3,599.9 L1025.9,596.0 L1036.2,599.4 L1037.0,596.0 L1027.4,589.3 L1028.5,585.7 L1038.7,590.1 L1039.8,586.9 L1030.7,579.4 L1032.2,576.0 L1042.2,581.5 L1043.7,578.5 L1035.2,570.2 L1037.0,567.1 L1046.7,573.5 L1048.5,570.8 L1040.7,561.9 L1042.9,559.1 L1052.1,566.3 L1054.3,564.0 L1047.1,554.4 L1049.7,552.0 L1058.4,560.0 L1060.9,558.0 L1054.6,548.0 L1057.5,545.9 L1065.6,554.7 L1068.3,553.0 L1062.9,542.6 L1066.0,541.0 L1073.4,550.4 L1076.4,549.0 L1071.9,538.4 L1075.3,537.2 L1082.0,547.1 L1085.2,546.1 L1081.6,535.4 L1085.3,534.6 L1091.0,544.9 L1094.4,544.3 L1091.9,533.6 L1095.7,533.2 L1100.5,543.8 L1104.1,543.6 L1102.6,533.0 L1106.6,533.1 L1110.4,543.8 L1114.0,544.1 L1113.7,533.6 L1117.7,534.2 L1120.5,544.9 L1124.2,545.6 L1124.9,535.5 L1129.0,536.5 L1130.8,547.2 L1134.5,548.3 L1136.3,538.6 L1140.3,540.0 L1141.0,550.6 L1144.7,552.0 L1147.5,542.9 L1151.6,544.7 L1151.2,555.0 L1154.8,556.8 L1158.7,548.3 L1162.6,550.5 L1161.2,560.3 L1164.7,562.5 L1169.5,554.8 L1173.3,557.4 L1170.8,566.7 L1174.2,569.2 L1179.9,562.3 L1183.6,565.2 L1180.0,573.9 L1183.2,576.7 L1189.9,570.7 L1193.3,573.9 L1188.7,581.9 L1191.7,585.0 L1199.1,579.9 L1202.3,583.4 L1196.8,590.6 L1199.6,593.9 L1207.7,589.9 L1210.6,593.6 L1204.2,599.9 L1206.7,603.4 L1215.4,600.5 L1218.0,604.4 L1210.8,609.7 L1213.0,613.4 L1222.3,611.6 L1224.5,615.6 L1216.6,620.0 L1218.4,623.7 L1228.1,623.0 L1230.0,627.2 L1221.4,630.5 L1222.9,634.3 L1232.9,634.7 L1234.4,639.0 L1225.2,641.2 L1226.4,645.0 L1236.6,646.6 L1237.6,650.8 L1228.1,651.9 L1228.8,655.8 L1239.1,658.4 L1239.8,662.6 L1229.9,662.6 L1230.2,666.4 L1240.5,670.1 L1240.7,674.3 L1230.6,673.1Z" fill="#8a8476" stroke="#151515" stroke-width="0.9"/>
<path d="M1229.4,677.8 L1239.5,682.6 L1239.3,686.6 L1229.0,684.3 L1228.6,687.9 L1238.5,693.6 L1237.9,697.5 L1227.6,694.1 L1226.8,697.5 L1236.4,704.2 L1235.3,707.8 L1225.1,703.4 L1224.0,706.6 L1233.1,714.1 L1231.6,717.5 L1221.6,712.1 L1220.1,715.0 L1228.6,723.3 L1226.8,726.4 L1217.1,720.0 L1215.3,722.7 L1223.1,731.7 L1220.9,734.5 L1211.7,727.2 L1209.5,729.6 L1216.7,739.1 L1214.1,741.5 L1205.4,733.5 L1202.9,735.5 L1209.2,745.5 L1206.3,747.6 L1198.2,738.8 L1195.5,740.5 L1200.9,750.9 L1197.8,752.6 L1190.4,743.2 L1187.4,744.5 L1191.9,755.1 L1188.5,756.3 L1181.8,746.5 L1178.6,747.4 L1182.2,758.2 L1178.5,759.0 L1172.8,748.7 L1169.4,749.2 L1171.9,760.0 L1168.1,760.3 L1163.3,749.8 L1159.7,749.9 L1161.2,760.6 L1157.2,760.5 L1153.4,749.7 L1149.8,749.5 L1150.1,759.9 L1146.1,759.4 L1143.3,748.6 L1139.6,747.9 L1138.9,758.0 L1134.8,757.0 L1133.0,746.3 L1129.3,745.3 L1127.5,754.9 L1123.5,753.5 L1122.8,743.0 L1119.1,741.5 L1116.3,750.6 L1112.2,748.8 L1112.6,738.6 L1109.0,736.8 L1105.1,745.2 L1101.2,743.0 L1102.6,733.2 L1099.1,731.0 L1094.3,738.7 L1090.5,736.2 L1093.0,726.9 L1089.6,724.4 L1083.9,731.3 L1080.2,728.3 L1083.8,719.6 L1080.6,716.9 L1073.9,722.9 L1070.5,719.6 L1075.1,711.6 L1072.1,708.6 L1064.7,713.6 L1061.5,710.1 L1067.0,702.9 L1064.2,699.6 L1056.1,703.7 L1053.2,699.9 L1059.6,693.6 L1057.1,690.1 L1048.4,693.1 L1045.8,689.1 L1053.0,683.8 L1050.8,680.2 L1041.5,682.0 L1039.3,677.9 L1047.2,673.6 L1045.4,669.8 L1035.7,670.5 L1033.8,666.3 L1042.4,663.1 L1040.9,659.2 L1030.9,658.8 L1029.4,654.6 L1038.6,652.4 L1037.4,648.5 L1027.2,647.0 L1026.2,642.7 L1035.7,641.6 L1035.0,637.8 L1024.7,635.1 L1024.0,630.9 L1033.9,631.0 L1033.6,627.1 L1023.3,623.4 L1023.1,619.3 L1033.2,620.5 L1033.2,616.7 L1023.1,612.0 L1023.3,607.9 L1033.6,610.2 L1034.0,606.7 L1024.1,600.9 L1024.7,597.1 L1035.0,600.4 L1035.8,597.0 L1026.2,590.4 L1027.3,586.7 L1037.5,591.2 L1038.6,588.0 L1029.5,580.4 L1031.0,577.0 L1041.0,582.5 L1042.5,579.5 L1034.0,571.3 L1035.8,568.1 L1045.5,574.5 L1047.3,571.8 L1039.5,562.9 L1041.7,560.1 L1050.9,567.4 L1053.1,565.0 L1045.9,555.5 L1048.5,553.0 L1057.2,561.1 L1059.7,559.0 L1053.4,549.0 L1056.3,547.0 L1064.4,555.7 L1067.1,554.0 L1061.7,543.7 L1064.8,542.0 L1072.2,551.4 L1075.2,550.1 L1070.7,539.4 L1074.1,538.2 L1080.8,548.1 L1084.0,547.2 L1080.4,536.4 L1084.1,535.6 L1089.8,545.9 L1093.2,545.4 L1090.7,534.6 L1094.5,534.2 L1099.3,544.8 L1102.9,544.7 L1101.4,534.0 L1105.4,534.1 L1109.2,544.8 L1112.8,545.1 L1112.5,534.7 L1116.5,535.2 L1119.3,546.0 L1123.0,546.7 L1123.7,536.5 L1127.8,537.5 L1129.6,548.2 L1133.3,549.3 L1135.1,539.6 L1139.1,541.0 L1139.8,551.6 L1143.5,553.0 L1146.3,543.9 L1150.4,545.7 L1150.0,556.0 L1153.6,557.8 L1157.5,549.3 L1161.4,551.5 L1160.0,561.4 L1163.5,563.6 L1168.3,555.8 L1172.1,558.4 L1169.6,567.7 L1173.0,570.2 L1178.7,563.3 L1182.4,566.2 L1178.8,574.9 L1182.0,577.7 L1188.7,571.7 L1192.1,575.0 L1187.5,582.9 L1190.5,586.0 L1197.9,581.0 L1201.1,584.5 L1195.6,591.6 L1198.4,594.9 L1206.5,590.9 L1209.4,594.7 L1203.0,600.9 L1205.5,604.4 L1214.2,601.5 L1216.8,605.4 L1209.6,610.8 L1211.8,614.4 L1221.1,612.6 L1223.3,616.7 L1215.4,621.0 L1217.2,624.8 L1226.9,624.0 L1228.8,628.2 L1220.2,631.5 L1221.7,635.3 L1231.7,635.8 L1233.2,640.0 L1224.0,642.2 L1225.2,646.1 L1235.4,647.6 L1236.4,651.9 L1226.9,652.9 L1227.6,656.8 L1237.9,659.4 L1238.6,663.7 L1228.7,663.6 L1229.0,667.4 L1239.3,671.1 L1239.5,675.3 L1229.4,674.1Z" fill="#aaa496"/>
<path d="M1228.2,678.9 L1238.3,683.6 L1238.1,687.6 L1227.8,685.3 L1227.4,688.9 L1237.3,694.7 L1236.7,698.5 L1226.4,695.1 L1225.6,698.6 L1235.2,705.2 L1234.1,708.9 L1223.9,704.4 L1222.8,707.6 L1231.9,715.1 L1230.4,718.5 L1220.4,713.1 L1218.9,716.1 L1227.4,724.3 L1225.6,727.5 L1215.9,721.1 L1214.1,723.7 L1221.9,732.7 L1219.7,735.5 L1210.5,728.2 L1208.3,730.6 L1215.5,740.1 L1212.9,742.6 L1204.2,734.5 L1201.7,736.6 L1208.0,746.6 L1205.1,748.6 L1197.0,739.9 L1194.3,741.6 L1199.7,751.9 L1196.6,753.6 L1189.2,744.2 L1186.2,745.5 L1190.7,756.1 L1187.3,757.4 L1180.6,747.5 L1177.4,748.4 L1181.0,759.2 L1177.3,760.0 L1171.6,749.7 L1168.2,750.2 L1170.7,761.0 L1166.9,761.4 L1162.1,750.8 L1158.5,750.9 L1160.0,761.6 L1156.0,761.5 L1152.2,750.8 L1148.6,750.5 L1148.9,760.9 L1144.9,760.4 L1142.1,749.6 L1138.4,748.9 L1137.7,759.0 L1133.6,758.1 L1131.8,747.4 L1128.1,746.3 L1126.3,755.9 L1122.3,754.5 L1121.6,744.0 L1117.9,742.5 L1115.1,751.7 L1111.0,749.8 L1111.4,739.6 L1107.8,737.8 L1103.9,746.3 L1100.0,744.0 L1101.4,734.2 L1097.9,732.0 L1093.1,739.8 L1089.3,737.2 L1091.8,727.9 L1088.4,725.4 L1082.7,732.3 L1079.0,729.4 L1082.6,720.7 L1079.4,717.9 L1072.7,723.9 L1069.3,720.6 L1073.9,712.7 L1070.9,709.6 L1063.5,714.6 L1060.3,711.1 L1065.8,704.0 L1063.0,700.7 L1054.9,704.7 L1052.0,700.9 L1058.4,694.6 L1055.9,691.2 L1047.2,694.1 L1044.6,690.2 L1051.8,684.8 L1049.6,681.2 L1040.3,683.0 L1038.1,678.9 L1046.0,674.6 L1044.2,670.8 L1034.5,671.6 L1032.6,667.4 L1041.2,664.1 L1039.7,660.2 L1029.7,659.8 L1028.2,655.6 L1037.4,653.4 L1036.2,649.5 L1026.0,648.0 L1025.0,643.7 L1034.5,642.7 L1033.8,638.8 L1023.5,636.2 L1022.8,631.9 L1032.7,632.0 L1032.4,628.2 L1022.1,624.4 L1021.9,620.3 L1032.0,621.5 L1032.0,617.8 L1021.9,613.0 L1022.1,609.0 L1032.4,611.3 L1032.8,607.7 L1022.9,601.9 L1023.5,598.1 L1033.8,601.5 L1034.6,598.1 L1025.0,591.4 L1026.1,587.7 L1036.3,592.2 L1037.4,589.0 L1028.3,581.5 L1029.8,578.1 L1039.8,583.5 L1041.3,580.6 L1032.8,572.3 L1034.6,569.2 L1044.3,575.5 L1046.1,572.9 L1038.3,563.9 L1040.5,561.1 L1049.7,568.4 L1051.9,566.0 L1044.7,556.5 L1047.3,554.0 L1056.0,562.1 L1058.5,560.1 L1052.2,550.0 L1055.1,548.0 L1063.2,556.7 L1065.9,555.1 L1060.5,544.7 L1063.6,543.0 L1071.0,552.4 L1074.0,551.1 L1069.5,540.5 L1072.9,539.2 L1079.6,549.1 L1082.8,548.2 L1079.2,537.4 L1082.9,536.6 L1088.6,546.9 L1092.0,546.4 L1089.5,535.6 L1093.3,535.3 L1098.1,545.8 L1101.7,545.7 L1100.2,535.0 L1104.2,535.1 L1108.0,545.8 L1111.6,546.1 L1111.3,535.7 L1115.3,536.2 L1118.1,547.0 L1121.8,547.7 L1122.5,537.6 L1126.6,538.5 L1128.4,549.3 L1132.1,550.3 L1133.9,540.7 L1137.9,542.1 L1138.6,552.6 L1142.3,554.1 L1145.1,544.9 L1149.2,546.8 L1148.8,557.0 L1152.4,558.8 L1156.3,550.4 L1160.2,552.6 L1158.8,562.4 L1162.3,564.6 L1167.1,556.8 L1170.9,559.4 L1168.4,568.7 L1171.8,571.2 L1177.5,564.3 L1181.2,567.3 L1177.6,575.9 L1180.8,578.7 L1187.5,572.7 L1190.9,576.0 L1186.3,583.9 L1189.3,587.0 L1196.7,582.0 L1199.9,585.5 L1194.4,592.7 L1197.2,595.9 L1205.3,591.9 L1208.2,595.7 L1201.8,602.0 L1204.3,605.5 L1213.0,602.5 L1215.6,606.5 L1208.4,611.8 L1210.6,615.4 L1219.9,613.6 L1222.1,617.7 L1214.2,622.0 L1216.0,625.8 L1225.7,625.1 L1227.6,629.3 L1219.0,632.5 L1220.5,636.4 L1230.5,636.8 L1232.0,641.0 L1222.8,643.2 L1224.0,647.1 L1234.2,648.6 L1235.2,652.9 L1225.7,654.0 L1226.4,657.8 L1236.7,660.5 L1237.4,664.7 L1227.5,664.6 L1227.8,668.4 L1238.1,672.2 L1238.3,676.3 L1228.2,675.1Z" fill="#aaa496"/>
<path d="M1227.0,679.9 L1237.1,684.6 L1236.9,688.7 L1226.6,686.4 L1226.2,690.0 L1236.1,695.7 L1235.5,699.6 L1225.2,696.2 L1224.4,699.6 L1234.0,706.2 L1232.9,709.9 L1222.7,705.5 L1221.6,708.7 L1230.7,716.2 L1229.2,719.6 L1219.2,714.1 L1217.7,717.1 L1226.2,725.4 L1224.4,728.5 L1214.7,722.1 L1212.9,724.8 L1220.7,733.7 L1218.5,736.5 L1209.3,729.3 L1207.1,731.6 L1214.3,741.2 L1211.7,743.6 L1203.0,735.6 L1200.5,737.6 L1206.8,747.6 L1203.9,749.6 L1195.8,740.9 L1193.1,742.6 L1198.5,752.9 L1195.4,754.6 L1188.0,745.2 L1185.0,746.5 L1189.5,757.2 L1186.1,758.4 L1179.4,748.5 L1176.2,749.4 L1179.8,760.2 L1176.1,761.0 L1170.4,750.7 L1167.0,751.3 L1169.5,762.0 L1165.7,762.4 L1160.9,751.8 L1157.3,751.9 L1158.8,762.6 L1154.8,762.5 L1151.0,751.8 L1147.4,751.5 L1147.7,762.0 L1143.7,761.4 L1140.9,750.6 L1137.2,750.0 L1136.5,760.1 L1132.4,759.1 L1130.6,748.4 L1126.9,747.3 L1125.1,757.0 L1121.1,755.6 L1120.4,745.0 L1116.7,743.6 L1113.9,752.7 L1109.8,750.9 L1110.2,740.6 L1106.6,738.8 L1102.7,747.3 L1098.8,745.1 L1100.2,735.2 L1096.7,733.1 L1091.9,740.8 L1088.1,738.2 L1090.6,728.9 L1087.2,726.4 L1081.5,733.3 L1077.8,730.4 L1081.4,721.7 L1078.2,718.9 L1071.5,724.9 L1068.1,721.7 L1072.7,713.7 L1069.7,710.6 L1062.3,715.7 L1059.1,712.2 L1064.6,705.0 L1061.8,701.7 L1053.7,705.7 L1050.8,702.0 L1057.2,695.7 L1054.7,692.2 L1046.0,695.1 L1043.4,691.2 L1050.6,685.8 L1048.4,682.2 L1039.1,684.0 L1036.9,680.0 L1044.8,675.6 L1043.0,671.9 L1033.3,672.6 L1031.4,668.4 L1040.0,665.1 L1038.5,661.3 L1028.5,660.9 L1027.0,656.6 L1036.2,654.4 L1035.0,650.6 L1024.8,649.0 L1023.8,644.8 L1033.3,643.7 L1032.6,639.8 L1022.3,637.2 L1021.6,632.9 L1031.5,633.0 L1031.2,629.2 L1020.9,625.5 L1020.7,621.3 L1030.8,622.5 L1030.8,618.8 L1020.7,614.0 L1020.9,610.0 L1031.2,612.3 L1031.6,608.7 L1021.7,603.0 L1022.3,599.1 L1032.6,602.5 L1033.4,599.1 L1023.8,592.4 L1024.9,588.8 L1035.1,593.2 L1036.2,590.0 L1027.1,582.5 L1028.6,579.1 L1038.6,584.5 L1040.1,581.6 L1031.6,573.3 L1033.4,570.2 L1043.1,576.6 L1044.9,573.9 L1037.1,564.9 L1039.3,562.1 L1048.5,569.4 L1050.7,567.0 L1043.5,557.5 L1046.1,555.1 L1054.8,563.1 L1057.3,561.1 L1051.0,551.1 L1053.9,549.0 L1062.0,557.8 L1064.7,556.1 L1059.3,545.7 L1062.4,544.1 L1069.8,553.4 L1072.8,552.1 L1068.3,541.5 L1071.7,540.3 L1078.4,550.1 L1081.6,549.2 L1078.0,538.5 L1081.7,537.7 L1087.4,547.9 L1090.8,547.4 L1088.3,536.6 L1092.1,536.3 L1096.9,546.8 L1100.5,546.7 L1099.0,536.0 L1103.0,536.1 L1106.8,546.9 L1110.4,547.2 L1110.1,536.7 L1114.1,537.2 L1116.9,548.0 L1120.6,548.7 L1121.3,538.6 L1125.4,539.6 L1127.2,550.3 L1130.9,551.4 L1132.7,541.7 L1136.7,543.1 L1137.4,553.6 L1141.1,555.1 L1143.9,546.0 L1148.0,547.8 L1147.6,558.0 L1151.2,559.9 L1155.1,551.4 L1159.0,553.6 L1157.6,563.4 L1161.1,565.6 L1165.9,557.9 L1169.7,560.5 L1167.2,569.8 L1170.6,572.3 L1176.3,565.4 L1180.0,568.3 L1176.4,577.0 L1179.6,579.8 L1186.3,573.8 L1189.7,577.0 L1185.1,585.0 L1188.1,588.0 L1195.5,583.0 L1198.7,586.5 L1193.2,593.7 L1196.0,597.0 L1204.1,593.0 L1207.0,596.7 L1200.6,603.0 L1203.1,606.5 L1211.8,603.5 L1214.4,607.5 L1207.2,612.8 L1209.4,616.5 L1218.7,614.6 L1220.9,618.7 L1213.0,623.0 L1214.8,626.8 L1224.5,626.1 L1226.4,630.3 L1217.8,633.6 L1219.3,637.4 L1229.3,637.8 L1230.8,642.1 L1221.6,644.2 L1222.8,648.1 L1233.0,649.6 L1234.0,653.9 L1224.5,655.0 L1225.2,658.8 L1235.5,661.5 L1236.2,665.7 L1226.3,665.7 L1226.6,669.5 L1236.9,673.2 L1237.1,677.3 L1227.0,676.2Z" fill="#aaa496"/>
<path d="M1225.8,680.9 L1235.9,685.7 L1235.7,689.7 L1225.4,687.4 L1225.0,691.0 L1234.9,696.7 L1234.3,700.6 L1224.0,697.2 L1223.2,700.6 L1232.8,707.3 L1231.7,710.9 L1221.5,706.5 L1220.4,709.7 L1229.5,717.2 L1228.0,720.6 L1218.0,715.2 L1216.5,718.1 L1225.0,726.4 L1223.2,729.5 L1213.5,723.1 L1211.7,725.8 L1219.5,734.8 L1217.3,737.5 L1208.1,730.3 L1205.9,732.7 L1213.1,742.2 L1210.5,744.6 L1201.8,736.6 L1199.3,738.6 L1205.6,748.6 L1202.7,750.7 L1194.6,741.9 L1191.9,743.6 L1197.3,754.0 L1194.2,755.6 L1186.8,746.3 L1183.8,747.6 L1188.3,758.2 L1184.9,759.4 L1178.2,749.6 L1175.0,750.5 L1178.6,761.2 L1174.9,762.0 L1169.2,751.8 L1165.8,752.3 L1168.3,763.1 L1164.5,763.4 L1159.7,752.9 L1156.1,753.0 L1157.6,763.6 L1153.6,763.5 L1149.8,752.8 L1146.2,752.5 L1146.5,763.0 L1142.5,762.4 L1139.7,751.7 L1136.0,751.0 L1135.3,761.1 L1131.2,760.1 L1129.4,749.4 L1125.7,748.3 L1123.9,758.0 L1119.9,756.6 L1119.2,746.1 L1115.5,744.6 L1112.7,753.7 L1108.6,751.9 L1109.0,741.7 L1105.4,739.8 L1101.5,748.3 L1097.6,746.1 L1099.0,736.3 L1095.5,734.1 L1090.7,741.8 L1086.9,739.2 L1089.4,729.9 L1086.0,727.4 L1080.3,734.3 L1076.6,731.4 L1080.2,722.7 L1077.0,719.9 L1070.3,725.9 L1066.9,722.7 L1071.5,714.7 L1068.5,711.7 L1061.1,716.7 L1057.9,713.2 L1063.4,706.0 L1060.6,702.7 L1052.5,706.7 L1049.6,703.0 L1056.0,696.7 L1053.5,693.2 L1044.8,696.1 L1042.2,692.2 L1049.4,686.9 L1047.2,683.2 L1037.9,685.1 L1035.7,681.0 L1043.6,676.6 L1041.8,672.9 L1032.1,673.6 L1030.2,669.4 L1038.8,666.1 L1037.3,662.3 L1027.3,661.9 L1025.8,657.6 L1035.0,655.4 L1033.8,651.6 L1023.6,650.0 L1022.6,645.8 L1032.1,644.7 L1031.4,640.8 L1021.1,638.2 L1020.4,634.0 L1030.3,634.0 L1030.0,630.2 L1019.7,626.5 L1019.5,622.3 L1029.6,623.5 L1029.6,619.8 L1019.5,615.1 L1019.7,611.0 L1030.0,613.3 L1030.4,609.7 L1020.5,604.0 L1021.1,600.1 L1031.4,603.5 L1032.2,600.1 L1022.6,593.4 L1023.7,589.8 L1033.9,594.2 L1035.0,591.0 L1025.9,583.5 L1027.4,580.1 L1037.4,585.6 L1038.9,582.6 L1030.4,574.3 L1032.2,571.2 L1041.9,577.6 L1043.7,574.9 L1035.9,566.0 L1038.1,563.2 L1047.3,570.4 L1049.5,568.1 L1042.3,558.5 L1044.9,556.1 L1053.6,564.1 L1056.1,562.1 L1049.8,552.1 L1052.7,550.0 L1060.8,558.8 L1063.5,557.1 L1058.1,546.7 L1061.2,545.1 L1068.6,554.5 L1071.6,553.1 L1067.1,542.5 L1070.5,541.3 L1077.2,551.2 L1080.4,550.2 L1076.8,539.5 L1080.5,538.7 L1086.2,549.0 L1089.6,548.4 L1087.1,537.7 L1090.9,537.3 L1095.7,547.9 L1099.3,547.7 L1097.8,537.1 L1101.8,537.2 L1105.6,547.9 L1109.2,548.2 L1108.9,537.7 L1112.9,538.3 L1115.7,549.0 L1119.4,549.7 L1120.1,539.6 L1124.2,540.6 L1126.0,551.3 L1129.7,552.4 L1131.5,542.7 L1135.5,544.1 L1136.2,554.7 L1139.9,556.1 L1142.7,547.0 L1146.8,548.8 L1146.4,559.0 L1150.0,560.9 L1153.9,552.4 L1157.8,554.6 L1156.4,564.4 L1159.9,566.6 L1164.7,558.9 L1168.5,561.5 L1166.0,570.8 L1169.4,573.3 L1175.1,566.4 L1178.8,569.3 L1175.2,578.0 L1178.4,580.8 L1185.1,574.8 L1188.5,578.0 L1183.9,586.0 L1186.9,589.1 L1194.3,584.0 L1197.5,587.5 L1192.0,594.7 L1194.8,598.0 L1202.9,594.0 L1205.8,597.7 L1199.4,604.0 L1201.9,607.5 L1210.6,604.6 L1213.2,608.5 L1206.0,613.8 L1208.2,617.5 L1217.5,615.6 L1219.7,619.7 L1211.8,624.1 L1213.6,627.8 L1223.3,627.1 L1225.2,631.3 L1216.6,634.6 L1218.1,638.4 L1228.1,638.8 L1229.6,643.1 L1220.4,645.3 L1221.6,649.1 L1231.8,650.7 L1232.8,654.9 L1223.3,656.0 L1224.0,659.9 L1234.3,662.5 L1235.0,666.7 L1225.1,666.7 L1225.4,670.5 L1235.7,674.2 L1235.9,678.4 L1225.8,677.2Z" fill="#aaa496"/>
<path d="M1224.6,681.9 L1234.7,686.7 L1234.5,690.7 L1224.2,688.4 L1223.8,692.0 L1233.7,697.7 L1233.1,701.6 L1222.8,698.2 L1222.0,701.6 L1231.6,708.3 L1230.5,711.9 L1220.3,707.5 L1219.2,710.7 L1228.3,718.2 L1226.8,721.6 L1216.8,716.2 L1215.3,719.1 L1223.8,727.4 L1222.0,730.5 L1212.3,724.1 L1210.5,726.8 L1218.3,735.8 L1216.1,738.6 L1206.9,731.3 L1204.7,733.7 L1211.9,743.2 L1209.3,745.6 L1200.6,737.6 L1198.1,739.6 L1204.4,749.6 L1201.5,751.7 L1193.4,742.9 L1190.7,744.6 L1196.1,755.0 L1193.0,756.6 L1185.6,747.3 L1182.6,748.6 L1187.1,759.2 L1183.7,760.4 L1177.0,750.6 L1173.8,751.5 L1177.4,762.3 L1173.7,763.0 L1168.0,752.8 L1164.6,753.3 L1167.1,764.1 L1163.3,764.4 L1158.5,753.9 L1154.9,754.0 L1156.4,764.7 L1152.4,764.6 L1148.6,753.8 L1145.0,753.6 L1145.3,764.0 L1141.3,763.5 L1138.5,752.7 L1134.8,752.0 L1134.1,762.1 L1130.0,761.1 L1128.2,750.4 L1124.5,749.3 L1122.7,759.0 L1118.7,757.6 L1118.0,747.1 L1114.3,745.6 L1111.5,754.7 L1107.4,752.9 L1107.8,742.7 L1104.2,740.9 L1100.3,749.3 L1096.4,747.1 L1097.8,737.3 L1094.3,735.1 L1089.5,742.8 L1085.7,740.3 L1088.2,731.0 L1084.8,728.5 L1079.1,735.4 L1075.4,732.4 L1079.0,723.7 L1075.8,720.9 L1069.1,726.9 L1065.7,723.7 L1070.3,715.7 L1067.3,712.7 L1059.9,717.7 L1056.7,714.2 L1062.2,707.0 L1059.4,703.7 L1051.3,707.8 L1048.4,704.0 L1054.8,697.7 L1052.3,694.2 L1043.6,697.2 L1041.0,693.2 L1048.2,687.9 L1046.0,684.3 L1036.7,686.1 L1034.5,682.0 L1042.4,677.7 L1040.6,673.9 L1030.9,674.6 L1029.0,670.4 L1037.6,667.2 L1036.1,663.3 L1026.1,662.9 L1024.6,658.7 L1033.8,656.5 L1032.6,652.6 L1022.4,651.1 L1021.4,646.8 L1030.9,645.7 L1030.2,641.9 L1019.9,639.2 L1019.2,635.0 L1029.1,635.0 L1028.8,631.2 L1018.5,627.5 L1018.3,623.4 L1028.4,624.5 L1028.4,620.8 L1018.3,616.1 L1018.5,612.0 L1028.8,614.3 L1029.2,610.8 L1019.3,605.0 L1019.9,601.2 L1030.2,604.5 L1031.0,601.1 L1021.4,594.5 L1022.5,590.8 L1032.7,595.3 L1033.8,592.1 L1024.7,584.5 L1026.2,581.1 L1036.2,586.6 L1037.7,583.6 L1029.2,575.3 L1031.0,572.2 L1040.7,578.6 L1042.5,575.9 L1034.7,567.0 L1036.9,564.2 L1046.1,571.5 L1048.3,569.1 L1041.1,559.5 L1043.7,557.1 L1052.4,565.2 L1054.9,563.1 L1048.6,553.1 L1051.5,551.1 L1059.6,559.8 L1062.3,558.1 L1056.9,547.8 L1060.0,546.1 L1067.4,555.5 L1070.4,554.2 L1065.9,543.5 L1069.3,542.3 L1076.0,552.2 L1079.2,551.3 L1075.6,540.5 L1079.3,539.7 L1085.0,550.0 L1088.4,549.5 L1085.9,538.7 L1089.7,538.3 L1094.5,548.9 L1098.1,548.8 L1096.6,538.1 L1100.6,538.2 L1104.4,548.9 L1108.0,549.2 L1107.7,538.8 L1111.7,539.3 L1114.5,550.1 L1118.2,550.8 L1118.9,540.6 L1123.0,541.6 L1124.8,552.3 L1128.5,553.4 L1130.3,543.7 L1134.3,545.1 L1135.0,555.7 L1138.7,557.1 L1141.5,548.0 L1145.6,549.8 L1145.2,560.1 L1148.8,561.9 L1152.7,553.4 L1156.6,555.6 L1155.2,565.5 L1158.7,567.6 L1163.5,559.9 L1167.3,562.5 L1164.8,571.8 L1168.2,574.3 L1173.9,567.4 L1177.6,570.3 L1174.0,579.0 L1177.2,581.8 L1183.9,575.8 L1187.3,579.0 L1182.7,587.0 L1185.7,590.1 L1193.1,585.0 L1196.3,588.6 L1190.8,595.7 L1193.6,599.0 L1201.7,595.0 L1204.6,598.8 L1198.2,605.0 L1200.7,608.5 L1209.4,605.6 L1212.0,609.5 L1204.8,614.9 L1207.0,618.5 L1216.3,616.7 L1218.5,620.8 L1210.6,625.1 L1212.4,628.9 L1222.1,628.1 L1224.0,632.3 L1215.4,635.6 L1216.9,639.4 L1226.9,639.8 L1228.4,644.1 L1219.2,646.3 L1220.4,650.2 L1230.6,651.7 L1231.6,656.0 L1222.1,657.0 L1222.8,660.9 L1233.1,663.5 L1233.8,667.8 L1223.9,667.7 L1224.2,671.5 L1234.5,675.2 L1234.7,679.4 L1224.6,678.2Z" fill="#aaa496"/>
<path d="M1223.4,683.0 L1233.5,687.7 L1233.3,691.7 L1223.0,689.4 L1222.6,693.0 L1232.5,698.8 L1231.9,702.6 L1221.6,699.2 L1220.8,702.7 L1230.4,709.3 L1229.3,713.0 L1219.1,708.5 L1218.0,711.7 L1227.1,719.2 L1225.6,722.6 L1215.6,717.2 L1214.1,720.2 L1222.6,728.4 L1220.8,731.5 L1211.1,725.2 L1209.3,727.8 L1217.1,736.8 L1214.9,739.6 L1205.7,732.3 L1203.5,734.7 L1210.7,744.2 L1208.1,746.7 L1199.4,738.6 L1196.9,740.7 L1203.2,750.7 L1200.3,752.7 L1192.2,744.0 L1189.5,745.6 L1194.9,756.0 L1191.8,757.7 L1184.4,748.3 L1181.4,749.6 L1185.9,760.2 L1182.5,761.5 L1175.8,751.6 L1172.6,752.5 L1176.2,763.3 L1172.5,764.1 L1166.8,753.8 L1163.4,754.3 L1165.9,765.1 L1162.1,765.5 L1157.3,754.9 L1153.7,755.0 L1155.2,765.7 L1151.2,765.6 L1147.4,754.9 L1143.8,754.6 L1144.1,765.0 L1140.1,764.5 L1137.3,753.7 L1133.6,753.0 L1132.9,763.1 L1128.8,762.2 L1127.0,751.5 L1123.3,750.4 L1121.5,760.0 L1117.5,758.6 L1116.8,748.1 L1113.1,746.6 L1110.3,755.8 L1106.2,753.9 L1106.6,743.7 L1103.0,741.9 L1099.1,750.4 L1095.2,748.1 L1096.6,738.3 L1093.1,736.1 L1088.3,743.9 L1084.5,741.3 L1087.0,732.0 L1083.6,729.5 L1077.9,736.4 L1074.2,733.5 L1077.8,724.8 L1074.6,722.0 L1067.9,728.0 L1064.5,724.7 L1069.1,716.8 L1066.1,713.7 L1058.7,718.7 L1055.5,715.2 L1061.0,708.1 L1058.2,704.8 L1050.1,708.8 L1047.2,705.0 L1053.6,698.7 L1051.1,695.3 L1042.4,698.2 L1039.8,694.3 L1047.0,688.9 L1044.8,685.3 L1035.5,687.1 L1033.3,683.0 L1041.2,678.7 L1039.4,674.9 L1029.7,675.7 L1027.8,671.5 L1036.4,668.2 L1034.9,664.3 L1024.9,663.9 L1023.4,659.7 L1032.6,657.5 L1031.4,653.6 L1021.2,652.1 L1020.2,647.8 L1029.7,646.8 L1029.0,642.9 L1018.7,640.3 L1018.0,636.0 L1027.9,636.1 L1027.6,632.3 L1017.3,628.5 L1017.1,624.4 L1027.2,625.6 L1027.2,621.9 L1017.1,617.1 L1017.3,613.1 L1027.6,615.4 L1028.0,611.8 L1018.1,606.0 L1018.7,602.2 L1029.0,605.6 L1029.8,602.2 L1020.2,595.5 L1021.3,591.8 L1031.5,596.3 L1032.6,593.1 L1023.5,585.6 L1025.0,582.2 L1035.0,587.6 L1036.5,584.6 L1028.0,576.4 L1029.8,573.3 L1039.5,579.6 L1041.3,577.0 L1033.5,568.0 L1035.7,565.2 L1044.9,572.5 L1047.1,570.1 L1039.9,560.6 L1042.5,558.1 L1051.2,566.2 L1053.7,564.1 L1047.4,554.1 L1050.3,552.1 L1058.4,560.8 L1061.1,559.2 L1055.7,548.8 L1058.8,547.1 L1066.2,556.5 L1069.2,555.2 L1064.7,544.6 L1068.1,543.3 L1074.8,553.2 L1078.0,552.3 L1074.4,541.5 L1078.1,540.7 L1083.8,551.0 L1087.2,550.5 L1084.7,539.7 L1088.5,539.4 L1093.3,549.9 L1096.9,549.8 L1095.4,539.1 L1099.4,539.2 L1103.2,549.9 L1106.8,550.2 L1106.5,539.8 L1110.5,540.3 L1113.3,551.1 L1117.0,551.8 L1117.7,541.7 L1121.8,542.6 L1123.6,553.4 L1127.3,554.4 L1129.1,544.8 L1133.1,546.2 L1133.8,556.7 L1137.5,558.2 L1140.3,549.0 L1144.4,550.9 L1144.0,561.1 L1147.6,562.9 L1151.5,554.5 L1155.4,556.7 L1154.0,566.5 L1157.5,568.7 L1162.3,560.9 L1166.1,563.5 L1163.6,572.8 L1167.0,575.3 L1172.7,568.4 L1176.4,571.4 L1172.8,580.0 L1176.0,582.8 L1182.7,576.8 L1186.1,580.1 L1181.5,588.0 L1184.5,591.1 L1191.9,586.1 L1195.1,589.6 L1189.6,596.8 L1192.4,600.0 L1200.5,596.0 L1203.4,599.8 L1197.0,606.1 L1199.5,609.6 L1208.2,606.6 L1210.8,610.6 L1203.6,615.9 L1205.8,619.5 L1215.1,617.7 L1217.3,621.8 L1209.4,626.1 L1211.2,629.9 L1220.9,629.2 L1222.8,633.4 L1214.2,636.6 L1215.7,640.5 L1225.7,640.9 L1227.2,645.1 L1218.0,647.3 L1219.2,651.2 L1229.4,652.7 L1230.4,657.0 L1220.9,658.1 L1221.6,661.9 L1231.9,664.6 L1232.6,668.8 L1222.7,668.7 L1223.0,672.5 L1233.3,676.3 L1233.5,680.4 L1223.4,679.2Z" fill="#aaa496"/>
<path d="M1222.2,684.0 L1232.3,688.7 L1232.1,692.8 L1221.8,690.5 L1221.4,694.0 L1231.3,699.8 L1230.7,703.7 L1220.4,700.3 L1219.6,703.7 L1229.2,710.3 L1228.1,714.0 L1217.9,709.6 L1216.8,712.8 L1225.9,720.3 L1224.4,723.7 L1214.4,718.2 L1212.9,721.2 L1221.4,729.5 L1219.6,732.6 L1209.9,726.2 L1208.1,728.9 L1215.9,737.8 L1213.7,740.6 L1204.5,733.4 L1202.3,735.7 L1209.5,745.3 L1206.9,747.7 L1198.2,739.6 L1195.7,741.7 L1202.0,751.7 L1199.1,753.7 L1191.0,745.0 L1188.3,746.7 L1193.7,757.0 L1190.6,758.7 L1183.2,749.3 L1180.2,750.6 L1184.7,761.3 L1181.3,762.5 L1174.6,752.6 L1171.4,753.5 L1175.0,764.3 L1171.3,765.1 L1165.6,754.8 L1162.2,755.4 L1164.7,766.1 L1160.9,766.5 L1156.1,755.9 L1152.5,756.0 L1154.0,766.7 L1150.0,766.6 L1146.2,755.9 L1142.6,755.6 L1142.9,766.1 L1138.9,765.5 L1136.1,754.7 L1132.4,754.1 L1131.7,764.2 L1127.6,763.2 L1125.8,752.5 L1122.1,751.4 L1120.3,761.1 L1116.3,759.7 L1115.6,749.1 L1111.9,747.7 L1109.1,756.8 L1105.0,755.0 L1105.4,744.7 L1101.8,742.9 L1097.9,751.4 L1094.0,749.2 L1095.4,739.3 L1091.9,737.2 L1087.1,744.9 L1083.3,742.3 L1085.8,733.0 L1082.4,730.5 L1076.7,737.4 L1073.0,734.5 L1076.6,725.8 L1073.4,723.0 L1066.7,729.0 L1063.3,725.8 L1067.9,717.8 L1064.9,714.7 L1057.5,719.8 L1054.3,716.3 L1059.8,709.1 L1057.0,705.8 L1048.9,709.8 L1046.0,706.1 L1052.4,699.8 L1049.9,696.3 L1041.2,699.2 L1038.6,695.3 L1045.8,689.9 L1043.6,686.3 L1034.3,688.1 L1032.1,684.0 L1040.0,679.7 L1038.2,676.0 L1028.5,676.7 L1026.6,672.5 L1035.2,669.2 L1033.7,665.4 L1023.7,665.0 L1022.2,660.7 L1031.4,658.5 L1030.2,654.6 L1020.0,653.1 L1019.0,648.8 L1028.5,647.8 L1027.8,643.9 L1017.5,641.3 L1016.8,637.0 L1026.7,637.1 L1026.4,633.3 L1016.1,629.6 L1015.9,625.4 L1026.0,626.6 L1026.0,622.9 L1015.9,618.1 L1016.1,614.1 L1026.4,616.4 L1026.8,612.8 L1016.9,607.1 L1017.5,603.2 L1027.8,606.6 L1028.6,603.2 L1019.0,596.5 L1020.1,592.9 L1030.3,597.3 L1031.4,594.1 L1022.3,586.6 L1023.8,583.2 L1033.8,588.6 L1035.3,585.7 L1026.8,577.4 L1028.6,574.3 L1038.3,580.7 L1040.1,578.0 L1032.3,569.0 L1034.5,566.2 L1043.7,573.5 L1045.9,571.1 L1038.7,561.6 L1041.3,559.2 L1050.0,567.2 L1052.5,565.2 L1046.2,555.2 L1049.1,553.1 L1057.2,561.9 L1059.9,560.2 L1054.5,549.8 L1057.6,548.2 L1065.0,557.5 L1068.0,556.2 L1063.5,545.6 L1066.9,544.4 L1073.6,554.2 L1076.8,553.3 L1073.2,542.6 L1076.9,541.8 L1082.6,552.0 L1086.0,551.5 L1083.5,540.7 L1087.3,540.4 L1092.1,550.9 L1095.7,550.8 L1094.2,540.1 L1098.2,540.2 L1102.0,551.0 L1105.6,551.2 L1105.3,540.8 L1109.3,541.3 L1112.1,552.1 L1115.8,552.8 L1116.5,542.7 L1120.6,543.7 L1122.4,554.4 L1126.1,555.5 L1127.9,545.8 L1131.9,547.2 L1132.6,557.7 L1136.3,559.2 L1139.1,550.1 L1143.2,551.9 L1142.8,562.1 L1146.4,564.0 L1150.3,555.5 L1154.2,557.7 L1152.8,567.5 L1156.3,569.7 L1161.1,562.0 L1164.9,564.5 L1162.4,573.9 L1165.8,576.4 L1171.5,569.5 L1175.2,572.4 L1171.6,581.1 L1174.8,583.9 L1181.5,577.9 L1184.9,581.1 L1180.3,589.1 L1183.3,592.1 L1190.7,587.1 L1193.9,590.6 L1188.4,597.8 L1191.2,601.1 L1199.3,597.1 L1202.2,600.8 L1195.8,607.1 L1198.3,610.6 L1207.0,607.6 L1209.6,611.6 L1202.4,616.9 L1204.6,620.6 L1213.9,618.7 L1216.1,622.8 L1208.2,627.1 L1210.0,630.9 L1219.7,630.2 L1221.6,634.4 L1213.0,637.7 L1214.5,641.5 L1224.5,641.9 L1226.0,646.2 L1216.8,648.3 L1218.0,652.2 L1228.2,653.7 L1229.2,658.0 L1219.7,659.1 L1220.4,662.9 L1230.7,665.6 L1231.4,669.8 L1221.5,669.8 L1221.8,673.6 L1232.1,677.3 L1232.3,681.4 L1222.2,680.3Z" fill="#aaa496"/>
<path d="M1221.0,685.0 L1231.1,689.8 L1230.9,693.8 L1220.6,691.5 L1220.2,695.1 L1230.1,700.8 L1229.5,704.7 L1219.2,701.3 L1218.4,704.7 L1228.0,711.4 L1226.9,715.0 L1216.7,710.6 L1215.6,713.8 L1224.7,721.3 L1223.2,724.7 L1213.2,719.3 L1211.7,722.2 L1220.2,730.5 L1218.4,733.6 L1208.7,727.2 L1206.9,729.9 L1214.7,738.8 L1212.5,741.6 L1203.3,734.4 L1201.1,736.8 L1208.3,746.3 L1205.7,748.7 L1197.0,740.7 L1194.5,742.7 L1200.8,752.7 L1197.9,754.8 L1189.8,746.0 L1187.1,747.7 L1192.5,758.1 L1189.4,759.7 L1182.0,750.4 L1179.0,751.7 L1183.5,762.3 L1180.1,763.5 L1173.4,753.6 L1170.2,754.6 L1173.8,765.3 L1170.1,766.1 L1164.4,755.9 L1161.0,756.4 L1163.5,767.1 L1159.7,767.5 L1154.9,756.9 L1151.3,757.1 L1152.8,767.7 L1148.8,767.6 L1145.0,756.9 L1141.4,756.6 L1141.7,767.1 L1137.7,766.5 L1134.9,755.8 L1131.2,755.1 L1130.5,765.2 L1126.4,764.2 L1124.6,753.5 L1120.9,752.4 L1119.1,762.1 L1115.1,760.7 L1114.4,750.2 L1110.7,748.7 L1107.9,757.8 L1103.8,756.0 L1104.2,745.8 L1100.6,743.9 L1096.7,752.4 L1092.8,750.2 L1094.2,740.4 L1090.7,738.2 L1085.9,745.9 L1082.1,743.3 L1084.6,734.0 L1081.2,731.5 L1075.5,738.4 L1071.8,735.5 L1075.4,726.8 L1072.2,724.0 L1065.5,730.0 L1062.1,726.8 L1066.7,718.8 L1063.7,715.8 L1056.3,720.8 L1053.1,717.3 L1058.6,710.1 L1055.8,706.8 L1047.7,710.8 L1044.8,707.1 L1051.2,700.8 L1048.7,697.3 L1040.0,700.2 L1037.4,696.3 L1044.6,691.0 L1042.4,687.3 L1033.1,689.2 L1030.9,685.1 L1038.8,680.7 L1037.0,677.0 L1027.3,677.7 L1025.4,673.5 L1034.0,670.2 L1032.5,666.4 L1022.5,666.0 L1021.0,661.7 L1030.2,659.5 L1029.0,655.7 L1018.8,654.1 L1017.8,649.9 L1027.3,648.8 L1026.6,644.9 L1016.3,642.3 L1015.6,638.1 L1025.5,638.1 L1025.2,634.3 L1014.9,630.6 L1014.7,626.4 L1024.8,627.6 L1024.8,623.9 L1014.7,619.1 L1014.9,615.1 L1025.2,617.4 L1025.6,613.8 L1015.7,608.1 L1016.3,604.2 L1026.6,607.6 L1027.4,604.2 L1017.8,597.5 L1018.9,593.9 L1029.1,598.3 L1030.2,595.1 L1021.1,587.6 L1022.6,584.2 L1032.6,589.7 L1034.1,586.7 L1025.6,578.4 L1027.4,575.3 L1037.1,581.7 L1038.9,579.0 L1031.1,570.1 L1033.3,567.3 L1042.5,574.5 L1044.7,572.2 L1037.5,562.6 L1040.1,560.2 L1048.8,568.2 L1051.3,566.2 L1045.0,556.2 L1047.9,554.1 L1056.0,562.9 L1058.7,561.2 L1053.3,550.8 L1056.4,549.2 L1063.8,558.5 L1066.8,557.2 L1062.3,546.6 L1065.7,545.4 L1072.4,555.3 L1075.6,554.3 L1072.0,543.6 L1075.7,542.8 L1081.4,553.1 L1084.8,552.5 L1082.3,541.8 L1086.1,541.4 L1090.9,552.0 L1094.5,551.8 L1093.0,541.2 L1097.0,541.3 L1100.8,552.0 L1104.4,552.3 L1104.1,541.8 L1108.1,542.4 L1110.9,553.1 L1114.6,553.8 L1115.3,543.7 L1119.4,544.7 L1121.2,555.4 L1124.9,556.5 L1126.7,546.8 L1130.7,548.2 L1131.4,558.7 L1135.1,560.2 L1137.9,551.1 L1142.0,552.9 L1141.6,563.1 L1145.2,565.0 L1149.1,556.5 L1153.0,558.7 L1151.6,568.5 L1155.1,570.7 L1159.9,563.0 L1163.7,565.6 L1161.2,574.9 L1164.6,577.4 L1170.3,570.5 L1174.0,573.4 L1170.4,582.1 L1173.6,584.9 L1180.3,578.9 L1183.7,582.1 L1179.1,590.1 L1182.1,593.1 L1189.5,588.1 L1192.7,591.6 L1187.2,598.8 L1190.0,602.1 L1198.1,598.1 L1201.0,601.8 L1194.6,608.1 L1197.1,611.6 L1205.8,608.7 L1208.4,612.6 L1201.2,617.9 L1203.4,621.6 L1212.7,619.7 L1214.9,623.8 L1207.0,628.2 L1208.8,631.9 L1218.5,631.2 L1220.4,635.4 L1211.8,638.7 L1213.3,642.5 L1223.3,642.9 L1224.8,647.2 L1215.6,649.4 L1216.8,653.2 L1227.0,654.8 L1228.0,659.0 L1218.5,660.1 L1219.2,664.0 L1229.5,666.6 L1230.2,670.8 L1220.3,670.8 L1220.6,674.6 L1230.9,678.3 L1231.1,682.5 L1221.0,681.3Z" fill="#aaa496"/>
<path d="M1219.8,686.0 L1229.9,690.8 L1229.7,694.8 L1219.4,692.5 L1219.0,696.1 L1228.9,701.8 L1228.3,705.7 L1218.0,702.3 L1217.2,705.7 L1226.8,712.4 L1225.7,716.0 L1215.5,711.6 L1214.4,714.8 L1223.5,722.3 L1222.0,725.7 L1212.0,720.3 L1210.5,723.2 L1219.0,731.5 L1217.2,734.6 L1207.5,728.2 L1205.7,730.9 L1213.5,739.9 L1211.3,742.7 L1202.1,735.4 L1199.9,737.8 L1207.1,747.3 L1204.5,749.7 L1195.8,741.7 L1193.3,743.7 L1199.6,753.7 L1196.7,755.8 L1188.6,747.0 L1185.9,748.7 L1191.3,759.1 L1188.2,760.7 L1180.8,751.4 L1177.8,752.7 L1182.3,763.3 L1178.9,764.5 L1172.2,754.7 L1169.0,755.6 L1172.6,766.3 L1168.9,767.1 L1163.2,756.9 L1159.8,757.4 L1162.3,768.2 L1158.5,768.5 L1153.7,758.0 L1150.1,758.1 L1151.6,768.8 L1147.6,768.7 L1143.8,757.9 L1140.2,757.7 L1140.5,768.1 L1136.5,767.6 L1133.7,756.8 L1130.0,756.1 L1129.3,766.2 L1125.2,765.2 L1123.4,754.5 L1119.7,753.4 L1117.9,763.1 L1113.9,761.7 L1113.2,751.2 L1109.5,749.7 L1106.7,758.8 L1102.6,757.0 L1103.0,746.8 L1099.4,745.0 L1095.5,753.4 L1091.6,751.2 L1093.0,741.4 L1089.5,739.2 L1084.7,746.9 L1080.9,744.4 L1083.4,735.0 L1080.0,732.5 L1074.3,739.5 L1070.6,736.5 L1074.2,727.8 L1071.0,725.0 L1064.3,731.0 L1060.9,727.8 L1065.5,719.8 L1062.5,716.8 L1055.1,721.8 L1051.9,718.3 L1057.4,711.1 L1054.6,707.8 L1046.5,711.8 L1043.6,708.1 L1050.0,701.8 L1047.5,698.3 L1038.8,701.3 L1036.2,697.3 L1043.4,692.0 L1041.2,688.3 L1031.9,690.2 L1029.7,686.1 L1037.6,681.8 L1035.8,678.0 L1026.1,678.7 L1024.2,674.5 L1032.8,671.2 L1031.3,667.4 L1021.3,667.0 L1019.8,662.8 L1029.0,660.6 L1027.8,656.7 L1017.6,655.2 L1016.6,650.9 L1026.1,649.8 L1025.4,646.0 L1015.1,643.3 L1014.4,639.1 L1024.3,639.1 L1024.0,635.3 L1013.7,631.6 L1013.5,627.5 L1023.6,628.6 L1023.6,624.9 L1013.5,620.2 L1013.7,616.1 L1024.0,618.4 L1024.4,614.9 L1014.5,609.1 L1015.1,605.3 L1025.4,608.6 L1026.2,605.2 L1016.6,598.6 L1017.7,594.9 L1027.9,599.3 L1029.0,596.1 L1019.9,588.6 L1021.4,585.2 L1031.4,590.7 L1032.9,587.7 L1024.4,579.4 L1026.2,576.3 L1035.9,582.7 L1037.7,580.0 L1029.9,571.1 L1032.1,568.3 L1041.3,575.5 L1043.5,573.2 L1036.3,563.6 L1038.9,561.2 L1047.6,569.3 L1050.1,567.2 L1043.8,557.2 L1046.7,555.2 L1054.8,563.9 L1057.5,562.2 L1052.1,551.9 L1055.2,550.2 L1062.6,559.6 L1065.6,558.3 L1061.1,547.6 L1064.5,546.4 L1071.2,556.3 L1074.4,555.4 L1070.8,544.6 L1074.5,543.8 L1080.2,554.1 L1083.6,553.6 L1081.1,542.8 L1084.9,542.4 L1089.7,553.0 L1093.3,552.9 L1091.8,542.2 L1095.8,542.3 L1099.6,553.0 L1103.2,553.3 L1102.9,542.8 L1106.9,543.4 L1109.7,554.2 L1113.4,554.9 L1114.1,544.7 L1118.2,545.7 L1120.0,556.4 L1123.7,557.5 L1125.5,547.8 L1129.5,549.2 L1130.2,559.8 L1133.9,561.2 L1136.7,552.1 L1140.8,553.9 L1140.4,564.2 L1144.0,566.0 L1147.9,557.5 L1151.8,559.7 L1150.4,569.6 L1153.9,571.7 L1158.7,564.0 L1162.5,566.6 L1160.0,575.9 L1163.4,578.4 L1169.1,571.5 L1172.8,574.4 L1169.2,583.1 L1172.4,585.9 L1179.1,579.9 L1182.5,583.1 L1177.9,591.1 L1180.9,594.2 L1188.3,589.1 L1191.5,592.7 L1186.0,599.8 L1188.8,603.1 L1196.9,599.1 L1199.8,602.8 L1193.4,609.1 L1195.9,612.6 L1204.6,609.7 L1207.2,613.6 L1200.0,619.0 L1202.2,622.6 L1211.5,620.8 L1213.7,624.9 L1205.8,629.2 L1207.6,632.9 L1217.3,632.2 L1219.2,636.4 L1210.6,639.7 L1212.1,643.5 L1222.1,643.9 L1223.6,648.2 L1214.4,650.4 L1215.6,654.3 L1225.8,655.8 L1226.8,660.1 L1217.3,661.1 L1218.0,665.0 L1228.3,667.6 L1229.0,671.9 L1219.1,671.8 L1219.4,675.6 L1229.7,679.3 L1229.9,683.5 L1219.8,682.3Z" fill="#aaa496"/>
<path d="M1218.6,687.0 L1228.7,691.8 L1228.5,695.8 L1218.2,693.5 L1217.8,697.1 L1227.7,702.9 L1227.1,706.7 L1216.8,703.3 L1216.0,706.7 L1225.6,713.4 L1224.5,717.1 L1214.3,712.6 L1213.2,715.8 L1222.3,723.3 L1220.8,726.7 L1210.8,721.3 L1209.3,724.3 L1217.8,732.5 L1216.0,735.6 L1206.3,729.3 L1204.5,731.9 L1212.3,740.9 L1210.1,743.7 L1200.9,736.4 L1198.7,738.8 L1205.9,748.3 L1203.3,750.8 L1194.6,742.7 L1192.1,744.8 L1198.4,754.8 L1195.5,756.8 L1187.4,748.1 L1184.7,749.7 L1190.1,760.1 L1187.0,761.8 L1179.6,752.4 L1176.6,753.7 L1181.1,764.3 L1177.7,765.6 L1171.0,755.7 L1167.8,756.6 L1171.4,767.4 L1167.7,768.2 L1162.0,757.9 L1158.6,758.4 L1161.1,769.2 L1157.3,769.5 L1152.5,759.0 L1148.9,759.1 L1150.4,769.8 L1146.4,769.7 L1142.6,759.0 L1139.0,758.7 L1139.3,769.1 L1135.3,768.6 L1132.5,757.8 L1128.8,757.1 L1128.1,767.2 L1124.0,766.3 L1122.2,755.6 L1118.5,754.5 L1116.7,764.1 L1112.7,762.7 L1112.0,752.2 L1108.3,750.7 L1105.5,759.9 L1101.4,758.0 L1101.8,747.8 L1098.2,746.0 L1094.3,754.4 L1090.4,752.2 L1091.8,742.4 L1088.3,740.2 L1083.5,748.0 L1079.7,745.4 L1082.2,736.1 L1078.8,733.6 L1073.1,740.5 L1069.4,737.6 L1073.0,728.9 L1069.8,726.1 L1063.1,732.1 L1059.7,728.8 L1064.3,720.9 L1061.3,717.8 L1053.9,722.8 L1050.7,719.3 L1056.2,712.2 L1053.4,708.9 L1045.3,712.9 L1042.4,709.1 L1048.8,702.8 L1046.3,699.4 L1037.6,702.3 L1035.0,698.4 L1042.2,693.0 L1040.0,689.4 L1030.7,691.2 L1028.5,687.1 L1036.4,682.8 L1034.6,679.0 L1024.9,679.7 L1023.0,675.6 L1031.6,672.3 L1030.1,668.4 L1020.1,668.0 L1018.6,663.8 L1027.8,661.6 L1026.6,657.7 L1016.4,656.2 L1015.4,651.9 L1024.9,650.8 L1024.2,647.0 L1013.9,644.3 L1013.2,640.1 L1023.1,640.2 L1022.8,636.4 L1012.5,632.6 L1012.3,628.5 L1022.4,629.7 L1022.4,626.0 L1012.3,621.2 L1012.5,617.2 L1022.8,619.5 L1023.2,615.9 L1013.3,610.1 L1013.9,606.3 L1024.2,609.7 L1025.0,606.3 L1015.4,599.6 L1016.5,595.9 L1026.7,600.4 L1027.8,597.2 L1018.7,589.7 L1020.2,586.3 L1030.2,591.7 L1031.7,588.7 L1023.2,580.5 L1025.0,577.4 L1034.7,583.7 L1036.5,581.1 L1028.7,572.1 L1030.9,569.3 L1040.1,576.6 L1042.3,574.2 L1035.1,564.7 L1037.7,562.2 L1046.4,570.3 L1048.9,568.2 L1042.6,558.2 L1045.5,556.2 L1053.6,564.9 L1056.3,563.3 L1050.9,552.9 L1054.0,551.2 L1061.4,560.6 L1064.4,559.3 L1059.9,548.7 L1063.3,547.4 L1070.0,557.3 L1073.2,556.4 L1069.6,545.6 L1073.3,544.8 L1079.0,555.1 L1082.4,554.6 L1079.9,543.8 L1083.7,543.5 L1088.5,554.0 L1092.1,553.9 L1090.6,543.2 L1094.6,543.3 L1098.4,554.0 L1102.0,554.3 L1101.7,543.9 L1105.7,544.4 L1108.5,555.2 L1112.2,555.9 L1112.9,545.8 L1117.0,546.7 L1118.8,557.4 L1122.5,558.5 L1124.3,548.9 L1128.3,550.3 L1129.0,560.8 L1132.7,562.3 L1135.5,553.1 L1139.6,555.0 L1139.2,565.2 L1142.8,567.0 L1146.7,558.6 L1150.6,560.8 L1149.2,570.6 L1152.7,572.8 L1157.5,565.0 L1161.3,567.6 L1158.8,576.9 L1162.2,579.4 L1167.9,572.5 L1171.6,575.4 L1168.0,584.1 L1171.2,586.9 L1177.9,580.9 L1181.3,584.2 L1176.7,592.1 L1179.7,595.2 L1187.1,590.2 L1190.3,593.7 L1184.8,600.8 L1187.6,604.1 L1195.7,600.1 L1198.6,603.9 L1192.2,610.2 L1194.7,613.6 L1203.4,610.7 L1206.0,614.6 L1198.8,620.0 L1201.0,623.6 L1210.3,621.8 L1212.5,625.9 L1204.6,630.2 L1206.4,634.0 L1216.1,633.3 L1218.0,637.4 L1209.4,640.7 L1210.9,644.6 L1220.9,645.0 L1222.4,649.2 L1213.2,651.4 L1214.4,655.3 L1224.6,656.8 L1225.6,661.1 L1216.1,662.2 L1216.8,666.0 L1227.1,668.7 L1227.8,672.9 L1217.9,672.8 L1218.2,676.6 L1228.5,680.4 L1228.7,684.5 L1218.6,683.3Z" fill="#d2cdbf" stroke="#151515" stroke-width="0.8" stroke-linejoin="round"/>
<ellipse cx="1120.5" cy="656.5" rx="113.66" ry="85.07" transform="rotate(-130.40 1120.5 656.5)" fill="url(#gring)"/>
<ellipse cx="1120.5" cy="656.5" rx="105.54" ry="78.99" transform="rotate(-130.40 1120.5 656.5)" fill="#6f685a" stroke="#151515" stroke-width="1.1"/>
<ellipse cx="1124.1" cy="655.3" rx="35.42" ry="26.52" transform="rotate(-130.40 1124.1 655.3)" fill="#9b968a" stroke="#151515" stroke-width="1"/>
<ellipse cx="1119.1" cy="658.3" rx="28.04" ry="20.99" transform="rotate(-130.40 1119.1 658.3)" fill="#c8c4ba" stroke="#151515" stroke-width="0.8"/>
<ellipse cx="1110.1" cy="662.3" rx="25.09" ry="18.78" transform="rotate(-130.40 1110.1 662.3)" fill="#1b1b1b" stroke="#151515" stroke-width="1"/>
<ellipse cx="1108.1" cy="663.3" rx="7.38" ry="5.52" transform="rotate(-130.40 1108.1 663.3)" fill="none" stroke="#444" stroke-width="1"/>
<ellipse cx="1202.0" cy="607.7" rx="4.80" ry="3.59" transform="rotate(-130.40 1202.0 607.7)" fill="#f4f4f4" stroke="#111" stroke-width="1.4"/>
<ellipse cx="1202.0" cy="607.7" rx="1.62" ry="1.22" transform="rotate(-130.40 1202.0 607.7)" fill="#111"/>
<ellipse cx="1189.0" cy="539.0" rx="31.00" ry="23.20" transform="rotate(-130.40 1189.0 539.0)" fill="#272727" stroke="#151515" stroke-width="1.2"/>
<polygon points="1180.2,587.2 1209.1,562.6 1168.9,515.4 1140.0,540.0" fill="#272727"/>
<path d="M1180.2,587.2 L1209.1,562.6 M1140.0,540.0 L1168.9,515.4" stroke="#151515" stroke-width="1.2"/>
<ellipse cx="1160.1" cy="563.6" rx="31.00" ry="23.20" transform="rotate(-130.40 1160.1 563.6)" fill="#272727"/>
<path d="M1172.7,587.9 L1201.6,563.3" stroke="#4a4a4a" stroke-width="2"/>
<path d="M1174.2,589.1 L1203.1,564.5" stroke="#111" stroke-width="1"/>
<path d="M1160.1,587.8 L1189.0,563.2" stroke="#4a4a4a" stroke-width="2"/>
<path d="M1161.6,589.0 L1190.5,564.4" stroke="#111" stroke-width="1"/>
<path d="M1147.5,580.6 L1176.4,556.0" stroke="#4a4a4a" stroke-width="2"/>
<path d="M1149.0,581.8 L1177.9,557.2" stroke="#111" stroke-width="1"/>
<path d="M1138.7,568.4 L1167.5,543.7" stroke="#4a4a4a" stroke-width="2"/>
<path d="M1140.2,569.6 L1169.0,544.9" stroke="#111" stroke-width="1"/>
<path d="M1136.1,554.7 L1165.0,530.1" stroke="#4a4a4a" stroke-width="2"/>
<path d="M1137.6,555.9 L1166.5,531.3" stroke="#111" stroke-width="1"/>
<path d="M1140.7,543.7 L1169.5,519.1" stroke="#4a4a4a" stroke-width="2"/>
<path d="M1142.2,544.9 L1171.0,520.3" stroke="#111" stroke-width="1"/>
<ellipse cx="1160.1" cy="563.6" rx="27.31" ry="20.44" transform="rotate(-130.40 1160.1 563.6)" fill="#1f1f1f" stroke="#151515" stroke-width="1.2"/>
<polygon points="1163.6,596.6 1177.8,584.4 1142.4,542.9 1128.2,555.0" fill="#1f1f1f"/>
<path d="M1163.6,596.6 L1177.8,584.4 M1128.2,555.0 L1142.4,542.9" stroke="#151515" stroke-width="1.2"/>
<ellipse cx="1145.9" cy="575.8" rx="27.31" ry="20.44" transform="rotate(-130.40 1145.9 575.8)" fill="#1f1f1f"/>
<ellipse cx="1150.4" cy="572.0" rx="27.31" ry="20.44" transform="rotate(-130.40 1150.4 572.0)" fill="none" stroke="#0c0c0c" stroke-width="1"/>
<ellipse cx="1155.2" cy="567.8" rx="27.31" ry="20.44" transform="rotate(-130.40 1155.2 567.8)" fill="none" stroke="#0c0c0c" stroke-width="1"/>
<ellipse cx="1145.9" cy="575.8" rx="27.31" ry="20.44" transform="rotate(-130.40 1145.9 575.8)" fill="#202020" stroke="#151515" stroke-width="1.2"/>
<ellipse cx="1144.9" cy="576.8" rx="16.24" ry="12.15" transform="rotate(-130.40 1144.9 576.8)" fill="#1a1a1a" stroke="#333" stroke-width="0.9"/>
<ellipse cx="1144.4" cy="577.3" rx="5.17" ry="3.87" transform="rotate(-130.40 1144.4 577.3)" fill="#0a0a0a" stroke="#444" stroke-width="0.6"/>
<ellipse cx="1263.6" cy="698.0" rx="31.00" ry="23.20" transform="rotate(-130.40 1263.6 698.0)" fill="#272727" stroke="#151515" stroke-width="1.2"/>
<polygon points="1254.8,746.2 1283.7,721.6 1243.5,674.4 1214.6,699.0" fill="#272727"/>
<path d="M1254.8,746.2 L1283.7,721.6 M1214.6,699.0 L1243.5,674.4" stroke="#151515" stroke-width="1.2"/>
<ellipse cx="1234.7" cy="722.6" rx="31.00" ry="23.20" transform="rotate(-130.40 1234.7 722.6)" fill="#272727"/>
<path d="M1247.3,746.9 L1276.2,722.3" stroke="#4a4a4a" stroke-width="2"/>
<path d="M1248.8,748.1 L1277.7,723.5" stroke="#111" stroke-width="1"/>
<path d="M1234.7,746.8 L1263.6,722.2" stroke="#4a4a4a" stroke-width="2"/>
<path d="M1236.2,748.0 L1265.1,723.4" stroke="#111" stroke-width="1"/>
<path d="M1222.1,739.6 L1251.0,715.0" stroke="#4a4a4a" stroke-width="2"/>
<path d="M1223.6,740.8 L1252.5,716.2" stroke="#111" stroke-width="1"/>
<path d="M1213.3,727.4 L1242.1,702.7" stroke="#4a4a4a" stroke-width="2"/>
<path d="M1214.8,728.6 L1243.6,703.9" stroke="#111" stroke-width="1"/>
<path d="M1210.7,713.7 L1239.6,689.1" stroke="#4a4a4a" stroke-width="2"/>
<path d="M1212.2,714.9 L1241.1,690.3" stroke="#111" stroke-width="1"/>
<path d="M1215.3,702.7 L1244.1,678.1" stroke="#4a4a4a" stroke-width="2"/>
<path d="M1216.8,703.9 L1245.6,679.3" stroke="#111" stroke-width="1"/>
<ellipse cx="1234.7" cy="722.6" rx="27.31" ry="20.44" transform="rotate(-130.40 1234.7 722.6)" fill="#1f1f1f" stroke="#151515" stroke-width="1.2"/>
<polygon points="1238.2,755.6 1252.4,743.4 1217.0,701.9 1202.8,714.0" fill="#1f1f1f"/>
<path d="M1238.2,755.6 L1252.4,743.4 M1202.8,714.0 L1217.0,701.9" stroke="#151515" stroke-width="1.2"/>
<ellipse cx="1220.5" cy="734.8" rx="27.31" ry="20.44" transform="rotate(-130.40 1220.5 734.8)" fill="#1f1f1f"/>
<ellipse cx="1225.0" cy="731.0" rx="27.31" ry="20.44" transform="rotate(-130.40 1225.0 731.0)" fill="none" stroke="#0c0c0c" stroke-width="1"/>
<ellipse cx="1229.8" cy="726.8" rx="27.31" ry="20.44" transform="rotate(-130.40 1229.8 726.8)" fill="none" stroke="#0c0c0c" stroke-width="1"/>
<ellipse cx="1220.5" cy="734.8" rx="27.31" ry="20.44" transform="rotate(-130.40 1220.5 734.8)" fill="#202020" stroke="#151515" stroke-width="1.2"/>
<ellipse cx="1219.5" cy="735.8" rx="16.24" ry="12.15" transform="rotate(-130.40 1219.5 735.8)" fill="#1a1a1a" stroke="#333" stroke-width="0.9"/>
<ellipse cx="1219.0" cy="736.3" rx="5.17" ry="3.87" transform="rotate(-130.40 1219.0 736.3)" fill="#0a0a0a" stroke="#444" stroke-width="0.6"/>
<ellipse cx="1007.8" cy="744.0" rx="22.88" ry="17.12" transform="rotate(-130.40 1007.8 744.0)" fill="#1c1c1c" stroke="#0a0a0a" stroke-width="1.1"/>
<ellipse cx="1006.3" cy="745.5" rx="14.76" ry="11.05" transform="rotate(-130.40 1006.3 745.5)" fill="#242424" stroke="#0c0c0c" stroke-width="1"/>
<ellipse cx="1007.5" cy="744.3" rx="11.07" ry="8.29" transform="rotate(-130.40 1007.5 744.3)" fill="#2c2c2c"/>
<ellipse cx="1005.8" cy="746.0" rx="4.43" ry="3.31" transform="rotate(-130.40 1005.8 746.0)" fill="#161616" stroke="#3a3a3a" stroke-width="0.6"/>
<ellipse cx="1007.8" cy="808.0" rx="22.88" ry="17.12" transform="rotate(-130.40 1007.8 808.0)" fill="#1c1c1c" stroke="#0a0a0a" stroke-width="1.1"/>
<ellipse cx="1006.3" cy="809.5" rx="14.76" ry="11.05" transform="rotate(-130.40 1006.3 809.5)" fill="#242424" stroke="#0c0c0c" stroke-width="1"/>
<ellipse cx="1007.5" cy="808.3" rx="11.07" ry="8.29" transform="rotate(-130.40 1007.5 808.3)" fill="#2c2c2c"/>
<ellipse cx="1005.8" cy="810.0" rx="4.43" ry="3.31" transform="rotate(-130.40 1005.8 810.0)" fill="#161616" stroke="#3a3a3a" stroke-width="0.6"/>
<ellipse cx="1138.0" cy="783.0" rx="22.88" ry="17.12" transform="rotate(-130.40 1138.0 783.0)" fill="#1c1c1c" stroke="#0a0a0a" stroke-width="1.1"/>
<ellipse cx="1136.5" cy="784.5" rx="14.76" ry="11.05" transform="rotate(-130.40 1136.5 784.5)" fill="#242424" stroke="#0c0c0c" stroke-width="1"/>
<ellipse cx="1137.7" cy="783.3" rx="11.07" ry="8.29" transform="rotate(-130.40 1137.7 783.3)" fill="#2c2c2c"/>
<ellipse cx="1136.0" cy="785.0" rx="4.43" ry="3.31" transform="rotate(-130.40 1136.0 785.0)" fill="#161616" stroke="#3a3a3a" stroke-width="0.6"/>
<ellipse cx="1138.0" cy="846.0" rx="22.88" ry="17.12" transform="rotate(-130.40 1138.0 846.0)" fill="#1c1c1c" stroke="#0a0a0a" stroke-width="1.1"/>
<ellipse cx="1136.5" cy="847.5" rx="14.76" ry="11.05" transform="rotate(-130.40 1136.5 847.5)" fill="#242424" stroke="#0c0c0c" stroke-width="1"/>
<ellipse cx="1137.7" cy="846.3" rx="11.07" ry="8.29" transform="rotate(-130.40 1137.7 846.3)" fill="#2c2c2c"/>
<ellipse cx="1136.0" cy="848.0" rx="4.43" ry="3.31" transform="rotate(-130.40 1136.0 848.0)" fill="#161616" stroke="#3a3a3a" stroke-width="0.6"/>
<ellipse cx="1263.5" cy="818.0" rx="22.88" ry="17.12" transform="rotate(-130.40 1263.5 818.0)" fill="#1c1c1c" stroke="#0a0a0a" stroke-width="1.1"/>
<ellipse cx="1262.0" cy="819.5" rx="14.76" ry="11.05" transform="rotate(-130.40 1262.0 819.5)" fill="#242424" stroke="#0c0c0c" stroke-width="1"/>
<ellipse cx="1263.2" cy="818.3" rx="11.07" ry="8.29" transform="rotate(-130.40 1263.2 818.3)" fill="#2c2c2c"/>
<ellipse cx="1261.5" cy="820.0" rx="4.43" ry="3.31" transform="rotate(-130.40 1261.5 820.0)" fill="#161616" stroke="#3a3a3a" stroke-width="0.6"/>
<ellipse cx="1263.5" cy="883.0" rx="22.88" ry="17.12" transform="rotate(-130.40 1263.5 883.0)" fill="#1c1c1c" stroke="#0a0a0a" stroke-width="1.1"/>
<ellipse cx="1262.0" cy="884.5" rx="14.76" ry="11.05" transform="rotate(-130.40 1262.0 884.5)" fill="#242424" stroke="#0c0c0c" stroke-width="1"/>
<ellipse cx="1263.2" cy="883.3" rx="11.07" ry="8.29" transform="rotate(-130.40 1263.2 883.3)" fill="#2c2c2c"/>
<ellipse cx="1261.5" cy="885.0" rx="4.43" ry="3.31" transform="rotate(-130.40 1261.5 885.0)" fill="#161616" stroke="#3a3a3a" stroke-width="0.6"/>
<ellipse cx="1083.6" cy="509.5" rx="14.02" ry="10.50" transform="rotate(-130.40 1083.6 509.5)" fill="#242424" stroke="#0c0c0c" stroke-width="1"/>
<ellipse cx="1084.8" cy="508.3" rx="10.52" ry="7.87" transform="rotate(-130.40 1084.8 508.3)" fill="#2c2c2c"/>
<ellipse cx="1083.1" cy="510.0" rx="4.21" ry="3.15" transform="rotate(-130.40 1083.1 510.0)" fill="#161616" stroke="#3a3a3a" stroke-width="0.6"/>
<ellipse cx="1125.0" cy="498.4" rx="14.02" ry="10.50" transform="rotate(-130.40 1125.0 498.4)" fill="#242424" stroke="#0c0c0c" stroke-width="1"/>
<ellipse cx="1126.2" cy="497.2" rx="10.52" ry="7.87" transform="rotate(-130.40 1126.2 497.2)" fill="#2c2c2c"/>
<ellipse cx="1124.5" cy="498.9" rx="4.21" ry="3.15" transform="rotate(-130.40 1124.5 498.9)" fill="#161616" stroke="#3a3a3a" stroke-width="0.6"/>
<ellipse cx="1209.6" cy="489.0" rx="14.02" ry="10.50" transform="rotate(-130.40 1209.6 489.0)" fill="#242424" stroke="#0c0c0c" stroke-width="1"/>
<ellipse cx="1210.8" cy="487.8" rx="10.52" ry="7.87" transform="rotate(-130.40 1210.8 487.8)" fill="#2c2c2c"/>
<ellipse cx="1209.1" cy="489.5" rx="4.21" ry="3.15" transform="rotate(-130.40 1209.1 489.5)" fill="#161616" stroke="#3a3a3a" stroke-width="0.6"/>
<ellipse cx="1243.4" cy="582.3" rx="14.02" ry="10.50" transform="rotate(-130.40 1243.4 582.3)" fill="#242424" stroke="#0c0c0c" stroke-width="1"/>
<ellipse cx="1244.6" cy="581.1" rx="10.52" ry="7.87" transform="rotate(-130.40 1244.6 581.1)" fill="#2c2c2c"/>
<ellipse cx="1242.9" cy="582.8" rx="4.21" ry="3.15" transform="rotate(-130.40 1242.9 582.8)" fill="#161616" stroke="#3a3a3a" stroke-width="0.6"/>
<ellipse cx="1270.8" cy="644.2" rx="14.02" ry="10.50" transform="rotate(-130.40 1270.8 644.2)" fill="#242424" stroke="#0c0c0c" stroke-width="1"/>
<ellipse cx="1272.0" cy="643.0" rx="10.52" ry="7.87" transform="rotate(-130.40 1272.0 643.0)" fill="#2c2c2c"/>
<ellipse cx="1270.3" cy="644.7" rx="4.21" ry="3.15" transform="rotate(-130.40 1270.3 644.7)" fill="#161616" stroke="#3a3a3a" stroke-width="0.6"/>
<ellipse cx="1319.4" cy="733.5" rx="14.02" ry="10.50" transform="rotate(-130.40 1319.4 733.5)" fill="#242424" stroke="#0c0c0c" stroke-width="1"/>
<ellipse cx="1320.6" cy="732.3" rx="10.52" ry="7.87" transform="rotate(-130.40 1320.6 732.3)" fill="#2c2c2c"/>
<ellipse cx="1318.9" cy="734.0" rx="4.21" ry="3.15" transform="rotate(-130.40 1318.9 734.0)" fill="#161616" stroke="#3a3a3a" stroke-width="0.6"/>
<ellipse cx="1242.0" cy="760.8" rx="14.02" ry="10.50" transform="rotate(-130.40 1242.0 760.8)" fill="#242424" stroke="#0c0c0c" stroke-width="1"/>
<ellipse cx="1243.2" cy="759.6" rx="10.52" ry="7.87" transform="rotate(-130.40 1243.2 759.6)" fill="#2c2c2c"/>
<ellipse cx="1241.5" cy="761.3" rx="4.21" ry="3.15" transform="rotate(-130.40 1241.5 761.3)" fill="#161616" stroke="#3a3a3a" stroke-width="0.6"/>
<path d="M901.0,684.0 L906.0,678.0 L910.0,674.5 L935.0,681.5 L941.0,687.5 L941.0,798.5 L937.0,804.5 L933.0,808.0 L906.0,801.0 L901.0,795.0Z" fill="#48a24d" stroke="#021804" stroke-width="1"/>
<path d="M906.0,678.0 L931.0,685.0 L937.0,691.0 L937.0,802.0 L933.0,808.0 L906.0,801.0 L901.0,795.0 L901.0,684.0Z" fill="#2a6630" stroke="#021804" stroke-width="1"/>
<ellipse cx="918.0" cy="711.0" rx="14.76" ry="11.05" transform="rotate(-130.40 918.0 711.0)" fill="#242424" stroke="#0c0c0c" stroke-width="1"/>
<ellipse cx="919.2" cy="709.8" rx="11.07" ry="8.29" transform="rotate(-130.40 919.2 709.8)" fill="#2c2c2c"/>
<ellipse cx="917.5" cy="711.5" rx="4.43" ry="3.31" transform="rotate(-130.40 917.5 711.5)" fill="#161616" stroke="#3a3a3a" stroke-width="0.6"/>
<ellipse cx="918.0" cy="776.0" rx="14.76" ry="11.05" transform="rotate(-130.40 918.0 776.0)" fill="#242424" stroke="#0c0c0c" stroke-width="1"/>
<ellipse cx="919.2" cy="774.8" rx="11.07" ry="8.29" transform="rotate(-130.40 919.2 774.8)" fill="#2c2c2c"/>
<ellipse cx="917.5" cy="776.5" rx="4.43" ry="3.31" transform="rotate(-130.40 917.5 776.5)" fill="#161616" stroke="#3a3a3a" stroke-width="0.6"/>
</svg>
<!-- /MODEL -->
<!-- TOOLBAR -->
<svg class="a" style="left:45.0px;top:45.0px" width="24" height="24" viewBox="0 0 24 24"><path d="M9 6 L4 11 L9 16 M4 11 H13 Q19 11 18 19" fill="none" stroke="#8c8c8c" stroke-width="2.6" stroke-linejoin="round"/></svg>
<svg class="a" style="left:79.0px;top:45.0px" width="24" height="24" viewBox="0 0 24 24"><path d="M15 6 L20 11 L15 16 M20 11 H11 Q5 11 6 19" fill="none" stroke="#8c8c8c" stroke-width="2.6" stroke-linejoin="round"/></svg>
<svg class="a" style="left:117.0px;top:45.0px" width="24" height="24" viewBox="0 0 24 24"><circle cx="12" cy="12" r="10.5" fill="#6d9bd0"/><path d="M8 17 A6 6 0 1 1 16 17" fill="none" stroke="#fff" stroke-width="2"/><path d="M14 15 L17 19 L13 19Z" fill="#fff"/></svg>
<svg class="a" style="left:155.0px;top:45.0px" width="24" height="24" viewBox="0 0 24 24"><path d="M5 7 L10 5 H15 L19 9 V19 L15 21 H5Z M5 7 H15 V21 M15 7 L19 5" fill="none" stroke="#333" stroke-width="1.3"/><path d="M10 2 Q16 2 15 9 M12.5 7 L15 10 L17.5 7" fill="none" stroke="#333" stroke-width="1.4"/></svg>
<svg class="a" style="left:238.0px;top:45.0px" width="24" height="24" viewBox="0 0 24 24"><circle cx="12" cy="12" r="9" fill="none" stroke="#333" stroke-width="1.5"/><circle cx="12" cy="12" r="7" fill="none" stroke="#333" stroke-width="0.8"/><path d="M12 6 V12 H17" fill="none" stroke="#333" stroke-width="1.5"/></svg>
<svg class="a" style="left:276.0px;top:45.0px" width="24" height="24" viewBox="0 0 24 24"><path d="M5 7 V17 Q12 21 19 17 V7" fill="none" stroke="#333" stroke-width="1.5"/><ellipse cx="12" cy="7" rx="7" ry="3" fill="none" stroke="#333" stroke-width="1.5"/><path d="M5 12 Q12 16 19 12 V17 Q12 21 5 17Z M9 11 V15 Q12 17 15 15 V11" fill="#555"/></svg>
<svg class="a" style="left:310.0px;top:45.0px" width="24" height="24" viewBox="0 0 24 24"><ellipse cx="12" cy="8" rx="6" ry="2.5" fill="none" stroke="#333" stroke-width="1.4"/><path d="M6 8 V16 Q12 19 18 16 V8" fill="none" stroke="#333" stroke-width="1.4"/><path d="M2 12 Q2 17 8 17 M22 12 Q22 17 16 17 M6 15 L8 17 L6 19 M18 15 L16 17 L18 19" fill="none" stroke="#333" stroke-width="1.6"/></svg>
<svg class="a" style="left:344.0px;top:45.0px" width="24" height="24" viewBox="0 0 24 24"><ellipse cx="12" cy="9" rx="6" ry="2.5" fill="none" stroke="#333" stroke-width="1.4"/><path d="M6 9 V18 Q12 21 18 18 V9 M2 10 V18 M22 10 V18 M12 2 V8 M9.5 4.5 L12 2 L14.5 4.5" fill="none" stroke="#333" stroke-width="1.8"/></svg>
<svg class="a" style="left:378.0px;top:45.0px" width="24" height="24" viewBox="0 0 24 24"><rect x="4" y="4" width="16" height="16" fill="none" stroke="#333" stroke-width="1.2"/><path d="M12 2 V22 M2 12 H22 M9 5 L12 2 L15 5 M9 19 L12 22 L15 19 M5 9 L2 12 L5 15 M19 9 L22 12 L19 15" fill="none" stroke="#333" stroke-width="2"/></svg>
<svg class="a" style="left:412.0px;top:45.0px" width="24" height="24" viewBox="0 0 24 24"><ellipse cx="12" cy="10" rx="6" ry="2.5" fill="none" stroke="#333" stroke-width="1.4"/><path d="M6 10 V16 Q12 19 18 16 V10 M12 2 V7 M10 4 L12 2 L14 4 M2 13 Q2 18 8 18 M22 13 Q22 18 16 18 M6 16 L8 18 L6 20 M18 16 L16 18 L18 20" fill="none" stroke="#333" stroke-width="1.6"/></svg>
<svg class="a" style="left:446.0px;top:45.0px" width="24" height="24" viewBox="0 0 24 24"><ellipse cx="12" cy="6" rx="3" ry="1.5" fill="none" stroke="#333" stroke-width="1.2"/><path d="M9 6 V17 M15 6 V17 M5 17 H19 V21 H5Z M3 11 H9 M15 11 H21 M5 9 L3 11 L5 13 M19 9 L21 11 L19 13" fill="none" stroke="#333" stroke-width="1.5"/></svg>
<svg class="a" style="left:480.0px;top:45.0px" width="24" height="24" viewBox="0 0 24 24"><circle cx="12" cy="12" r="7" fill="none" stroke="#333" stroke-width="1.5"/><path d="M12 1 V23 M1 12 H23 M9 4 L12 1 L15 4 M9 20 L12 23 L15 20 M4 9 L1 12 L4 15 M20 9 L23 12 L20 15" fill="none" stroke="#333" stroke-width="2"/></svg>
<svg class="a" style="left:514.0px;top:45.0px" width="24" height="24" viewBox="0 0 24 24"><path d="M3 8 L8 5 V19 L3 22Z M16 5 L21 2 V16 L16 19Z M8 12 H16 M10 10 L8 12 L10 14 M14 10 L16 12 L14 14" fill="none" stroke="#444" stroke-width="1.4"/></svg>
<svg class="a" style="left:552.0px;top:45.0px" width="24" height="24" viewBox="0 0 24 24"><path d="M4 4 Q12 4 18 12 M6 10 Q12 12 14 20 M2 6 L4 4 L6 6 M16 10 L18 14 L20 10 M12 18 L14 21 L17 19 M3 3 L7 8" fill="none" stroke="#333" stroke-width="1.6"/></svg>
<svg class="a" style="left:586.0px;top:45.0px" width="24" height="24" viewBox="0 0 24 24"><path d="M3 3 V21 M21 3 V21" stroke="#222" stroke-width="2.4"/><rect x="7" y="8" width="10" height="9" fill="none" stroke="#555" stroke-width="1.2"/><path d="M5 13 H10 M19 13 H14 M8 11 L10 13 L8 15 M16 11 L14 13 L16 15" fill="none" stroke="#333" stroke-width="1.5"/></svg>
<svg class="a" style="left:624.0px;top:45.0px" width="24" height="24" viewBox="0 0 24 24"><rect x="3" y="3" width="18" height="18" fill="none" stroke="#333" stroke-width="1.3" stroke-dasharray="2 2"/><rect x="7" y="7" width="6.5" height="6.5" fill="none" stroke="#333" stroke-width="1.3"/><rect x="10.5" y="10.5" width="6.5" height="6.5" fill="none" stroke="#333" stroke-width="1.3"/></svg>
<svg class="a" style="left:658.0px;top:45.0px" width="24" height="24" viewBox="0 0 24 24"><ellipse cx="14" cy="9" rx="6" ry="2.5" fill="none" stroke="#333" stroke-width="1.4"/><path d="M8 9 V18 Q14 21 20 18 V9" fill="none" stroke="#333" stroke-width="1.4"/><path d="M7 3 L8.5 7 L12.5 7 L9.3 9.5 L10.5 13.5 L7 11 L3.5 13.5 L4.7 9.5 L1.5 7 L5.5 7Z" fill="#333"/></svg>
<svg class="a" style="left:692.0px;top:45.0px" width="24" height="24" viewBox="0 0 24 24"><ellipse cx="11" cy="7" rx="6" ry="3" fill="none" stroke="#333" stroke-width="1.4"/><path d="M5 7 V17 Q11 20 17 17 V7" fill="none" stroke="#333" stroke-width="1.4"/><path d="M13 13 L21 17 L18 18 L21 22 L19 23 L16 19 L14 21Z" fill="#333"/></svg>
<svg class="a" style="left:726.0px;top:45.0px" width="24" height="24" viewBox="0 0 24 24"><path d="M3 13 H21 V21 H3Z M6 10 H11 V13 M14 4 H19 V8 H14Z" fill="none" stroke="#333" stroke-width="1.4"/><circle cx="8" cy="11" r="2.5" fill="none" stroke="#333" stroke-width="1.2"/></svg>
<svg class="a" style="left:760.0px;top:45.0px" width="24" height="24" viewBox="0 0 24 24"><path d="M3 4 H8 V9 H11 V14 H3Z M13 13 H18 V18 H21 V22 H13Z M6 15 V18 H12" fill="none" stroke="#333" stroke-width="1.4"/></svg>
<svg class="a" style="left:794.0px;top:45.0px" width="24" height="24" viewBox="0 0 24 24"><rect x="3" y="3" width="18" height="18" rx="1.5" fill="#888" stroke="#333" stroke-width="1.3"/><rect x="4" y="4" width="7.5" height="7.5" fill="#fff"/><path d="M12 3 V21 M3 12 H21" stroke="#333" stroke-width="1.3"/></svg>
<svg class="a" style="left:828.0px;top:45.0px" width="24" height="24" viewBox="0 0 24 24"><circle cx="7" cy="14" r="3" fill="#555"/><circle cx="12" cy="9" r="3" fill="none" stroke="#333" stroke-width="1.3"/><circle cx="16" cy="15" r="3" fill="#555"/><circle cx="10" cy="17" r="2.5" fill="#777"/></svg>
<svg class="a" style="left:862.0px;top:45.0px" width="24" height="24" viewBox="0 0 24 24"><path d="M3 6 L7 3 V20 L3 22Z M7 3 L11 6 V22 L3 22 M13 8 L17 5 V22 H13Z M17 5 L21 8 V22 H17" fill="#bbb" stroke="#333" stroke-width="1.3"/></svg>
<svg class="a" style="left:900.0px;top:45.0px" width="24" height="24" viewBox="0 0 24 24"><circle cx="8" cy="8" r="4" fill="none" stroke="#333" stroke-width="3" stroke-dasharray="2 1.5"/><circle cx="15" cy="15" r="5" fill="none" stroke="#333" stroke-width="3.5" stroke-dasharray="2 1.5"/></svg>
<svg class="a" style="left:934.0px;top:45.0px" width="24" height="24" viewBox="0 0 24 24"><circle cx="12" cy="11" r="7" fill="none" stroke="#333" stroke-width="3.5" stroke-dasharray="2 1.6"/><circle cx="12" cy="11" r="3" fill="#333"/><path d="M3 21 H21" stroke="#333" stroke-width="2.2"/></svg>
<svg class="a" style="left:968.0px;top:45.0px" width="24" height="24" viewBox="0 0 24 24"><path d="M4 3 V12 M7 3 V12 M10 3 V12 M13 3 V12 M16 3 V12 M19 3 V12 M3 9 H21 M3 12 H21 M4 18 H20 M17 15 L20 18 L17 21" fill="none" stroke="#333" stroke-width="1.8"/></svg>
<svg class="a" style="left:1002.0px;top:45.0px" width="24" height="24" viewBox="0 0 24 24"><rect x="6" y="4" width="15" height="6" rx="3" fill="none" stroke="#555" stroke-width="1.2"/><rect x="6" y="14" width="15" height="6" rx="3" fill="none" stroke="#555" stroke-width="1.2"/><path d="M2 7 H9 M4 5 L2 7 L4 9 M10 17 H17 M15 15 L17 17 L15 19" fill="none" stroke="#333" stroke-width="1.5"/></svg>
<svg class="a" style="left:1040.0px;top:45.0px" width="24" height="24" viewBox="0 0 24 24"><path d="M4 3 H16 V14 M4 3 V21 H11 M7 7 H13 M7 10 H13 M7 13 H11" fill="none" stroke="#333" stroke-width="1.4"/><path d="M11 18 Q16 13 21 18 Q16 23 11 18Z M12 22 L20 14" fill="none" stroke="#333" stroke-width="1.3"/></svg>
<svg class="a" style="left:1074.0px;top:45.0px" width="24" height="24" viewBox="0 0 24 24"><path d="M8 8 H12 V22 H4 V11Z M13 5 L17 3 H20 V22 H13Z M8 2 V9 M4.5 5.5 H11.5" fill="none" stroke="#333" stroke-width="1.4"/><path d="M8 2 V9 M4.5 5.5 H11.5" stroke="#1f5bb5" stroke-width="2"/></svg>
<svg class="a" style="left:1113.0px;top:45.0px" width="24" height="24" viewBox="0 0 24 24"><ellipse cx="14" cy="11" rx="5" ry="8" fill="none" stroke="#222" stroke-width="1.8"/><path d="M13 13 L4 21 M4 15 V21 H10" fill="none" stroke="#1f5bb5" stroke-width="2"/></svg>
<svg class="a" style="left:1146.0px;top:45.0px" width="24" height="24" viewBox="0 0 24 24"><ellipse cx="12" cy="12" rx="8" ry="4.5" fill="none" stroke="#222" stroke-width="1.8"/><path d="M5 5 Q12 2 19 5 M19 19 Q12 22 5 19 M17 3 L19 5 L17 7 M7 17 L5 19 L7 21" fill="none" stroke="#1f5bb5" stroke-width="1.4"/></svg>
<svg class="a" style="left:1180.0px;top:45.0px" width="24" height="24" viewBox="0 0 24 24"><ellipse cx="12" cy="8" rx="8" ry="4.5" fill="none" stroke="#222" stroke-width="1.8"/><path d="M5 14 V21 M12 15 V22 M19 14 V21 M3.5 19 L5 21 L6.5 19 M10.5 20 L12 22 L13.5 20 M17.5 19 L19 21 L20.5 19" fill="none" stroke="#1f5bb5" stroke-width="1.5"/></svg>
<svg class="a" style="left:1214.0px;top:45.0px" width="24" height="24" viewBox="0 0 24 24"><ellipse cx="12" cy="12" rx="7" ry="4" fill="none" stroke="#222" stroke-width="1.8"/><path d="M2 2 L6 6 M22 2 L18 6 M2 22 L6 18 M22 22 L18 18 M6 3 V6 H3 M18 3 V6 H21 M3 18 H6 V21 M21 18 H18 V21" fill="none" stroke="#1f5bb5" stroke-width="1.4"/></svg>
<svg class="a" style="left:1248.0px;top:45.0px" width="24" height="24" viewBox="0 0 24 24"><ellipse cx="12" cy="11" rx="8" ry="4.5" fill="none" stroke="#222" stroke-width="1.8"/><path d="M4 2 V5 M9 2 V5 M15 2 V5 M20 2 V5 M12 9 V22 M10 19 L12 22 L14 19" fill="none" stroke="#1f5bb5" stroke-width="1.6"/></svg>
<div class="sep" style="left:110px"></div>
<div class="sep" style="left:148px"></div>
<div class="sep" style="left:231px"></div>
<div class="sep" style="left:268px"></div>
<div class="sep" style="left:544px"></div>
<div class="sep" style="left:616px"></div>
<div class="sep" style="left:892px"></div>
<div class="sep" style="left:1032px"></div>
<div class="sep" style="left:1104px"></div>
<div class="t" style="left:182px;top:49px;font-size:14.5px;line-height:17px;color:#333">Insert</div>
<div class="a" style="left:1288px;top:43px;width:160px;height:30px;background:#efefef;border-radius:5px"></div>
<div class="t" style="left:1298px;top:50px;font-size:13.5px;line-height:16px;color:#333">Search tools...</div>
<div class="a" style="left:1388px;top:50px;width:35px;height:17px;background:#fafafa;border:1px solid #c4c4c4;border-radius:2px"></div>
<div class="t" style="left:1391px;top:52px;font-size:10.5px;line-height:13px;color:#444">alt/⌥</div>
<div class="a" style="left:1423px;top:50px;width:15px;height:17px;background:#fafafa;border:1px solid #c4c4c4;border-radius:2px"></div>
<div class="t" style="left:1427px;top:52px;font-size:10.5px;line-height:13px;color:#444">c</div>
<!-- /TOOLBAR -->
<!-- TREE -->
<svg class="a" style="left:10px;top:48px" width="20" height="20" viewBox="0 0 20 20"><circle cx="4" cy="4" r="2.6" fill="none" stroke="#222" stroke-width="1.6"/><path d="M4 6.5 V17 M4 14 Q4 11 9 11 M8 3 H18 M8 7 H18 M11 11 H18 M8 15 H18" fill="none" stroke="#222" stroke-width="1.8"/><circle cx="4" cy="17" r="1.5" fill="#222"/></svg>
<svg class="a" style="left:10px;top:83px" width="20" height="20" viewBox="0 0 20 20"><path d="M5 1 V18" stroke="#222" stroke-width="1.6" stroke-dasharray="2 2"/><circle cx="5" cy="8" r="2.5" fill="#222"/><path d="M10 13 H18 M14 9 V17" stroke="#1f5bb5" stroke-width="2"/></svg>
<svg class="a" style="left:9px;top:118px" width="22" height="19" viewBox="0 0 22 19"><path d="M11 2 Q20 2 20 7.5 Q20 13 11 13 L5 17 L6 12.5 Q2 11 2 7.5 Q2 2 11 2Z" fill="#222"/></svg>
<svg class="a" style="left:10px;top:152px" width="20" height="20" viewBox="0 0 20 20"><path d="M3 3 H14 V9 M3 3 V18 H14 V14 M6 7 H11 M6 10 H10 M6 13 H9" fill="none" stroke="#222" stroke-width="1.6"/><path d="M10 14 L17 6 L19 8 L12 16 L9 17Z" fill="#222"/></svg>
<svg class="a" style="left:10px;top:187px" width="20" height="20" viewBox="0 0 20 20"><circle cx="11" cy="11" r="6.5" fill="none" stroke="#222" stroke-width="1.8"/><path d="M11 11 L13 8 M9 2 H13 M11 2 V4.5 M1 9 H4 M1 12 H4 M2 15 H5" fill="none" stroke="#222" stroke-width="1.5"/></svg>
<svg class="a" style="left:9px;top:222px" width="22" height="22" viewBox="0 0 22 22"><circle cx="11" cy="11" r="9.5" fill="#222"/><path d="M11 5 L16 8 V14 L11 17 L6 14 V8Z" fill="none" stroke="#fff" stroke-width="1.3"/><path d="M11 8 L13.5 9.5 V12.5 L11 14 L8.5 12.5 V9.5Z" fill="none" stroke="#fff" stroke-width="1"/><path d="M17 17 L21 21" stroke="#222" stroke-width="2.5"/></svg>
<div class="a" style="left:0;top:251px;width:39px;height:1px;background:#dcdcdc"></div>
<svg class="a" style="left:10px;top:258px" width="20" height="20" viewBox="0 0 20 20"><rect x="2.5" y="2" width="15" height="16" rx="1.5" fill="none" stroke="#222" stroke-width="1.6"/><path d="M5 6 L6.5 7.5 L8.5 5 M5 10 L6.5 11.5 L8.5 9 M5 14 L6.5 15 L8.5 13 M10 6.5 H15 M10 10.5 H15 M10 14.5 H15" fill="none" stroke="#222" stroke-width="1.2"/></svg>
<svg class="a" style="left:9px;top:1054px" width="22" height="20" viewBox="0 0 22 20"><path d="M1 3 H17 V7" fill="none" stroke="#222" stroke-width="2"/><rect x="1" y="3" width="8" height="8" fill="#222"/><circle cx="12" cy="11" r="4.5" fill="#fafafa" stroke="#222" stroke-width="2"/><path d="M15 14 L19 18" stroke="#222" stroke-width="2.4"/></svg>
<svg class="a" style="left:50px;top:91px" width="18" height="18" viewBox="0 0 18 18"><path d="M1.5 2 H16.5 L10.5 9 V16 L7.5 14 V9Z" fill="none" stroke="#333" stroke-width="1.3" stroke-linejoin="round"/></svg>
<div class="a" style="left:79px;top:84px;width:122px;height:30px;border:1px solid #bdbdbd;border-radius:4px;background:#fff"></div>
<div class="t" style="left:86px;top:91.5px;font-size:13.6px;letter-spacing:-0.3px;line-height:18px;color:#8a8a8a;font-weight:normal;font-style:italic">Filter by name</div>
<svg class="a" style="left:214px;top:92px" width="16" height="15" viewBox="0 0 16 15"><path d="M0 1.5 H2 M0 5 H2 M0 8.5 H2 M0 12 H2" stroke="#222" stroke-width="2"/><path d="M4 1.5 H15 M4 5 H15 M4 8.5 H15 M4 12 H15" stroke="#222" stroke-width="2"/></svg>
<div class="t" style="left:44px;top:121.5px;font-size:13.6px;letter-spacing:-0.3px;line-height:18px;color:#333;font-weight:bold;font-style:normal">Instances (47)</div>
<svg class="a" style="left:215px;top:122px" width="20" height="16" viewBox="0 0 20 16"><path d="M2 8 V3 H7 L8.5 5 H18 V15 H2 V13" fill="none" stroke="#333" stroke-width="1.2"/><path d="M6 8 V14 M3 11 H9" stroke="#1f5bb5" stroke-width="2"/></svg>
<svg class="a" style="left:46px;top:149px" width="16" height="16" viewBox="0 0 16 16"><rect x="1" y="1" width="14" height="14" fill="none" stroke="#777" stroke-width="1.2" stroke-dasharray="2.5 2"/><rect x="4" y="4" width="8" height="8" fill="none" stroke="#444" stroke-width="1.2"/><rect x="5" y="5" width="4" height="4" fill="#888"/></svg>
<div class="t" style="left:66px;top:148.5px;font-size:14.0px;letter-spacing:-0.3px;line-height:18px;color:#333;font-weight:normal;font-style:normal">Exercise...</div>
<svg class="a" style="left:134px;top:147px" width="12" height="18" viewBox="0 0 12 18"><path d="M6 1 V8 M3 5.5 L6 8.5 L9 5.5" fill="none" stroke="#222" stroke-width="1.6"/><circle cx="6" cy="13" r="3.3" fill="none" stroke="#222" stroke-width="1.3"/><circle cx="6" cy="13" r="1.3" fill="#222"/></svg>
<svg class="a" style="left:68px;top:178px" width="10" height="10" viewBox="0 0 10 10"><circle cx="5" cy="5" r="3.5" fill="none" stroke="#777" stroke-width="1"/><circle cx="5" cy="5" r="1.5" fill="#777"/></svg>
<div class="t" style="left:86px;top:174.5px;font-size:14.0px;letter-spacing:-0.3px;line-height:18px;color:#333;font-weight:normal;font-style:normal">Origin</div>
<svg class="a" style="left:46px;top:203px" width="9" height="13" viewBox="0 0 9 13"><path d="M2 1.5 L6.5 6.5 L2 11.5" fill="none" stroke="#555" stroke-width="1.8"/></svg>
<svg class="a" style="left:65px;top:200px" width="18" height="18" viewBox="0 0 18 18"><path d="M3 7 L7 4 H10 V9 H14 V16 H3Z M3 7 V16 M7 4 V9 H14" fill="none" stroke="#c4c4c4" stroke-width="1.1"/></svg>
<div class="t" style="left:86px;top:200.5px;font-size:14.0px;letter-spacing:-0.3px;line-height:18px;color:#9e9e9e;font-weight:normal;font-style:normal">Origin Cube &lt;1&gt;</div>
<svg class="a" style="left:46px;top:229px" width="9" height="13" viewBox="0 0 9 13"><path d="M2 1.5 L6.5 6.5 L2 11.5" fill="none" stroke="#555" stroke-width="1.8"/></svg>
<svg class="a" style="left:65px;top:228px" width="16" height="14" viewBox="0 0 16 14"><path d="M1 2 H6 L7.5 4 H15 V13 H1Z" fill="none" stroke="#888" stroke-width="1.1"/></svg>
<div class="t" style="left:86px;top:226.5px;font-size:14.0px;letter-spacing:-0.3px;line-height:18px;color:#333;font-weight:normal;font-style:normal">Structure (10)</div>
<svg class="a" style="left:46px;top:255px" width="9" height="13" viewBox="0 0 9 13"><path d="M2 1.5 L6.5 6.5 L2 11.5" fill="none" stroke="#555" stroke-width="1.8"/></svg>
<svg class="a" style="left:65px;top:254px" width="16" height="14" viewBox="0 0 16 14"><path d="M1 2 H6 L7.5 4 H15 V13 H1Z" fill="none" stroke="#888" stroke-width="1.1"/></svg>
<div class="t" style="left:86px;top:252.5px;font-size:14.0px;letter-spacing:-0.3px;line-height:18px;color:#333;font-weight:normal;font-style:normal">Power (9)</div>
<svg class="a" style="left:46px;top:281px" width="9" height="13" viewBox="0 0 9 13"><path d="M2 1.5 L6.5 6.5 L2 11.5" fill="none" stroke="#555" stroke-width="1.8"/></svg>
<svg class="a" style="left:65px;top:280px" width="16" height="14" viewBox="0 0 16 14"><path d="M1 2 H6 L7.5 4 H15 V13 H1Z" fill="none" stroke="#888" stroke-width="1.1"/></svg>
<div class="t" style="left:86px;top:278.5px;font-size:14.0px;letter-spacing:-0.3px;line-height:18px;color:#333;font-weight:normal;font-style:normal">Motors (...</div>
<svg class="a" style="left:46px;top:307px" width="9" height="13" viewBox="0 0 9 13"><path d="M2 1.5 L6.5 6.5 L2 11.5" fill="none" stroke="#555" stroke-width="1.8"/></svg>
<svg class="a" style="left:65px;top:306px" width="16" height="14" viewBox="0 0 16 14"><path d="M1 2 H6 L7.5 4 H15 V13 H1Z" fill="none" stroke="#888" stroke-width="1.1"/></svg>
<div class="t" style="left:86px;top:304.5px;font-size:14.0px;letter-spacing:-0.3px;line-height:18px;color:#333;font-weight:normal;font-style:normal">Fasteners (16)</div>
<svg class="a" style="left:152px;top:279px" width="16" height="16" viewBox="0 0 16 16"><circle cx="8" cy="8" r="7.5" fill="#6d9bd0"/><path d="M8 3.5 V11 M4.8 8 L8 11.5 L11.2 8" fill="none" stroke="#fff" stroke-width="2.2"/></svg>
<svg class="a" style="left:44px;top:334px" width="12" height="9" viewBox="0 0 12 9"><path d="M1 2 L6 7 L11 2" fill="none" stroke="#555" stroke-width="1.8"/></svg>
<div class="t" style="left:63px;top:330.5px;font-size:14.0px;letter-spacing:-0.3px;line-height:18px;color:#333;font-weight:normal;font-style:normal">Items (0)</div>
<svg class="a" style="left:44px;top:360px" width="12" height="9" viewBox="0 0 12 9"><path d="M1 2 L6 7 L11 2" fill="none" stroke="#555" stroke-width="1.8"/></svg>
<div class="t" style="left:63px;top:356.5px;font-size:14.0px;letter-spacing:-0.3px;line-height:18px;color:#333;font-weight:normal;font-style:normal">Loads (0)</div>
<svg class="a" style="left:44px;top:386px" width="12" height="9" viewBox="0 0 12 9"><path d="M1 2 L6 7 L11 2" fill="none" stroke="#555" stroke-width="1.8"/></svg>
<div class="t" style="left:63px;top:382.5px;font-size:14.0px;letter-spacing:-0.3px;line-height:18px;color:#333;font-weight:normal;font-style:normal">Mate Features (31)</div>
<div class="a" style="left:49px;top:405px;width:1px;height:645px;background:#dcdcdc"></div>
<svg class="a" style="left:84px;top:409px" width="16" height="16" viewBox="0 0 16 16"><rect x="1" y="1" width="14" height="14" fill="none" stroke="#aaa" stroke-width="1.2" stroke-dasharray="2.5 2"/><rect x="4" y="4" width="5.5" height="5.5" fill="none" stroke="#aaa" stroke-width="1"/><rect x="6.5" y="6.5" width="5.5" height="5.5" fill="none" stroke="#aaa" stroke-width="1"/></svg>
<div class="t" style="left:105px;top:408.5px;font-size:14.0px;letter-spacing:-0.3px;line-height:18px;color:#9e9e9e;font-weight:normal;font-style:normal">Group 1</div>
<svg class="a" style="left:64px;top:437px" width="9" height="13" viewBox="0 0 9 13"><path d="M2 1.5 L6.5 6.5 L2 11.5" fill="none" stroke="#555" stroke-width="1.8"/></svg>
<svg class="a" style="left:86px;top:434px" width="13" height="17" viewBox="0 0 13 17"><path d="M6.5 16 Q1 9 1 6 A5.5 5.5 0 0 1 12 6 Q12 9 6.5 16Z" fill="none" stroke="#b4b4b4" stroke-width="1.1"/><circle cx="6.5" cy="6" r="2" fill="none" stroke="#b4b4b4" stroke-width="1"/></svg>
<div class="t" style="left:105px;top:434.5px;font-size:14.0px;letter-spacing:-0.3px;line-height:18px;color:#9e9e9e;font-weight:normal;font-style:normal">Fastened 1</div>
<svg class="a" style="left:64px;top:463px" width="9" height="13" viewBox="0 0 9 13"><path d="M2 1.5 L6.5 6.5 L2 11.5" fill="none" stroke="#555" stroke-width="1.8"/></svg>
<svg class="a" style="left:85px;top:461px" width="14" height="15" viewBox="0 0 14 15"><path d="M1.5 4 V11.5 Q7 15 12.5 11.5 V4" fill="#d6d6d6" stroke="#c8c8c8" stroke-width="1"/><ellipse cx="7" cy="4" rx="5.5" ry="2.5" fill="#fff" stroke="#c4c4c4" stroke-width="1"/><path d="M1.5 8 Q7 11 12.5 8 V11.5 Q7 15 1.5 11.5Z" fill="#bdbdbd"/></svg>
<div class="t" style="left:105px;top:460.5px;font-size:14.0px;letter-spacing:-0.3px;line-height:18px;color:#9e9e9e;font-weight:normal;font-style:normal">Fastened 4</div>
<svg class="a" style="left:64px;top:489px" width="9" height="13" viewBox="0 0 9 13"><path d="M2 1.5 L6.5 6.5 L2 11.5" fill="none" stroke="#555" stroke-width="1.8"/></svg>
<svg class="a" style="left:85px;top:487px" width="14" height="15" viewBox="0 0 14 15"><path d="M1.5 4 V11.5 Q7 15 12.5 11.5 V4" fill="#d6d6d6" stroke="#c8c8c8" stroke-width="1"/><ellipse cx="7" cy="4" rx="5.5" ry="2.5" fill="#fff" stroke="#c4c4c4" stroke-width="1"/><path d="M1.5 8 Q7 11 12.5 8 V11.5 Q7 15 1.5 11.5Z" fill="#bdbdbd"/></svg>
<div class="t" style="left:105px;top:486.5px;font-size:14.0px;letter-spacing:-0.3px;line-height:18px;color:#9e9e9e;font-weight:normal;font-style:normal">Fastened 7</div>
<svg class="a" style="left:64px;top:515px" width="9" height="13" viewBox="0 0 9 13"><path d="M2 1.5 L6.5 6.5 L2 11.5" fill="none" stroke="#555" stroke-width="1.8"/></svg>
<svg class="a" style="left:85px;top:513px" width="14" height="15" viewBox="0 0 14 15"><path d="M1.5 4 V11.5 Q7 15 12.5 11.5 V4" fill="#d6d6d6" stroke="#c8c8c8" stroke-width="1"/><ellipse cx="7" cy="4" rx="5.5" ry="2.5" fill="#fff" stroke="#c4c4c4" stroke-width="1"/><path d="M1.5 8 Q7 11 12.5 8 V11.5 Q7 15 1.5 11.5Z" fill="#bdbdbd"/></svg>
<div class="t" style="left:105px;top:512.5px;font-size:14.0px;letter-spacing:-0.3px;line-height:18px;color:#9e9e9e;font-weight:normal;font-style:normal">Fastened 8</div>
<svg class="a" style="left:64px;top:541px" width="9" height="13" viewBox="0 0 9 13"><path d="M2 1.5 L6.5 6.5 L2 11.5" fill="none" stroke="#555" stroke-width="1.8"/></svg>
<svg class="a" style="left:85px;top:539px" width="14" height="15" viewBox="0 0 14 15"><path d="M1.5 4 V11.5 Q7 15 12.5 11.5 V4" fill="#d6d6d6" stroke="#c8c8c8" stroke-width="1"/><ellipse cx="7" cy="4" rx="5.5" ry="2.5" fill="#fff" stroke="#c4c4c4" stroke-width="1"/><path d="M1.5 8 Q7 11 12.5 8 V11.5 Q7 15 1.5 11.5Z" fill="#bdbdbd"/></svg>
<div class="t" style="left:105px;top:538.5px;font-size:14.0px;letter-spacing:-0.3px;line-height:18px;color:#9e9e9e;font-weight:normal;font-style:normal">Fastened 9</div>
<svg class="a" style="left:64px;top:567px" width="9" height="13" viewBox="0 0 9 13"><path d="M2 1.5 L6.5 6.5 L2 11.5" fill="none" stroke="#555" stroke-width="1.8"/></svg>
<svg class="a" style="left:85px;top:565px" width="14" height="15" viewBox="0 0 14 15"><path d="M1.5 4 V11.5 Q7 15 12.5 11.5 V4" fill="#d6d6d6" stroke="#c8c8c8" stroke-width="1"/><ellipse cx="7" cy="4" rx="5.5" ry="2.5" fill="#fff" stroke="#c4c4c4" stroke-width="1"/><path d="M1.5 8 Q7 11 12.5 8 V11.5 Q7 15 1.5 11.5Z" fill="#bdbdbd"/></svg>
<div class="t" style="left:105px;top:564.5px;font-size:14.0px;letter-spacing:-0.3px;line-height:18px;color:#9e9e9e;font-weight:normal;font-style:normal">Fastened 10</div>
<svg class="a" style="left:64px;top:593px" width="9" height="13" viewBox="0 0 9 13"><path d="M2 1.5 L6.5 6.5 L2 11.5" fill="none" stroke="#555" stroke-width="1.8"/></svg>
<svg class="a" style="left:85px;top:591px" width="14" height="15" viewBox="0 0 14 15"><path d="M1.5 4 V11.5 Q7 15 12.5 11.5 V4" fill="#d6d6d6" stroke="#c8c8c8" stroke-width="1"/><ellipse cx="7" cy="4" rx="5.5" ry="2.5" fill="#fff" stroke="#c4c4c4" stroke-width="1"/><path d="M1.5 8 Q7 11 12.5 8 V11.5 Q7 15 1.5 11.5Z" fill="#bdbdbd"/></svg>
<div class="t" style="left:105px;top:590.5px;font-size:14.0px;letter-spacing:-0.3px;line-height:18px;color:#9e9e9e;font-weight:normal;font-style:normal">Fastened 11</div>
<svg class="a" style="left:64px;top:619px" width="9" height="13" viewBox="0 0 9 13"><path d="M2 1.5 L6.5 6.5 L2 11.5" fill="none" stroke="#555" stroke-width="1.8"/></svg>
<svg class="a" style="left:85px;top:617px" width="14" height="15" viewBox="0 0 14 15"><path d="M1.5 4 V11.5 Q7 15 12.5 11.5 V4" fill="#d6d6d6" stroke="#c8c8c8" stroke-width="1"/><ellipse cx="7" cy="4" rx="5.5" ry="2.5" fill="#fff" stroke="#c4c4c4" stroke-width="1"/><path d="M1.5 8 Q7 11 12.5 8 V11.5 Q7 15 1.5 11.5Z" fill="#bdbdbd"/></svg>
<div class="t" style="left:105px;top:616.5px;font-size:14.0px;letter-spacing:-0.3px;line-height:18px;color:#9e9e9e;font-weight:normal;font-style:normal">Fastened 12</div>
<svg class="a" style="left:64px;top:645px" width="9" height="13" viewBox="0 0 9 13"><path d="M2 1.5 L6.5 6.5 L2 11.5" fill="none" stroke="#555" stroke-width="1.8"/></svg>
<svg class="a" style="left:85px;top:643px" width="14" height="15" viewBox="0 0 14 15"><path d="M1.5 4 V11.5 Q7 15 12.5 11.5 V4" fill="#d6d6d6" stroke="#c8c8c8" stroke-width="1"/><ellipse cx="7" cy="4" rx="5.5" ry="2.5" fill="#fff" stroke="#c4c4c4" stroke-width="1"/><path d="M1.5 8 Q7 11 12.5 8 V11.5 Q7 15 1.5 11.5Z" fill="#bdbdbd"/></svg>
<div class="t" style="left:105px;top:642.5px;font-size:14.0px;letter-spacing:-0.3px;line-height:18px;color:#9e9e9e;font-weight:normal;font-style:normal">Fastened 13</div>
<svg class="a" style="left:64px;top:671px" width="9" height="13" viewBox="0 0 9 13"><path d="M2 1.5 L6.5 6.5 L2 11.5" fill="none" stroke="#555" stroke-width="1.8"/></svg>
<svg class="a" style="left:85px;top:669px" width="14" height="15" viewBox="0 0 14 15"><path d="M1.5 4 V11.5 Q7 15 12.5 11.5 V4" fill="#d6d6d6" stroke="#c8c8c8" stroke-width="1"/><ellipse cx="7" cy="4" rx="5.5" ry="2.5" fill="#fff" stroke="#c4c4c4" stroke-width="1"/><path d="M1.5 8 Q7 11 12.5 8 V11.5 Q7 15 1.5 11.5Z" fill="#bdbdbd"/></svg>
<div class="t" style="left:105px;top:668.5px;font-size:14.0px;letter-spacing:-0.3px;line-height:18px;color:#9e9e9e;font-weight:normal;font-style:normal">Fastened 14</div>
<svg class="a" style="left:64px;top:697px" width="9" height="13" viewBox="0 0 9 13"><path d="M2 1.5 L6.5 6.5 L2 11.5" fill="none" stroke="#555" stroke-width="1.8"/></svg>
<svg class="a" style="left:85px;top:695px" width="14" height="15" viewBox="0 0 14 15"><path d="M1.5 4 V11.5 Q7 15 12.5 11.5 V4" fill="#d6d6d6" stroke="#c8c8c8" stroke-width="1"/><ellipse cx="7" cy="4" rx="5.5" ry="2.5" fill="#fff" stroke="#c4c4c4" stroke-width="1"/><path d="M1.5 8 Q7 11 12.5 8 V11.5 Q7 15 1.5 11.5Z" fill="#bdbdbd"/></svg>
<div class="t" style="left:105px;top:694.5px;font-size:14.0px;letter-spacing:-0.3px;line-height:18px;color:#9e9e9e;font-weight:normal;font-style:normal">Fastened 15</div>
<svg class="a" style="left:64px;top:723px" width="9" height="13" viewBox="0 0 9 13"><path d="M2 1.5 L6.5 6.5 L2 11.5" fill="none" stroke="#555" stroke-width="1.8"/></svg>
<svg class="a" style="left:85px;top:721px" width="14" height="15" viewBox="0 0 14 15"><path d="M1.5 4 V11.5 Q7 15 12.5 11.5 V4" fill="#d6d6d6" stroke="#c8c8c8" stroke-width="1"/><ellipse cx="7" cy="4" rx="5.5" ry="2.5" fill="#fff" stroke="#c4c4c4" stroke-width="1"/><path d="M1.5 8 Q7 11 12.5 8 V11.5 Q7 15 1.5 11.5Z" fill="#bdbdbd"/></svg>
<div class="t" style="left:105px;top:720.5px;font-size:14.0px;letter-spacing:-0.3px;line-height:18px;color:#9e9e9e;font-weight:normal;font-style:normal">Fastened 16</div>
<svg class="a" style="left:64px;top:749px" width="9" height="13" viewBox="0 0 9 13"><path d="M2 1.5 L6.5 6.5 L2 11.5" fill="none" stroke="#555" stroke-width="1.8"/></svg>
<svg class="a" style="left:85px;top:747px" width="14" height="15" viewBox="0 0 14 15"><path d="M1.5 4 V11.5 Q7 15 12.5 11.5 V4" fill="#d6d6d6" stroke="#c8c8c8" stroke-width="1"/><ellipse cx="7" cy="4" rx="5.5" ry="2.5" fill="#fff" stroke="#c4c4c4" stroke-width="1"/><path d="M1.5 8 Q7 11 12.5 8 V11.5 Q7 15 1.5 11.5Z" fill="#bdbdbd"/></svg>
<div class="t" style="left:105px;top:746.5px;font-size:14.0px;letter-spacing:-0.3px;line-height:18px;color:#9e9e9e;font-weight:normal;font-style:normal">Fastened 17</div>
<svg class="a" style="left:64px;top:775px" width="9" height="13" viewBox="0 0 9 13"><path d="M2 1.5 L6.5 6.5 L2 11.5" fill="none" stroke="#555" stroke-width="1.8"/></svg>
<svg class="a" style="left:85px;top:773px" width="14" height="15" viewBox="0 0 14 15"><path d="M1.5 4 V11.5 Q7 15 12.5 11.5 V4" fill="#d6d6d6" stroke="#c8c8c8" stroke-width="1"/><ellipse cx="7" cy="4" rx="5.5" ry="2.5" fill="#fff" stroke="#c4c4c4" stroke-width="1"/><path d="M1.5 8 Q7 11 12.5 8 V11.5 Q7 15 1.5 11.5Z" fill="#bdbdbd"/></svg>
<div class="t" style="left:105px;top:772.5px;font-size:14.0px;letter-spacing:-0.3px;line-height:18px;color:#9e9e9e;font-weight:normal;font-style:normal">Fastened 20</div>
<svg class="a" style="left:64px;top:801px" width="9" height="13" viewBox="0 0 9 13"><path d="M2 1.5 L6.5 6.5 L2 11.5" fill="none" stroke="#555" stroke-width="1.8"/></svg>
<svg class="a" style="left:85px;top:799px" width="14" height="15" viewBox="0 0 14 15"><path d="M1.5 4 V11.5 Q7 15 12.5 11.5 V4" fill="#d6d6d6" stroke="#c8c8c8" stroke-width="1"/><ellipse cx="7" cy="4" rx="5.5" ry="2.5" fill="#fff" stroke="#c4c4c4" stroke-width="1"/><path d="M1.5 8 Q7 11 12.5 8 V11.5 Q7 15 1.5 11.5Z" fill="#bdbdbd"/></svg>
<div class="t" style="left:105px;top:798.5px;font-size:14.0px;letter-spacing:-0.3px;line-height:18px;color:#9e9e9e;font-weight:normal;font-style:normal">Fastened 22</div>
<svg class="a" style="left:64px;top:827px" width="9" height="13" viewBox="0 0 9 13"><path d="M2 1.5 L6.5 6.5 L2 11.5" fill="none" stroke="#555" stroke-width="1.8"/></svg>
<svg class="a" style="left:85px;top:825px" width="14" height="15" viewBox="0 0 14 15"><path d="M1.5 4 V11.5 Q7 15 12.5 11.5 V4" fill="#d6d6d6" stroke="#c8c8c8" stroke-width="1"/><ellipse cx="7" cy="4" rx="5.5" ry="2.5" fill="#fff" stroke="#c4c4c4" stroke-width="1"/><path d="M1.5 8 Q7 11 12.5 8 V11.5 Q7 15 1.5 11.5Z" fill="#bdbdbd"/></svg>
<div class="t" style="left:105px;top:824.5px;font-size:14.0px;letter-spacing:-0.3px;line-height:18px;color:#9e9e9e;font-weight:normal;font-style:normal">Fastened 18</div>
<svg class="a" style="left:64px;top:853px" width="9" height="13" viewBox="0 0 9 13"><path d="M2 1.5 L6.5 6.5 L2 11.5" fill="none" stroke="#555" stroke-width="1.8"/></svg>
<svg class="a" style="left:85px;top:851px" width="14" height="15" viewBox="0 0 14 15"><path d="M1.5 4 V11.5 Q7 15 12.5 11.5 V4" fill="#d6d6d6" stroke="#c8c8c8" stroke-width="1"/><ellipse cx="7" cy="4" rx="5.5" ry="2.5" fill="#fff" stroke="#c4c4c4" stroke-width="1"/><path d="M1.5 8 Q7 11 12.5 8 V11.5 Q7 15 1.5 11.5Z" fill="#bdbdbd"/></svg>
<div class="t" style="left:105px;top:850.5px;font-size:14.0px;letter-spacing:-0.3px;line-height:18px;color:#9e9e9e;font-weight:normal;font-style:normal">Fastened 19</div>
<svg class="a" style="left:64px;top:879px" width="9" height="13" viewBox="0 0 9 13"><path d="M2 1.5 L6.5 6.5 L2 11.5" fill="none" stroke="#555" stroke-width="1.8"/></svg>
<svg class="a" style="left:85px;top:877px" width="14" height="15" viewBox="0 0 14 15"><path d="M1.5 4 V11.5 Q7 15 12.5 11.5 V4" fill="#d6d6d6" stroke="#c8c8c8" stroke-width="1"/><ellipse cx="7" cy="4" rx="5.5" ry="2.5" fill="#fff" stroke="#c4c4c4" stroke-width="1"/><path d="M1.5 8 Q7 11 12.5 8 V11.5 Q7 15 1.5 11.5Z" fill="#bdbdbd"/></svg>
<div class="t" style="left:105px;top:876.5px;font-size:14.0px;letter-spacing:-0.3px;line-height:18px;color:#9e9e9e;font-weight:normal;font-style:normal">Fastened 24</div>
<svg class="a" style="left:64px;top:905px" width="9" height="13" viewBox="0 0 9 13"><path d="M2 1.5 L6.5 6.5 L2 11.5" fill="none" stroke="#555" stroke-width="1.8"/></svg>
<svg class="a" style="left:85px;top:903px" width="14" height="15" viewBox="0 0 14 15"><path d="M1.5 4 V11.5 Q7 15 12.5 11.5 V4" fill="#d6d6d6" stroke="#c8c8c8" stroke-width="1"/><ellipse cx="7" cy="4" rx="5.5" ry="2.5" fill="#fff" stroke="#c4c4c4" stroke-width="1"/><path d="M1.5 8 Q7 11 12.5 8 V11.5 Q7 15 1.5 11.5Z" fill="#bdbdbd"/></svg>
<div class="t" style="left:105px;top:902.5px;font-size:14.0px;letter-spacing:-0.3px;line-height:18px;color:#9e9e9e;font-weight:normal;font-style:normal">Fastened 28</div>
<svg class="a" style="left:64px;top:931px" width="9" height="13" viewBox="0 0 9 13"><path d="M2 1.5 L6.5 6.5 L2 11.5" fill="none" stroke="#555" stroke-width="1.8"/></svg>
<svg class="a" style="left:85px;top:929px" width="14" height="15" viewBox="0 0 14 15"><path d="M1.5 4 V11.5 Q7 15 12.5 11.5 V4" fill="#d6d6d6" stroke="#c8c8c8" stroke-width="1"/><ellipse cx="7" cy="4" rx="5.5" ry="2.5" fill="#fff" stroke="#c4c4c4" stroke-width="1"/><path d="M1.5 8 Q7 11 12.5 8 V11.5 Q7 15 1.5 11.5Z" fill="#bdbdbd"/></svg>
<div class="t" style="left:105px;top:928.5px;font-size:14.0px;letter-spacing:-0.3px;line-height:18px;color:#9e9e9e;font-weight:normal;font-style:normal">Fastened 29</div>
<svg class="a" style="left:64px;top:957px" width="9" height="13" viewBox="0 0 9 13"><path d="M2 1.5 L6.5 6.5 L2 11.5" fill="none" stroke="#555" stroke-width="1.8"/></svg>
<svg class="a" style="left:85px;top:955px" width="14" height="15" viewBox="0 0 14 15"><path d="M1.5 4 V11.5 Q7 15 12.5 11.5 V4" fill="#d6d6d6" stroke="#c8c8c8" stroke-width="1"/><ellipse cx="7" cy="4" rx="5.5" ry="2.5" fill="#fff" stroke="#c4c4c4" stroke-width="1"/><path d="M1.5 8 Q7 11 12.5 8 V11.5 Q7 15 1.5 11.5Z" fill="#bdbdbd"/></svg>
<div class="t" style="left:105px;top:954.5px;font-size:14.0px;letter-spacing:-0.3px;line-height:18px;color:#9e9e9e;font-weight:normal;font-style:normal">Fastened 25</div>
<svg class="a" style="left:64px;top:983px" width="9" height="13" viewBox="0 0 9 13"><path d="M2 1.5 L6.5 6.5 L2 11.5" fill="none" stroke="#555" stroke-width="1.8"/></svg>
<svg class="a" style="left:85px;top:981px" width="14" height="15" viewBox="0 0 14 15"><path d="M1.5 4 V11.5 Q7 15 12.5 11.5 V4" fill="#d6d6d6" stroke="#c8c8c8" stroke-width="1"/><ellipse cx="7" cy="4" rx="5.5" ry="2.5" fill="#fff" stroke="#c4c4c4" stroke-width="1"/><path d="M1.5 8 Q7 11 12.5 8 V11.5 Q7 15 1.5 11.5Z" fill="#bdbdbd"/></svg>
<div class="t" style="left:105px;top:980.5px;font-size:14.0px;letter-spacing:-0.3px;line-height:18px;color:#9e9e9e;font-weight:normal;font-style:normal">Fastened 26</div>
<svg class="a" style="left:64px;top:1009px" width="9" height="13" viewBox="0 0 9 13"><path d="M2 1.5 L6.5 6.5 L2 11.5" fill="none" stroke="#555" stroke-width="1.8"/></svg>
<svg class="a" style="left:85px;top:1007px" width="14" height="15" viewBox="0 0 14 15"><path d="M1.5 4 V11.5 Q7 15 12.5 11.5 V4" fill="#d6d6d6" stroke="#c8c8c8" stroke-width="1"/><ellipse cx="7" cy="4" rx="5.5" ry="2.5" fill="#fff" stroke="#c4c4c4" stroke-width="1"/><path d="M1.5 8 Q7 11 12.5 8 V11.5 Q7 15 1.5 11.5Z" fill="#bdbdbd"/></svg>
<div class="t" style="left:105px;top:1006.5px;font-size:14.0px;letter-spacing:-0.3px;line-height:18px;color:#9e9e9e;font-weight:normal;font-style:normal">Fastened 2</div>
<svg class="a" style="left:64px;top:1035px" width="9" height="13" viewBox="0 0 9 13"><path d="M2 1.5 L6.5 6.5 L2 11.5" fill="none" stroke="#555" stroke-width="1.8"/></svg>
<svg class="a" style="left:85px;top:1033px" width="14" height="15" viewBox="0 0 14 15"><path d="M1.5 4 V11.5 Q7 15 12.5 11.5 V4" fill="#d6d6d6" stroke="#c8c8c8" stroke-width="1"/><ellipse cx="7" cy="4" rx="5.5" ry="2.5" fill="#fff" stroke="#c4c4c4" stroke-width="1"/><path d="M1.5 8 Q7 11 12.5 8 V11.5 Q7 15 1.5 11.5Z" fill="#bdbdbd"/></svg>
<div class="t" style="left:105px;top:1032.5px;font-size:14.0px;letter-spacing:-0.3px;line-height:18px;color:#9e9e9e;font-weight:normal;font-style:normal">Fastened 3</div>
<div class="a" style="left:245px;top:538px;width:33px;height:35px;background:#fff;border:1px solid #c8c8c8;border-left:none"></div>
<svg class="a" style="left:252px;top:546px" width="18" height="18" viewBox="0 0 18 18"><path d="M1 2 L3 4 L5 2 M3 4 V17 M7 4 H17 M7 8 H17 M7 12 H17 M7 16 H17" fill="none" stroke="#333" stroke-width="1.3"/></svg>
<!-- /TREE -->
<!-- MISC -->
<svg class="a" style="left:48px;top:1056px" width="16" height="16" viewBox="0 0 16 16"><path d="M8 1 V15 M1 8 H15" stroke="#555" stroke-width="2.4"/></svg>
<div class="a" style="left:73px;top:1050px;width:1px;height:29px;background:#c8c8c8"></div>
<svg class="a" style="left:74px;top:1050px" width="175" height="29" viewBox="0 0 175 29"><path d="M0 0 H35 L42 14.5 L35 29 H0Z" fill="#ebebeb"/><path d="M35 0 H165 L172 14.5 L165 29 H35 L42 14.5Z" fill="#fafafa"/><path d="M35 0 L42 14.5 L35 29 M165 0 L172 14.5 L165 29" fill="none" stroke="#d0d0d0" stroke-width="1"/></svg>
<svg class="a" style="left:83px;top:1053px" width="19" height="18" viewBox="0 0 19 18"><path d="M9.5 1 L18 9 H16 V17 H11.5 V12 H7.5 V17 H3 V9 H1Z" fill="#555"/><rect x="13" y="2" width="2.5" height="5" fill="#555"/></svg>
<div class="t" style="left:130px;top:1054px;font-size:13.6px;line-height:18px;color:#444;font-weight:normal">Exercise 5 - Flip</div>
<div class="a" style="left:217px;top:1052px;width:22px;height:24px;background:linear-gradient(90deg,rgba(250,250,250,0),#fafafa 60%)"></div>
<div class="a" style="left:247px;top:1050px;width:200px;height:29px;background:#fff;border-radius:3px 3px 0 0"></div>
<div class="a" style="left:248px;top:1076px;width:198px;height:3px;background:#1b4ea0;border-radius:2px"></div>
<svg class="a" style="left:259px;top:1056px" width="14" height="15" viewBox="0 0 14 15"><ellipse cx="7" cy="7.5" rx="6.5" ry="7" fill="#6d9bd0"/><rect x="5.5" y="6.5" width="3" height="6" fill="#fff"/><circle cx="7" cy="4" r="1.5" fill="#fff"/></svg>
<svg class="a" style="left:277px;top:1053px" width="18" height="20" viewBox="0 0 18 20"><path d="M1 4 L5 1 H17 V16 L13 19 H1Z M1 4 H13 V19 M13 4 L17 1" fill="none" stroke="#333" stroke-width="1.2"/><rect x="3" y="6" width="8" height="8" fill="#888"/></svg>
<div class="t" style="left:300px;top:1055px;font-size:13.9px;line-height:18px;color:#333;font-weight:normal">Exercise 5 Assembly</div>
<div class="a" style="left:449px;top:1050px;width:200px;height:29px;background:#ebebeb;border-radius:3px 3px 3px 3px"></div>
<svg class="a" style="left:460px;top:1054px" width="18" height="18" viewBox="0 0 18 18"><path d="M1 5 L4 3 V17 H1Z M4 3 L8 5 V17 H4 M10 4 L13 1 H17 V17 H10Z M13 1 V17" fill="none" stroke="#555" stroke-width="1.2"/></svg>
<div class="t" style="left:482px;top:1055px;font-size:13.7px;line-height:18px;color:#666;font-weight:normal">Exercise 5 Part Studio</div>
<svg class="a" style="left:1821px;top:1029px" width="18" height="14" viewBox="0 0 18 14"><ellipse cx="11" cy="5" rx="5.5" ry="4" fill="none" stroke="#222" stroke-width="1.2"/><ellipse cx="11" cy="4.5" rx="2.5" ry="1.3" fill="none" stroke="#222" stroke-width="1"/><path d="M1 7 H11 M1 7 V12 H13 L16 9 V5 M3 10 V12 M6 10 V12 M9 10 V12" fill="none" stroke="#222" stroke-width="1.2"/></svg>
<svg class="a" style="left:1855px;top:1029px" width="20" height="14" viewBox="0 0 20 14"><path d="M1 13 A9 9 0 0 1 19 13Z" fill="none" stroke="#222" stroke-width="1.3"/><path d="M6 11 A4 4 0 0 1 14 11" fill="none" stroke="#222" stroke-width="2"/></svg>
<svg class="a" style="left:1892px;top:1028px" width="16" height="15" viewBox="0 0 16 15"><path d="M1 1 H15 M8 1 V11 M0 14 H16" stroke="#222" stroke-width="1.5"/><path d="M1 1 L0 9 M1 1 L3 9 M15 1 L13 9 M15 1 L16 9" stroke="#222" stroke-width="0.7"/><rect x="0" y="9" width="4" height="2" fill="#222"/><rect x="12" y="9" width="4" height="2" fill="#222"/></svg>
<div class="a" style="left:1888px;top:368px;width:31px;height:198px;border:1px solid #cfcfcf;border-right:none;background:#fff"></div>
<div class="a" style="left:1889px;top:401px;width:30px;height:1px;background:#dcdcdc"></div>
<div class="a" style="left:1889px;top:434px;width:30px;height:1px;background:#dcdcdc"></div>
<div class="a" style="left:1889px;top:467px;width:30px;height:1px;background:#dcdcdc"></div>
<div class="a" style="left:1889px;top:500px;width:30px;height:1px;background:#dcdcdc"></div>
<div class="a" style="left:1889px;top:533px;width:30px;height:1px;background:#dcdcdc"></div>
<div class="a" style="left:1888px;top:577px;width:31px;height:165px;border:1px solid #cfcfcf;border-right:none;background:#fff"></div>
<div class="a" style="left:1889px;top:610px;width:30px;height:1px;background:#dcdcdc"></div>
<div class="a" style="left:1889px;top:643px;width:30px;height:1px;background:#dcdcdc"></div>
<div class="a" style="left:1889px;top:676px;width:30px;height:1px;background:#dcdcdc"></div>
<div class="a" style="left:1889px;top:709px;width:30px;height:1px;background:#dcdcdc"></div>
<svg class="a" style="left:1895px;top:376px" width="18" height="18" viewBox="0 0 18 18"><rect x="1" y="1" width="16" height="16" rx="3" fill="none" stroke="#222" stroke-width="1.4"/><path d="M4 5 H14 M6 8 H14 M6 11 H14 M6 14 H14" stroke="#222" stroke-width="1.2"/></svg>
<svg class="a" style="left:1895px;top:409px" width="18" height="18" viewBox="0 0 18 18"><path d="M7 9 L12 6 L17 9 V15 L12 18 L7 15Z M7 9 L12 12 L17 9 M12 12 V18" fill="none" stroke="#222" stroke-width="1.2"/><rect x="1" y="1" width="8" height="7" fill="#1f5bb5"/><path d="M1 3.5H9 M1 6H9 M3.5 1V8 M6 1V8" stroke="#fff" stroke-width="0.6"/></svg>
<svg class="a" style="left:1895px;top:441px" width="18" height="18" viewBox="0 0 18 18"><rect x="1" y="1" width="5" height="5" fill="#ccc" stroke="#444" stroke-width="1"/><path d="M8 9 H13 V11 H15 V17 H8Z M4 6 V8 H7" fill="none" stroke="#444" stroke-width="1.2"/></svg>
<svg class="a" style="left:1895px;top:474px" width="18" height="18" viewBox="0 0 18 18"><path d="M8 1 H13 V11" fill="none" stroke="#1f5bb5" stroke-width="1" stroke-dasharray="2 1.2"/><rect x="1" y="11" width="16" height="6" fill="none" stroke="#222" stroke-width="1.3"/><circle cx="13" cy="14" r="2" fill="none" stroke="#222" stroke-width="1"/></svg>
<svg class="a" style="left:1895px;top:507px" width="18" height="18" viewBox="0 0 18 18"><path d="M9 1 L16 5 L16 13 L9 17 L2 13 L2 5Z" fill="#6aa0d8"/><path d="M9 1 L9 9 L2 13 M9 9 L16 13" stroke="#fff" stroke-width="1.2"/><path d="M9 9 L16 13 L9 17Z" fill="#1f5bb5"/></svg>
<svg class="a" style="left:1894px;top:539px" width="20" height="19" viewBox="0 0 20 19"><path d="M2 2 V17 M2 2 H8 V8 H2 M4 5 H7 M4 11 H8 M13 3 Q10 9 13 16 M17 3 Q20 9 17 16" fill="none" stroke="#222" stroke-width="1.5"/><path d="M10 8 L16 14 M16 8 L10 14" stroke="#222" stroke-width="1.8"/></svg>
<svg class="a" style="left:1894px;top:583px" width="21" height="20" viewBox="0 0 21 20"><rect x="0" y="0" width="21" height="20" rx="2" fill="#e6e6e6"/><rect x="2" y="2" width="17" height="16" fill="#1f5bb5"/><text x="10.5" y="14.5" font-family="Liberation Serif" font-size="10.5" font-weight="bold" fill="#fff" text-anchor="middle">MK</text></svg>
<svg class="a" style="left:1894px;top:616px" width="21" height="20" viewBox="0 0 21 20"><rect x="0" y="0" width="21" height="20" rx="2" fill="#e0e0e0"/><path d="M10.5 9 Q7 3 2 4 Q4 10 8 11 Q5 14 6 17 Q10 15 10.5 12 Q11 15 15 17 Q16 14 13 11 Q17 10 19 4 Q14 3 10.5 9Z" fill="#111"/></svg>
<svg class="a" style="left:1894px;top:649px" width="21" height="20" viewBox="0 0 21 20"><rect x="0" y="0" width="21" height="20" rx="2" fill="#d0d0d0"/><rect x="2" y="7" width="17" height="10" rx="3" fill="#333"/><circle cx="7.5" cy="12" r="2.5" fill="#8bb8e8"/><circle cx="13.5" cy="12" r="2.5" fill="#8bb8e8"/><path d="M6 3 H15 M10.5 3 V7" stroke="#333" stroke-width="1.5"/></svg>
<svg class="a" style="left:1894px;top:682px" width="21" height="20" viewBox="0 0 21 20"><rect x="0" y="0" width="21" height="20" rx="2" fill="#5ab05a"/><path d="M4 5 Q7 4 10 6 V16 Q7 14 4 15Z M17 5 Q14 4 11 6 V16 Q14 14 17 15Z" fill="#fff"/></svg>
<svg class="a" style="left:1894px;top:715px" width="21" height="20" viewBox="0 0 21 20"><rect x="0" y="0" width="21" height="20" rx="2" fill="#1f5bb5"/><path d="M4 5 Q7 4 10 6 V16 Q7 14 4 15Z M17 5 Q14 4 11 6 V16 Q14 14 17 15Z" fill="#fff"/></svg>
<!-- /MISC -->
<!-- NAV -->
<svg class="a" style="left:1740px;top:80px" width="180" height="180" viewBox="1740 80 180 180">
<path d="M1822 101 L1830 91 L1838 101Z" fill="#8f8f8f"/>
<path d="M1822 227 L1830 238 L1838 227Z" fill="#8f8f8f"/>
<path d="M1755 166 L1765 159 L1765 173Z" fill="#8f8f8f"/>
<path d="M1905 166 L1895 159 L1895 173Z" fill="#8f8f8f"/>
<path d="M1809 101 Q1790 107 1781 119" fill="none" stroke="#8f8f8f" stroke-width="5"/><path d="M1775 125 L1776 113 L1789 120Z" fill="#8f8f8f"/>
<path d="M1851 101 Q1870 107 1879 119" fill="none" stroke="#8f8f8f" stroke-width="5"/><path d="M1885 125 L1884 113 L1871 120Z" fill="#8f8f8f"/>
<path d="M1812 127 Q1830 118 1858 133 Q1867 140 1868 152 L1866 188 Q1860 198 1840 205 Q1832 208 1822 203 L1800 190 Q1795 185 1795 175 L1795 148 Q1797 135 1812 127Z" fill="#fbfcfc" stroke="#e4e8ea" stroke-width="3"/>
<path d="M1800 150 Q1830 165 1862 145 M1830 165 L1836 205" fill="none" stroke="#e4e8ea" stroke-width="3"/>
<circle cx="1838" cy="160" r="6" fill="#f0f2f3"/><circle cx="1800" cy="150" r="4" fill="#f0f2f3"/>
<path d="M1819 153 V120" stroke="#3b3fbf" stroke-width="1"/><path d="M1818 172 L1789 196" stroke="#e05050" stroke-width="1"/><path d="M1818 172 L1869 186" stroke="#3aaa3a" stroke-width="1"/>
<text x="1818" y="116" font-family="Liberation Sans" font-size="11" fill="#2a2ab0" text-anchor="middle">Z</text>
<text x="1784" y="204" font-family="Liberation Sans" font-size="11" fill="#e03030" text-anchor="middle">X</text>
<text x="1878" y="191" font-family="Liberation Sans" font-size="11" fill="#2a9a2a" text-anchor="middle">Y</text>
<text x="1816" y="182" font-family="Liberation Sans" font-size="10" fill="#222" text-anchor="middle" transform="rotate(10 1816 180)">Right</text>
<text x="1856" y="178" font-family="Liberation Sans" font-size="8" fill="#333" font-style="italic" text-anchor="middle" transform="rotate(-35 1856 176)">Back</text>
<text x="1832" y="142" font-family="Liberation Sans" font-size="8" fill="#444" text-anchor="middle" transform="rotate(165 1832 140)">Top</text>
<path d="M1867 225 L1875 222 L1884 225 V237 L1875 241 L1867 237Z" fill="#bbb" stroke="#333" stroke-width="1"/><path d="M1867 225 L1875 229 L1884 225 M1875 229 V241" fill="none" stroke="#333" stroke-width="0.8"/><path d="M1875 229 L1884 225 V237 L1875 241Z" fill="#e0e0e0"/>
<path d="M1892 230 H1899 L1895.5 234Z" fill="#222"/>
</svg>
<!-- /NAV -->
</body></html>
